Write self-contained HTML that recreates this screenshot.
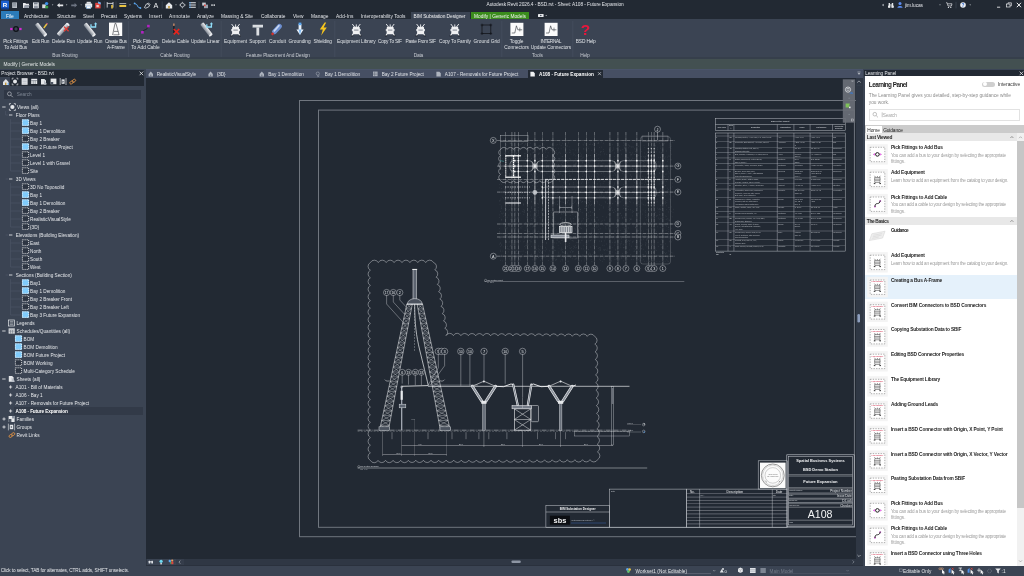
<!DOCTYPE html>
<html><head><meta charset="utf-8"><title>Autodesk Revit 2026.4 - BSD.rvt - Sheet: A108 - Future Expansion</title>
<style>
html,body{margin:0;padding:0;background:#222933;overflow:hidden}
body{width:1024px;height:576px;position:relative;font-family:"Liberation Sans",sans-serif;}
#app{position:absolute;left:0;top:0;width:1024px;height:576px;overflow:hidden;will-change:transform}
.b{position:absolute;box-sizing:border-box;overflow:hidden}
.t{position:absolute;white-space:nowrap;}
svg{overflow:visible}
svg text{font-family:"Liberation Sans",sans-serif}
</style></head><body><div id="app">
<div class="b" style="left:0.00px;top:0.00px;width:1024.00px;height:11.20px;background:#222933;"></div>
<div class="b" style="left:0.00px;top:11.20px;width:1024.00px;height:8.20px;background:#222933;"></div>
<div class="b" style="left:0.00px;top:19.40px;width:1024.00px;height:40.60px;background:#3b4453;"></div>
<div class="b" style="left:0.00px;top:57.00px;width:1024.00px;height:3.00px;background:#363f4b;"></div>
<div class="b" style="left:0.00px;top:58.60px;width:1024.00px;height:12.40px;background:#435051;"></div>
<div class="b" style="left:0.00px;top:68.50px;width:1024.00px;height:2.50px;background:#3b4556;"></div>
<svg class="b" style="left:0.00px;top:0.00px;" width="260" height="11" viewBox="0 0 260 11"><rect x="1" y="0.6" width="8" height="8.6" rx="0.6" fill="#1b5fd0"/><rect x="1" y="7.6" width="8" height="1.6" fill="#0d3c94"/><text x="5" y="6.8" font-size="6.2" font-weight="bold" fill="#fff" text-anchor="middle">R</text><path d="M12.2 2.4h4.8v5.6h-4.8z" fill="#b9bec6"/><path d="M13 3.6h3.2M13 4.8h3.2M13 6h3.2" stroke="#5b6472" stroke-width=".5"/><path d="M23 3h2.4l.6.8h3v4.2h-6z" fill="#e9ebee"/><path d="M23.6 8l1-3h5l-1 3z" fill="#9aa1ad"/><rect x="33" y="2.4" width="5.8" height="5.8" fill="#e4e6ea"/><rect x="34" y="2.4" width="3.6" height="2" fill="#7d8592"/><rect x="34" y="5.6" width="3.8" height="2.6" fill="#9097a3"/><path d="M42.2 4.4h3.6v3.8h-3.6z" fill="#d7dade"/><circle cx="46.6" cy="3.6" r="1.7" fill="#3c8fe6"/><circle cx="46.8" cy="7" r="1.6" fill="#3aa04a"/><path d="M51.8 4.6h1.6l-.8 1z" fill="#c9cdd3"/><path d="M57 5.2l2.6-2.2v1.4h3.6v1.8h-3.6v1.3z" fill="#e6e8eb"/><path d="M65.8 4.6h1.6l-.8 1z" fill="#c9cdd3"/><path d="M77.2 5.2l-2.6-2.2v1.4h-3.4v1.8h3.4v1.3z" fill="#6d7583"/><path d="M80.4 4.6h1.6l-.8 1z" fill="#8b919c"/><rect x="85.2" y="3.6" width="7" height="3.8" rx=".6" fill="#eceef0"/><rect x="86.6" y="1.8" width="4.2" height="2" fill="#dfe2e6"/><rect x="86.6" y="6" width="4.2" height="2.6" fill="#fff" stroke="#7fb4ea" stroke-width=".5"/><path d="M95.2 2.8h5.4v5.6h-5.4z" fill="#e0423c"/><path d="M98 1.6l2.8 1v2l-2.8-1z" fill="#6fb0ee"/><rect x="96.4" y="5" width="2.4" height="2.2" fill="#f7c9c5"/><path d="M104.4 1.4v7.2M116 1.4v7.2" stroke="#4b5462" stroke-width=".5"/><path d="M107.2 2v5.6M113 2v5.6M107.2 3.4h5.8" stroke="#e8eaed" stroke-width=".8" fill="none"/><path d="M111.2 5h1.6v3l-.8.9-.8-.9z" fill="#e8c341"/><path d="M119.4 3.6h6.8" stroke="#e8eaed" stroke-width=".7"/><rect x="119.4" y="5" width="6.8" height="2" fill="#e8c341"/><path d="M129.2 4.6h1.6l-.8 1z" fill="#c9cdd3"/><path d="M134.4 3.4l2.4 1.2 1.4 2.6 2.4.8" stroke="#5aa7f0" stroke-width=".9" fill="none"/><circle cx="134.6" cy="3.4" r=".9" fill="#5aa7f0"/><circle cx="140.4" cy="8" r=".9" fill="#5aa7f0"/><path d="M144.4 7.6l2-3.6 2.2-1 1.4 1.6-1.2 2.2-3 1.4z" fill="none" stroke="#dfe2e6" stroke-width=".8"/><circle cx="148.2" cy="4.6" r=".7" fill="#dfe2e6"/><text x="156" y="8" font-size="7.2" fill="#eceef0" text-anchor="middle">A</text><path d="M162.2 1.4v7.2M199 1.4v7.2" stroke="#4b5462" stroke-width=".5"/><path d="M165.8 5.2l3.2-3 3.2 3v3.2h-6.4z" fill="#e6e8eb"/><rect x="168.2" y="6" width="1.6" height="2.4" fill="#c49a3a"/><path d="M175.2 4.6h1.6l-.8 1z" fill="#c9cdd3"/><circle cx="182.4" cy="5" r="2" fill="none" stroke="#dfe2e6" stroke-width=".7"/><path d="M182.4 1.8v1.4M182.4 6.8v1.6M179.2 5h1.4M184.2 5h1.6" stroke="#dfe2e6" stroke-width=".6"/><path d="M189.2 2.8h6.6M189.2 5h6.6M189.2 7.2h6.6" stroke="#e6e8eb" stroke-width="1.1"/><path d="M189.2 2.8h1.6M189.2 5h1.6M189.2 7.2h1.6" stroke="#5aa7f0" stroke-width="1.1"/><rect x="202.2" y="2.6" width="3.6" height="3" fill="#c8ccd2"/><rect x="204" y="4.6" width="4" height="3.6" fill="#9aa1ad"/><rect x="204" y="4.6" width="1.6" height="1.6" fill="#e0423c"/><path d="M211.4 4.2h1.2v1.8h-1.2zM213.6 4.2h1.2v1.8h-1.2z" fill="#e6e8eb"/></svg>
<span class="t " style="left:486.50px;top:2px;font-size:4.8px;line-height:5px;color:#e2e4e8;letter-spacing:-0.065px;">Autodesk Revit 2026.4 - BSD.rvt - Sheet: A108 - Future Expansion</span>
<svg class="b" style="left:0.00px;top:0.00px;" width="1024" height="11" viewBox="0 0 1024 11"><path d="M883.6 3.8v2.4l-1.6-1.2z" fill="#c9cdd3"/><path d="M888.6 3h1.4v4.4h-1.4zM891.8 3h1.4v4.4h-1.4zM890 4.4h1.8v1.2h-1.8z" fill="#e6e8eb"/><rect x="888" y="5.4" width="2.4" height="2.4" rx=".6" fill="#e6e8eb"/><rect x="891.4" y="5.4" width="2.4" height="2.4" rx=".6" fill="#e6e8eb"/><circle cx="900" cy="3.4" r="1.5" fill="#5b8cf0"/><path d="M897.4 7.8c0-2.4 5.2-2.4 5.2 0z" fill="#5b8cf0"/><path d="M939.2 4.6h1.6l-.8 1z" fill="#c9cdd3"/><path d="M946 2.8h1.2l.8 3.2h3.4l.6-2.2h-4.2" stroke="#e6e8eb" stroke-width=".7" fill="none"/><circle cx="948.4" cy="7.4" r=".6" fill="#e6e8eb"/><circle cx="950.8" cy="7.4" r=".6" fill="#e6e8eb"/><path d="M956 1.8v6.6" stroke="#4b5462" stroke-width=".5"/><circle cx="963" cy="5" r="2.8" fill="#eef0f3"/><text x="963" y="6.8" font-size="4.8" font-weight="bold" fill="#2a62c9" text-anchor="middle">?</text><path d="M969.4 4.6h1.6l-.8 1z" fill="#c9cdd3"/><path d="M997 7.2h3.2" stroke="#e6e8eb" stroke-width=".9"/><rect x="1006.6" y="4" width="3.4" height="3" fill="none" stroke="#e6e8eb" stroke-width=".7"/><path d="M1008 4v-1.2h3.4v3h-1.4" fill="none" stroke="#e6e8eb" stroke-width=".7"/><path d="M1016.8 2.8l4.2 4.4M1021 2.8l-4.2 4.4" stroke="#f2f3f5" stroke-width="1"/></svg>
<span class="t " style="left:905.00px;top:3px;font-size:4.8px;line-height:5px;color:#e2e4e8;letter-spacing:-0.084px;">jim.lucas</span>
<div class="b" style="left:1.00px;top:11.20px;width:18.00px;height:8.20px;background:#2b7bb9;"></div>
<span class="t " style="left:6.00px;top:14px;font-size:4.8px;line-height:5px;color:#ffffff;letter-spacing:-0.045px;">File</span>
<span class="t " style="left:24.00px;top:14px;font-size:4.8px;line-height:5px;color:#e2e4e8;letter-spacing:-0.055px;">Architecture</span>
<span class="t " style="left:57.00px;top:14px;font-size:4.8px;line-height:5px;color:#e2e4e8;letter-spacing:-0.059px;">Structure</span>
<span class="t " style="left:83.00px;top:14px;font-size:4.8px;line-height:5px;color:#e2e4e8;letter-spacing:0.015px;">Steel</span>
<span class="t " style="left:101.00px;top:14px;font-size:4.8px;line-height:5px;color:#e2e4e8;letter-spacing:-0.045px;">Precast</span>
<span class="t " style="left:124.00px;top:14px;font-size:4.8px;line-height:5px;color:#e2e4e8;letter-spacing:-0.067px;">Systems</span>
<span class="t " style="left:149.00px;top:14px;font-size:4.8px;line-height:5px;color:#e2e4e8;letter-spacing:0.199px;">Insert</span>
<span class="t " style="left:169.00px;top:14px;font-size:4.8px;line-height:5px;color:#e2e4e8;letter-spacing:0.255px;">Annotate</span>
<span class="t " style="left:197.00px;top:14px;font-size:4.8px;line-height:5px;color:#e2e4e8;letter-spacing:-0.013px;">Analyze</span>
<span class="t " style="left:221.00px;top:14px;font-size:4.8px;line-height:5px;color:#e2e4e8;">Massing &amp; Site</span>
<span class="t " style="left:261.00px;top:14px;font-size:4.8px;line-height:5px;color:#e2e4e8;">Collaborate</span>
<span class="t " style="left:293.00px;top:14px;font-size:4.8px;line-height:5px;color:#e2e4e8;letter-spacing:0.061px;">View</span>
<span class="t " style="left:311.00px;top:14px;font-size:4.8px;line-height:5px;color:#e2e4e8;letter-spacing:0.031px;">Manage</span>
<span class="t " style="left:336.00px;top:14px;font-size:4.8px;line-height:5px;color:#e2e4e8;letter-spacing:0.160px;">Add-Ins</span>
<span class="t " style="left:361.00px;top:14px;font-size:4.8px;line-height:5px;color:#e2e4e8;letter-spacing:0.027px;">Interoperability Tools</span>
<div class="b" style="left:410.50px;top:11.60px;width:59.30px;height:7.80px;background:#3b4453;"></div>
<span class="t " style="left:413.50px;top:14px;font-size:4.8px;line-height:5px;color:#f0f1f3;letter-spacing:-0.050px;">BIM Substation Designer</span>
<div class="b" style="left:470.60px;top:11.60px;width:58.40px;height:7.80px;background:#3a8c1c;"></div>
<span class="t " style="left:474.00px;top:14px;font-size:4.8px;line-height:5px;color:#f4f6f4;letter-spacing:0.015px;">Modify | Generic Models</span>
<svg class="b" style="left:0.00px;top:0.00px;" width="560" height="20" viewBox="0 0 560 20"><rect x="538" y="14" width="5.6" height="3" rx=".6" fill="#e6e8eb"/><circle cx="540.8" cy="15.5" r=".8" fill="#3b4453"/><path d="M545.4 15h1.6l-.8 1z" fill="#c9cdd3"/></svg>
<span class="t " style="left:3.20px;top:39px;font-size:4.8px;line-height:5px;color:#dfe2e6;letter-spacing:-0.073px;">Pick Fittings</span>
<span class="t " style="left:4.20px;top:45px;font-size:4.8px;line-height:5px;color:#dfe2e6;letter-spacing:-0.143px;">To Add Bus</span>
<span class="t " style="left:32.05px;top:39px;font-size:4.8px;line-height:5px;color:#dfe2e6;letter-spacing:-0.130px;">Edit Run</span>
<span class="t " style="left:52.10px;top:39px;font-size:4.8px;line-height:5px;color:#dfe2e6;letter-spacing:-0.113px;">Delete Run</span>
<span class="t " style="left:77.05px;top:39px;font-size:4.8px;line-height:5px;color:#dfe2e6;letter-spacing:-0.013px;">Update Run</span>
<span class="t " style="left:105.00px;top:39px;font-size:4.8px;line-height:5px;color:#dfe2e6;letter-spacing:-0.223px;">Create Bus</span>
<span class="t " style="left:107.00px;top:45px;font-size:4.8px;line-height:5px;color:#dfe2e6;letter-spacing:-0.111px;">A-Frame</span>
<span class="t " style="left:132.90px;top:39px;font-size:4.8px;line-height:5px;color:#dfe2e6;letter-spacing:-0.073px;">Pick Fittings</span>
<span class="t " style="left:131.15px;top:45px;font-size:4.8px;line-height:5px;color:#dfe2e6;">To Add Cable</span>
<span class="t " style="left:162.10px;top:39px;font-size:4.8px;line-height:5px;color:#dfe2e6;letter-spacing:-0.068px;">Delete Cable</span>
<span class="t " style="left:191.05px;top:39px;font-size:4.8px;line-height:5px;color:#dfe2e6;letter-spacing:-0.138px;">Update Linear</span>
<span class="t " style="left:224.10px;top:39px;font-size:4.8px;line-height:5px;color:#dfe2e6;letter-spacing:0.007px;">Equipment</span>
<span class="t " style="left:249.35px;top:39px;font-size:4.8px;line-height:5px;color:#dfe2e6;letter-spacing:-0.052px;">Support</span>
<span class="t " style="left:269.00px;top:39px;font-size:4.8px;line-height:5px;color:#dfe2e6;letter-spacing:0.076px;">Conduit</span>
<span class="t " style="left:288.60px;top:39px;font-size:4.8px;line-height:5px;color:#dfe2e6;letter-spacing:-0.052px;">Grounding</span>
<span class="t " style="left:313.55px;top:39px;font-size:4.8px;line-height:5px;color:#dfe2e6;letter-spacing:-0.156px;">Shielding</span>
<span class="t " style="left:337.05px;top:39px;font-size:4.8px;line-height:5px;color:#dfe2e6;letter-spacing:-0.028px;">Equipment Library</span>
<span class="t " style="left:378.00px;top:39px;font-size:4.8px;line-height:5px;color:#dfe2e6;letter-spacing:-0.232px;">Copy To SIF</span>
<span class="t " style="left:405.55px;top:39px;font-size:4.8px;line-height:5px;color:#dfe2e6;letter-spacing:-0.239px;">Paste From SIF</span>
<span class="t " style="left:439.00px;top:39px;font-size:4.8px;line-height:5px;color:#dfe2e6;letter-spacing:-0.076px;">Copy To Family</span>
<span class="t " style="left:473.50px;top:39px;font-size:4.8px;line-height:5px;color:#dfe2e6;letter-spacing:-0.021px;">Ground Grid</span>
<span class="t " style="left:509.85px;top:39px;font-size:4.8px;line-height:5px;color:#dfe2e6;letter-spacing:-0.129px;">Toggle</span>
<span class="t " style="left:504.35px;top:45px;font-size:4.8px;line-height:5px;color:#dfe2e6;">Connectors</span>
<span class="t " style="left:540.60px;top:39px;font-size:4.8px;line-height:5px;color:#dfe2e6;letter-spacing:-0.420px;">INTERNAL</span>
<span class="t " style="left:530.75px;top:45px;font-size:4.8px;line-height:5px;color:#dfe2e6;letter-spacing:-0.053px;">Update Connectors</span>
<span class="t " style="left:575.80px;top:39px;font-size:4.8px;line-height:5px;color:#dfe2e6;letter-spacing:-0.154px;">BSD Help</span>
<span class="t " style="left:52.25px;top:53px;font-size:4.8px;line-height:5px;color:#c5c9cf;letter-spacing:-0.065px;">Bus Routing</span>
<span class="t " style="left:160.25px;top:53px;font-size:4.8px;line-height:5px;color:#c5c9cf;letter-spacing:-0.076px;">Cable Routing</span>
<span class="t " style="left:246.00px;top:53px;font-size:4.8px;line-height:5px;color:#c5c9cf;letter-spacing:-0.090px;">Feature Placement And Design</span>
<span class="t " style="left:413.75px;top:53px;font-size:4.8px;line-height:5px;color:#c5c9cf;letter-spacing:-0.213px;">Data</span>
<span class="t " style="left:532.00px;top:53px;font-size:4.8px;line-height:5px;color:#c5c9cf;letter-spacing:-0.051px;">Tools</span>
<span class="t " style="left:580.25px;top:53px;font-size:4.8px;line-height:5px;color:#c5c9cf;letter-spacing:-0.124px;">Help</span>
<svg class="b" style="left:0.00px;top:0.00px;" width="620" height="58" viewBox="0 0 620 58"><defs><linearGradient id="cg" x1="0" y1="0" x2="0" y2="1"><stop offset="0" stop-color="#f1f2f4"/><stop offset=".5" stop-color="#b9bdc4"/><stop offset="1" stop-color="#7f8691"/></linearGradient></defs><path d="M128.6 21v36" stroke="#4a5363" stroke-width=".6"/><path d="M221.2 21v36" stroke="#4a5363" stroke-width=".6"/><path d="M334.8 21v36" stroke="#4a5363" stroke-width=".6"/><path d="M501.8 21v36" stroke="#4a5363" stroke-width=".6"/><path d="M572.8 21v36" stroke="#4a5363" stroke-width=".6"/><path d="M11 29h10" stroke="#14171c" stroke-width=".9"/><rect x="10.2" y="27.9" width="2.4" height="2.2" fill="#d22ad2"/><rect x="19.2" y="27.9" width="2.4" height="2.2" fill="#d22ad2"/><circle cx="16" cy="29" r="2.3" fill="#3b4453" stroke="#101318" stroke-width="1.3"/><g transform="rotate(52 41 29.5)"><rect x="33.5" y="27.5" width="15" height="4" rx="1" fill="url(#cg)"/><ellipse cx="48.1" cy="29.5" rx="1" ry="2.0" fill="#e9ebee"/></g><path d="M43.2 27.6l3-4 1.2.9-3 4z" fill="#e8c341"/><path d="M46.2 23.6l.6-.8 1.2.9-.6.8z" fill="#e05a8a"/><g transform="rotate(-48 63.2 29.6)"><rect x="55.7" y="27.6" width="15" height="4" rx="1" fill="url(#cg)"/><ellipse cx="70.3" cy="29.6" rx="1" ry="2.0" fill="#e9ebee"/></g><path d="M64 26.6l4.6 4.6M68.6 26.6l-4.6 4.6" stroke="#e23b32" stroke-width="1.3"/><g transform="rotate(52 89.6 29.6)"><rect x="82.1" y="27.6" width="15" height="4" rx="1" fill="url(#cg)"/><ellipse cx="96.69999999999999" cy="29.6" rx="1" ry="2.0" fill="#e9ebee"/></g><path d="M91 24.200v2.800h4.600v-3.200" stroke="#8fdcf7" stroke-width="1.300" fill="none"/><path d="M94 24.200l1.600-1.900 1.600 1.900z" fill="#8fdcf7"/><rect x="109" y="22.6" width="13.2" height="13.4" fill="#fbfbfb"/><path d="M112.6 35l2.4-11.6h.9l3.2 11.6M114 31.4h4.2M113.4 34.8h5.6" stroke="#30343b" stroke-width=".6" fill="none"/><path d="M142.400 32.200c.8-3 4.800-1.600 6-5.800" stroke="#161a20" stroke-width=".8" fill="none"/><rect x="141.100" y="31" width="2.600" height="2.600" fill="#b322c4"/><rect x="147.100" y="24.800" width="2.600" height="2.600" fill="#b322c4"/><path d="M173.900 25v8" stroke="#15181d" stroke-width="1.200"/><path d="M173.900 23.600v2.400" stroke="#f0a070" stroke-width="1.100"/><path d="M173.800 29l5.400 5.400M179.200 29l-5.400 5.400" stroke="#e8241c" stroke-width="1.700"/><g transform="rotate(52 206.4 29.4)"><rect x="198.9" y="27.4" width="15" height="4" rx="1" fill="url(#cg)"/><ellipse cx="213.5" cy="29.4" rx="1" ry="2.0" fill="#e9ebee"/></g><path d="M206.800 24.200v2.800h4.600v-3.200" stroke="#8fdcf7" stroke-width="1.300" fill="none"/><path d="M209.800 24.200l1.600-1.900 1.600 1.900z" fill="#8fdcf7"/><g transform="translate(235.6 29.6)"><path d="M-1.600 -2.400L-4 -5.600M0 -2.400V-5.200M1.600 -2.400L4 -5.600" stroke="#f1f2f4" stroke-width=".9"/><path d="M-2.800 3.800L-4.400 6.200M2.800 3.800L4.400 6.200" stroke="#f4f5f6" stroke-width="1.100"/><path d="M-5.200 6.300h2M3.200 6.300h2" stroke="#111418" stroke-width=".8"/><rect x="-4.400" y="-.6" width="8.800" height="2.200" fill="#d4d7dc"/><rect x="-3.500" y="-2.800" width="7" height="7.400" rx="1.200" fill="#eff0f2"/><path d="M-2.200 .5h4.400" stroke="#737a86" stroke-width=".9"/></g><path d="M252.6 24.8h10.4v2.6h-3.8v8h-2.8v-8h-3.8z" fill="#dcdfe3"/><path d="M252.6 27.4h10.4" stroke="#8f96a1" stroke-width=".5"/><g transform="rotate(-48 277 29)"><rect x="271" y="26.6" width="12" height="4.8" rx="2" fill="#6d8fd0"/><rect x="273" y="27.4" width="8.6" height="1.6" rx=".8" fill="#c9d8f3"/><rect x="269.2" y="27.8" width="2.4" height="2.4" fill="#d2302a"/></g><path d="M298.6 24h2.8v5.6h2.2l-3.6 5.4-3.6-5.4h2.2z" fill="#eaf2fb"/><path d="M298.6 22.6h2.8v2.6h-2.8z" fill="#5aa7f0"/><path d="M298.6 29.6l1.4 5.4 1.4-5.4z" fill="#7db9f2"/><path d="M324.6 22.6l-4.8 7h3l-1.6 5.8 5.6-7.8h-3.2l2.6-5z" fill="#f6c51e"/><g transform="translate(356.3 29.6)"><path d="M-1.600 -2.400L-4 -5.600M0 -2.400V-5.200M1.600 -2.400L4 -5.600" stroke="#f1f2f4" stroke-width=".9"/><path d="M-2.800 3.800L-4.400 6.200M2.800 3.800L4.400 6.200" stroke="#f4f5f6" stroke-width="1.100"/><path d="M-5.200 6.300h2M3.200 6.300h2" stroke="#111418" stroke-width=".8"/><rect x="-4.400" y="-.6" width="8.800" height="2.200" fill="#d4d7dc"/><rect x="-3.500" y="-2.800" width="7" height="7.400" rx="1.200" fill="#eff0f2"/><path d="M-2.200 .5h4.400" stroke="#737a86" stroke-width=".9"/></g><g transform="translate(390.2 29.6)"><path d="M-1.600 -2.400L-4 -5.600M0 -2.400V-5.200M1.600 -2.400L4 -5.600" stroke="#f1f2f4" stroke-width=".9"/><path d="M-2.800 3.800L-4.400 6.200M2.800 3.800L4.400 6.200" stroke="#f4f5f6" stroke-width="1.100"/><path d="M-5.200 6.300h2M3.200 6.300h2" stroke="#111418" stroke-width=".8"/><rect x="-4.400" y="-.6" width="8.800" height="2.200" fill="#d4d7dc"/><rect x="-3.500" y="-2.800" width="7" height="7.400" rx="1.200" fill="#eff0f2"/><path d="M-2.200 .5h4.400" stroke="#737a86" stroke-width=".9"/></g><g transform="translate(420.6 29.6)"><path d="M-1.600 -2.400L-4 -5.600M0 -2.400V-5.200M1.600 -2.400L4 -5.600" stroke="#f1f2f4" stroke-width=".9"/><path d="M-2.800 3.800L-4.400 6.200M2.800 3.800L4.400 6.200" stroke="#f4f5f6" stroke-width="1.100"/><path d="M-5.200 6.300h2M3.200 6.300h2" stroke="#111418" stroke-width=".8"/><rect x="-4.400" y="-.6" width="8.800" height="2.200" fill="#d4d7dc"/><rect x="-3.500" y="-2.800" width="7" height="7.400" rx="1.200" fill="#eff0f2"/><path d="M-2.200 .5h4.400" stroke="#737a86" stroke-width=".9"/></g><g transform="translate(454.8 29.6)"><path d="M-1.600 -2.400L-4 -5.600M0 -2.400V-5.200M1.600 -2.400L4 -5.600" stroke="#f1f2f4" stroke-width=".9"/><path d="M-2.800 3.800L-4.400 6.200M2.800 3.800L4.400 6.200" stroke="#f4f5f6" stroke-width="1.100"/><path d="M-5.200 6.300h2M3.200 6.300h2" stroke="#111418" stroke-width=".8"/><rect x="-4.400" y="-.6" width="8.800" height="2.200" fill="#d4d7dc"/><rect x="-3.500" y="-2.800" width="7" height="7.400" rx="1.200" fill="#eff0f2"/><path d="M-2.200 .5h4.400" stroke="#737a86" stroke-width=".9"/></g><rect x="482" y="25" width="8.8" height="8.6" fill="none" stroke="#14171c" stroke-width=".8"/><path d="M480.6 25h2.8M482 23.6v2.8" stroke="#14171c" stroke-width=".7"/><path d="M480.6 33.6h2.8M482 32.2v2.8" stroke="#14171c" stroke-width=".7"/><path d="M489.40000000000003 25h2.8M490.8 23.6v2.8" stroke="#14171c" stroke-width=".7"/><path d="M489.40000000000003 33.6h2.8M490.8 32.2v2.8" stroke="#14171c" stroke-width=".7"/><rect x="510.4" y="22.8" width="13" height="13.2" fill="#fbfbfb"/><path d="M511.79999999999995 33.0h3l1.6-7.2 1.4 4h4.4" stroke="#2e3239" stroke-width=".6" fill="none"/><path d="M519.8 27.6v3.8" stroke="#2e3239" stroke-width=".5"/><rect x="544.6" y="22.8" width="13" height="13.2" fill="#fbfbfb"/><path d="M546.0 33.0h3l1.6-7.2 1.4 4h4.4" stroke="#2e3239" stroke-width=".6" fill="none"/><path d="M554.0 27.6v3.8" stroke="#2e3239" stroke-width=".5"/><text x="585.4" y="35" font-size="15.5" font-weight="bold" fill="#e8173c" text-anchor="middle">?</text></svg>
<span class="t " style="left:3.60px;top:62px;font-size:4.8px;line-height:5px;color:#e2e6e6;letter-spacing:-0.012px;">Modify | Generic Models</span>
<div class="b" style="left:0.00px;top:70.00px;width:145.80px;height:497.00px;background:#3b4453;"></div>
<div class="b" style="left:0.00px;top:70.20px;width:144.20px;height:6.40px;background:#222933;"></div>
<span class="t " style="left:1.30px;top:71px;font-size:4.7px;line-height:5px;color:#e6e8eb;letter-spacing:-0.039px;">Project Browser - BSD.rvt</span>
<svg class="b" style="left:0.00px;top:0.00px;" width="146" height="100" viewBox="0 0 146 100"><path d="M139.6 71.6l3.6 3.6M143.2 71.6l-3.6 3.6" stroke="#e6e8eb" stroke-width=".8"/></svg>
<div class="b" style="left:10.40px;top:77.20px;width:133.80px;height:8.50px;background:#222933;"></div>
<svg class="b" style="left:0.00px;top:0.00px;" width="146" height="100" viewBox="0 0 146 100"><path d="M3 82l2.8-3 2.8 3v3h-5.6z" fill="#dfe2e6"/><rect x="5" y="82.6" width="1.4" height="2.4" fill="#c49a3a"/><rect x="7.6" y="83.2" width="1.4" height="1.4" fill="#5aa7f0"/><circle cx="15" cy="81.4" r="2" fill="#e6e8eb"/><path d="M12.2 79.6v-1.4h1.4M17.8 79.6v-1.4h-1.4M12.2 83.4v1.4h1.4M17.8 83.4v1.4h-1.4" stroke="#e6e8eb" stroke-width=".7" fill="none"/><rect x="21.6" y="78.2" width="6" height="6.6" fill="#e6e8eb"/><path d="M22.6 80h4M22.6 81.6h4M22.6 83.2h4" stroke="#9aa1ad" stroke-width=".5"/><rect x="31.2" y="78.8" width="6" height="5.2" fill="#e6e8eb"/><path d="M31.2 80.6h6M33.2 80.6v3.4M35.2 80.6v3.4" stroke="#4d5563" stroke-width=".5"/><path d="M41 79h3.4l1.6 1.6v4h-5z" fill="#e6e8eb"/><path d="M44 80l2.6 3.4v1.2h-2.6z" fill="#b9bec6"/><rect x="50.6" y="78.6" width="5.8" height="5.6" fill="#e6e8eb"/><rect x="50.6" y="82" width="2.6" height="2.2" fill="#4d5563"/><path d="M60.2 78v7M66 78v7" stroke="#e6e8eb" stroke-width=".7"/><path d="M61.6 79.4h3v4.4h-3z" fill="#e6e8eb"/><path d="M62.4 80.6l1.6 1.2-1.6 1.2z" fill="#4d5563"/><g transform="rotate(-35 72.8 81.6)" fill="none" stroke="#d18a45" stroke-width=".9"><rect x="69.4" y="80.4" width="3.8" height="2.4" rx="1.2"/><rect x="72.2" y="80.4" width="3.8" height="2.4" rx="1.2"/></g></svg>
<div class="b" style="left:4.00px;top:90.00px;width:136.80px;height:8.50px;background:#2f3745;"></div>
<svg class="b" style="left:0.00px;top:0.00px;" width="146" height="100" viewBox="0 0 146 100"><circle cx="9.4" cy="93.8" r="1.9" fill="none" stroke="#c9cdd3" stroke-width=".6"/><path d="M10.8 95.2l2 2" stroke="#c9cdd3" stroke-width=".7"/></svg>
<span class="t " style="left:16.80px;top:92px;font-size:4.7px;line-height:5px;color:#7f8794;">Search</span>
<span class="t " style="left:17.00px;top:105px;font-size:4.7px;line-height:5px;color:#e6e8eb;">Views (all)</span>
<span class="t " style="left:15.80px;top:113px;font-size:4.7px;line-height:5px;color:#e6e8eb;">Floor Plans</span>
<span class="t " style="left:30.00px;top:121px;font-size:4.7px;line-height:5px;color:#e6e8eb;">Bay 1</span>
<span class="t " style="left:30.00px;top:129px;font-size:4.7px;line-height:5px;color:#e6e8eb;">Bay 1 Demolition</span>
<span class="t " style="left:30.00px;top:137px;font-size:4.7px;line-height:5px;color:#e6e8eb;">Bay 2 Breaker</span>
<span class="t " style="left:30.00px;top:145px;font-size:4.7px;line-height:5px;color:#e6e8eb;">Bay 2 Future Project</span>
<span class="t " style="left:30.00px;top:153px;font-size:4.7px;line-height:5px;color:#e6e8eb;">Level 1</span>
<span class="t " style="left:30.00px;top:161px;font-size:4.7px;line-height:5px;color:#e6e8eb;">Level 1 with Gravel</span>
<span class="t " style="left:30.00px;top:169px;font-size:4.7px;line-height:5px;color:#e6e8eb;">Site</span>
<span class="t " style="left:15.80px;top:177px;font-size:4.7px;line-height:5px;color:#e6e8eb;">3D Views</span>
<span class="t " style="left:30.00px;top:185px;font-size:4.7px;line-height:5px;color:#e6e8eb;">3D No Toposolid</span>
<span class="t " style="left:30.00px;top:193px;font-size:4.7px;line-height:5px;color:#e6e8eb;">Bay 1</span>
<span class="t " style="left:30.00px;top:201px;font-size:4.7px;line-height:5px;color:#e6e8eb;">Bay 1 Demolition</span>
<span class="t " style="left:30.00px;top:209px;font-size:4.7px;line-height:5px;color:#e6e8eb;">Bay 2 Breaker</span>
<span class="t " style="left:30.00px;top:217px;font-size:4.7px;line-height:5px;color:#e6e8eb;">RealisticVisualStyle</span>
<span class="t " style="left:30.00px;top:225px;font-size:4.7px;line-height:5px;color:#e6e8eb;">{3D}</span>
<span class="t " style="left:15.80px;top:233px;font-size:4.7px;line-height:5px;color:#e6e8eb;">Elevations (Building Elevation)</span>
<span class="t " style="left:30.00px;top:241px;font-size:4.7px;line-height:5px;color:#e6e8eb;">East</span>
<span class="t " style="left:30.00px;top:249px;font-size:4.7px;line-height:5px;color:#e6e8eb;">North</span>
<span class="t " style="left:30.00px;top:257px;font-size:4.7px;line-height:5px;color:#e6e8eb;">South</span>
<span class="t " style="left:30.00px;top:265px;font-size:4.7px;line-height:5px;color:#e6e8eb;">West</span>
<span class="t " style="left:15.80px;top:273px;font-size:4.7px;line-height:5px;color:#e6e8eb;">Sections (Building Section)</span>
<span class="t " style="left:30.00px;top:281px;font-size:4.7px;line-height:5px;color:#e6e8eb;">Bay1</span>
<span class="t " style="left:30.00px;top:289px;font-size:4.7px;line-height:5px;color:#e6e8eb;">Bay 1 Demolition</span>
<span class="t " style="left:30.00px;top:297px;font-size:4.7px;line-height:5px;color:#e6e8eb;">Bay 2 Breaker Front</span>
<span class="t " style="left:30.00px;top:305px;font-size:4.7px;line-height:5px;color:#e6e8eb;">Bay 2 Breaker Left</span>
<span class="t " style="left:30.00px;top:313px;font-size:4.7px;line-height:5px;color:#e6e8eb;">Bay 3 Future Expansion</span>
<span class="t " style="left:16.60px;top:321px;font-size:4.7px;line-height:5px;color:#e6e8eb;">Legends</span>
<span class="t " style="left:16.60px;top:329px;font-size:4.7px;line-height:5px;color:#e6e8eb;">Schedules/Quantities (all)</span>
<span class="t " style="left:23.60px;top:337px;font-size:4.7px;line-height:5px;color:#e6e8eb;">BOM</span>
<span class="t " style="left:23.60px;top:345px;font-size:4.7px;line-height:5px;color:#e6e8eb;">BOM Demolition</span>
<span class="t " style="left:23.60px;top:353px;font-size:4.7px;line-height:5px;color:#e6e8eb;">BOM Future Project</span>
<span class="t " style="left:23.60px;top:361px;font-size:4.7px;line-height:5px;color:#e6e8eb;">BOM Working</span>
<span class="t " style="left:23.60px;top:369px;font-size:4.7px;line-height:5px;color:#e6e8eb;">Multi-Category Schedule</span>
<span class="t " style="left:16.60px;top:377px;font-size:4.7px;line-height:5px;color:#e6e8eb;">Sheets (all)</span>
<span class="t " style="left:15.60px;top:385px;font-size:4.7px;line-height:5px;color:#e6e8eb;">A101 - Bill of Materials</span>
<span class="t " style="left:15.60px;top:393px;font-size:4.7px;line-height:5px;color:#e6e8eb;">A106 - Bay 1</span>
<span class="t " style="left:15.60px;top:401px;font-size:4.7px;line-height:5px;color:#e6e8eb;">A107 - Removals for Future Project</span>
<div class="b" style="left:14.20px;top:407.40px;width:129.20px;height:7.40px;background:#323a48;"></div>
<span class="t " style="left:15.60px;top:409px;font-size:4.7px;line-height:5px;color:#ffffff;font-weight:bold;letter-spacing:-.12px;">A108 - Future Expansion</span>
<span class="t " style="left:16.60px;top:417px;font-size:4.7px;line-height:5px;color:#e6e8eb;">Families</span>
<span class="t " style="left:16.60px;top:425px;font-size:4.7px;line-height:5px;color:#e6e8eb;">Groups</span>
<span class="t " style="left:16.60px;top:433px;font-size:4.7px;line-height:5px;color:#e6e8eb;">Revit Links</span>
<svg class="b" style="left:0.00px;top:0.00px;" width="146" height="566" viewBox="0 0 146 566"><path d="M2.2 107h3.4" stroke="#f1f2f4" stroke-width=".8"/><circle cx="12.4" cy="107" r="2.1" fill="#e6e8eb"/><path d="M9.4 105.2v-1.6h1.6M15.4 105.2v-1.6h-1.6M9.4 108.8v1.6h1.6M15.4 108.8v1.6h-1.6" stroke="#e6e8eb" stroke-width=".7" fill="none"/><path d="M9 115h3.4" stroke="#f1f2f4" stroke-width=".8"/><path d="M5.6 115h2.6" stroke="#596273" stroke-width=".4"/><rect x="22" y="119.4" width="7" height="6.400" fill="#7fcbfb"/><rect x="22.4" y="119.8" width="6.200" height="5.600" fill="none" stroke="#f4f5f6" stroke-width=".8" stroke-dasharray="1.200 .9"/><path d="M10.6 123h10.6" stroke="#596273" stroke-width=".4"/><rect x="22" y="127.4" width="7" height="6.400" fill="#7fcbfb"/><rect x="22.4" y="127.8" width="6.200" height="5.600" fill="none" stroke="#f4f5f6" stroke-width=".8" stroke-dasharray="1.200 .9"/><path d="M10.6 131h10.6" stroke="#596273" stroke-width=".4"/><rect x="22" y="135.4" width="7" height="6.400" fill="#2d3542"/><rect x="22.4" y="135.8" width="6.200" height="5.600" fill="none" stroke="#f4f5f6" stroke-width=".8" stroke-dasharray="1.200 .9"/><path d="M10.6 139h10.6" stroke="#596273" stroke-width=".4"/><rect x="22" y="143.4" width="7" height="6.400" fill="#7fcbfb"/><rect x="22.4" y="143.8" width="6.200" height="5.600" fill="none" stroke="#f4f5f6" stroke-width=".8" stroke-dasharray="1.200 .9"/><path d="M10.6 147h10.6" stroke="#596273" stroke-width=".4"/><rect x="22" y="151.4" width="7" height="6.400" fill="#2d3542"/><rect x="22.4" y="151.8" width="6.200" height="5.600" fill="none" stroke="#f4f5f6" stroke-width=".8" stroke-dasharray="1.200 .9"/><path d="M10.6 155h10.6" stroke="#596273" stroke-width=".4"/><rect x="22" y="159.4" width="7" height="6.400" fill="#2d3542"/><rect x="22.4" y="159.8" width="6.200" height="5.600" fill="none" stroke="#f4f5f6" stroke-width=".8" stroke-dasharray="1.200 .9"/><path d="M10.6 163h10.6" stroke="#596273" stroke-width=".4"/><rect x="22" y="167.4" width="7" height="6.400" fill="#2d3542"/><rect x="22.4" y="167.8" width="6.200" height="5.600" fill="none" stroke="#f4f5f6" stroke-width=".8" stroke-dasharray="1.200 .9"/><path d="M10.6 171h10.6" stroke="#596273" stroke-width=".4"/><path d="M9 179h3.4" stroke="#f1f2f4" stroke-width=".8"/><path d="M5.6 179h2.6" stroke="#596273" stroke-width=".4"/><rect x="22" y="183.4" width="7" height="6.400" fill="#2d3542"/><rect x="22.4" y="183.8" width="6.200" height="5.600" fill="none" stroke="#f4f5f6" stroke-width=".8" stroke-dasharray="1.200 .9"/><path d="M10.6 187h10.6" stroke="#596273" stroke-width=".4"/><rect x="22" y="191.4" width="7" height="6.400" fill="#7fcbfb"/><rect x="22.4" y="191.8" width="6.200" height="5.600" fill="none" stroke="#f4f5f6" stroke-width=".8" stroke-dasharray="1.200 .9"/><path d="M10.6 195h10.6" stroke="#596273" stroke-width=".4"/><rect x="22" y="199.4" width="7" height="6.400" fill="#7fcbfb"/><rect x="22.4" y="199.8" width="6.200" height="5.600" fill="none" stroke="#f4f5f6" stroke-width=".8" stroke-dasharray="1.200 .9"/><path d="M10.6 203h10.6" stroke="#596273" stroke-width=".4"/><rect x="22" y="207.4" width="7" height="6.400" fill="#2d3542"/><rect x="22.4" y="207.8" width="6.200" height="5.600" fill="none" stroke="#f4f5f6" stroke-width=".8" stroke-dasharray="1.200 .9"/><path d="M10.6 211h10.6" stroke="#596273" stroke-width=".4"/><rect x="22" y="215.4" width="7" height="6.400" fill="#2d3542"/><rect x="22.4" y="215.8" width="6.200" height="5.600" fill="none" stroke="#f4f5f6" stroke-width=".8" stroke-dasharray="1.200 .9"/><path d="M10.6 219h10.6" stroke="#596273" stroke-width=".4"/><rect x="22" y="223.4" width="7" height="6.400" fill="#2d3542"/><rect x="22.4" y="223.8" width="6.200" height="5.600" fill="none" stroke="#f4f5f6" stroke-width=".8" stroke-dasharray="1.200 .9"/><path d="M10.6 227h10.6" stroke="#596273" stroke-width=".4"/><path d="M9 235h3.4" stroke="#f1f2f4" stroke-width=".8"/><path d="M5.6 235h2.6" stroke="#596273" stroke-width=".4"/><rect x="22" y="239.4" width="7" height="6.400" fill="#2d3542"/><rect x="22.4" y="239.8" width="6.200" height="5.600" fill="none" stroke="#f4f5f6" stroke-width=".8" stroke-dasharray="1.200 .9"/><path d="M10.6 243h10.6" stroke="#596273" stroke-width=".4"/><rect x="22" y="247.4" width="7" height="6.400" fill="#2d3542"/><rect x="22.4" y="247.8" width="6.200" height="5.600" fill="none" stroke="#f4f5f6" stroke-width=".8" stroke-dasharray="1.200 .9"/><path d="M10.6 251h10.6" stroke="#596273" stroke-width=".4"/><rect x="22" y="255.4" width="7" height="6.400" fill="#2d3542"/><rect x="22.4" y="255.8" width="6.200" height="5.600" fill="none" stroke="#f4f5f6" stroke-width=".8" stroke-dasharray="1.200 .9"/><path d="M10.6 259h10.6" stroke="#596273" stroke-width=".4"/><rect x="22" y="263.4" width="7" height="6.400" fill="#2d3542"/><rect x="22.4" y="263.8" width="6.200" height="5.600" fill="none" stroke="#f4f5f6" stroke-width=".8" stroke-dasharray="1.200 .9"/><path d="M10.6 267h10.6" stroke="#596273" stroke-width=".4"/><path d="M9 275h3.4" stroke="#f1f2f4" stroke-width=".8"/><path d="M5.6 275h2.6" stroke="#596273" stroke-width=".4"/><rect x="22" y="279.4" width="7" height="6.400" fill="#7fcbfb"/><rect x="22.4" y="279.8" width="6.200" height="5.600" fill="none" stroke="#f4f5f6" stroke-width=".8" stroke-dasharray="1.200 .9"/><path d="M10.6 283h10.6" stroke="#596273" stroke-width=".4"/><rect x="22" y="287.4" width="7" height="6.400" fill="#7fcbfb"/><rect x="22.4" y="287.8" width="6.200" height="5.600" fill="none" stroke="#f4f5f6" stroke-width=".8" stroke-dasharray="1.200 .9"/><path d="M10.6 291h10.6" stroke="#596273" stroke-width=".4"/><rect x="22" y="295.4" width="7" height="6.400" fill="#2d3542"/><rect x="22.4" y="295.8" width="6.200" height="5.600" fill="none" stroke="#f4f5f6" stroke-width=".8" stroke-dasharray="1.200 .9"/><path d="M10.6 299h10.6" stroke="#596273" stroke-width=".4"/><rect x="22" y="303.4" width="7" height="6.400" fill="#2d3542"/><rect x="22.4" y="303.8" width="6.200" height="5.600" fill="none" stroke="#f4f5f6" stroke-width=".8" stroke-dasharray="1.200 .9"/><path d="M10.6 307h10.6" stroke="#596273" stroke-width=".4"/><rect x="22" y="311.4" width="7" height="6.400" fill="#7fcbfb"/><rect x="22.4" y="311.8" width="6.200" height="5.600" fill="none" stroke="#f4f5f6" stroke-width=".8" stroke-dasharray="1.200 .9"/><path d="M10.6 315h10.6" stroke="#596273" stroke-width=".4"/><rect x="8.6" y="320" width="6" height="6" fill="none" stroke="#e6e8eb" stroke-width=".7"/><path d="M9.8 321.6h3.6M9.8 323h3.6M9.8 324.4h3.6" stroke="#e6e8eb" stroke-width=".5"/><path d="M2.2 331h3.4" stroke="#f1f2f4" stroke-width=".8"/><rect x="8.6" y="328.4" width="6.2" height="5.2" fill="#e6e8eb"/><path d="M8.6 330h6.2M10.6 330v3.6M12.6 330v3.6M8.6 331.8h6.2" stroke="#4d5563" stroke-width=".45"/><rect x="15" y="335.4" width="7" height="6.400" fill="#7fcbfb"/><rect x="15.4" y="335.8" width="6.200" height="5.600" fill="none" stroke="#f4f5f6" stroke-width=".8" stroke-dasharray="1.200 .9"/><rect x="15" y="343.4" width="7" height="6.400" fill="#7fcbfb"/><rect x="15.4" y="343.8" width="6.200" height="5.600" fill="none" stroke="#f4f5f6" stroke-width=".8" stroke-dasharray="1.200 .9"/><rect x="15" y="351.4" width="7" height="6.400" fill="#7fcbfb"/><rect x="15.4" y="351.8" width="6.200" height="5.600" fill="none" stroke="#f4f5f6" stroke-width=".8" stroke-dasharray="1.200 .9"/><rect x="15" y="359.4" width="7" height="6.400" fill="#2d3542"/><rect x="15.4" y="359.8" width="6.200" height="5.600" fill="none" stroke="#f4f5f6" stroke-width=".8" stroke-dasharray="1.200 .9"/><rect x="15" y="367.4" width="7" height="6.400" fill="#2d3542"/><rect x="15.4" y="367.8" width="6.200" height="5.600" fill="none" stroke="#f4f5f6" stroke-width=".8" stroke-dasharray="1.200 .9"/><path d="M2.2 379h3.4" stroke="#f1f2f4" stroke-width=".8"/><path d="M8.8 376h3.4l1.4 1.4v4.4h-4.8z" fill="#e6e8eb"/><path d="M11.6 377.4l3 3.4v1.2h-3z" fill="#b9bec6"/><path d="M9 387h3.2M10.6 385.4v3.2" stroke="#f1f2f4" stroke-width=".75"/><path d="M9 395h3.2M10.6 393.4v3.2" stroke="#f1f2f4" stroke-width=".75"/><path d="M9 403h3.2M10.6 401.4v3.2" stroke="#f1f2f4" stroke-width=".75"/><path d="M9 411h3.2M10.6 409.4v3.2" stroke="#f1f2f4" stroke-width=".75"/><path d="M2.4 419h3.2M4.0 417.4v3.2" stroke="#f1f2f4" stroke-width=".75"/><rect x="8.6" y="416" width="6" height="6" fill="#e6e8eb"/><rect x="8.6" y="419" width="2.8" height="3" fill="#4d5563"/><rect x="12" y="416" width="2.6" height="2.4" fill="#8c94a1"/><path d="M2.4 427h3.2M4.0 425.4v3.2" stroke="#f1f2f4" stroke-width=".75"/><path d="M8.4 423.6v6.8M14.6 423.6v6.8" stroke="#e6e8eb" stroke-width=".6"/><rect x="9.8" y="424.8" width="3.4" height="4.4" fill="#e6e8eb"/><path d="M10.8 425.8l1.6 1.2-1.6 1.2z" fill="#4d5563"/><g transform="rotate(-35 12 435)" fill="none" stroke="#d18a45" stroke-width=".9"><rect x="8.6" y="433.8" width="3.8" height="2.4" rx="1.2"/><rect x="11.4" y="433.8" width="3.8" height="2.4" rx="1.2"/></g><path d="M5.6 111v4M10.6 119v52M10.6 183v44M10.6 239v28M10.6 279v36" stroke="#596273" stroke-width=".4"/></svg>
<div class="b" style="left:145.80px;top:68.60px;width:717.00px;height:9.10px;background:#464f63;"></div>
<div class="b" style="left:145.80px;top:68.60px;width:717.00px;height:0.90px;background:#4a546a;"></div>
<div class="b" style="left:145.80px;top:77.70px;width:717.00px;height:489.30px;background:#222933;"></div>
<span class="t " style="left:156.80px;top:72px;font-size:4.7px;line-height:5px;color:#dfe2e6;letter-spacing:-0.075px;">RealisticVisualStyle</span>
<span class="t " style="left:216.90px;top:72px;font-size:4.7px;line-height:5px;color:#dfe2e6;letter-spacing:-0.183px;">{3D}</span>
<span class="t " style="left:268.20px;top:72px;font-size:4.7px;line-height:5px;color:#dfe2e6;letter-spacing:0.018px;">Bay 1 Demolition</span>
<span class="t " style="left:324.80px;top:72px;font-size:4.7px;line-height:5px;color:#dfe2e6;">Bay 1 Demolition</span>
<span class="t " style="left:381.70px;top:72px;font-size:4.7px;line-height:5px;color:#dfe2e6;letter-spacing:-0.028px;">Bay 2 Future Project</span>
<span class="t " style="left:444.80px;top:72px;font-size:4.7px;line-height:5px;color:#dfe2e6;">A107 - Removals for Future Project</span>
<div class="b" style="left:528.20px;top:69.70px;width:74.80px;height:8.10px;background:#222933;"></div>
<span class="t " style="left:539.00px;top:72px;font-size:4.7px;line-height:5px;color:#ffffff;font-weight:bold;">A108 - Future Expansion</span>
<div class="b" style="left:855.60px;top:77.80px;width:7.20px;height:489.20px;background:#2f3744;"></div>
<div class="b" style="left:145.80px;top:558.80px;width:710.20px;height:8.20px;background:#2f3744;"></div>
<div class="b" style="left:146.60px;top:558.80px;width:29.60px;height:6.50px;background:#3a4352;"></div>
<div class="b" style="left:176.20px;top:558.80px;width:7.70px;height:6.50px;background:#353d4b;"></div>
<div class="b" style="left:145.80px;top:565.30px;width:717.00px;height:1.70px;background:#2a313d;"></div>
<div class="b" style="left:145.8px;top:77.8px;width:709.8px;height:480.9px;"><svg class="b" style="left:-145.80px;top:-77.80px;" width="1024" height="576" viewBox="0 0 1024 576"><rect x="299.5" y="100.5" width="566.5" height="436.2" fill="none" stroke="#70767f" stroke-width="1"/><rect x="318.5" y="110.1" width="535.9" height="417.2" fill="none" stroke="#70767f" stroke-width="1"/><path d="M555.3 160.1h.4M612.3 150.7h.4M592.2 185.9h.4M509.1 202.9h.4M505.5 194.0h.4M511.2 152.9h.4M572.9 241.2h.4M520.5 168.8h.4M608.2 255.7h.4M599.4 189.6h.4M668.9 147.6h.4M648.4 176.8h.4M524.1 156.1h.4M552.7 239.9h.4M530.4 211.8h.4M610.2 186.7h.4M594.3 149.5h.4M509.4 166.7h.4M617.4 193.3h.4M553.7 212.3h.4M577.9 178.0h.4M637.2 225.9h.4M541.5 210.9h.4M590.4 247.0h.4M625.9 176.6h.4M669.6 156.2h.4M571.8 232.9h.4M525.4 200.7h.4M505.8 222.2h.4M632.0 210.8h.4M651.3 179.6h.4M620.0 213.3h.4M599.9 196.7h.4M645.2 255.4h.4M581.5 221.7h.4M509.6 226.2h.4M611.6 261.2h.4M642.0 176.2h.4M566.1 222.2h.4M502.9 197.4h.4M528.2 156.1h.4M509.3 234.2h.4M521.5 171.7h.4M567.0 246.6h.4M513.0 195.9h.4M594.6 248.0h.4M641.6 245.7h.4M547.4 191.8h.4M561.4 248.1h.4M665.6 160.1h.4M529.7 169.8h.4M539.6 200.2h.4M601.5 173.5h.4M499.7 192.3h.4M563.3 210.0h.4M664.8 224.9h.4M588.7 216.1h.4M616.7 148.5h.4M655.5 235.6h.4M651.2 237.7h.4M567.3 189.9h.4M517.0 218.1h.4M509.8 150.1h.4M535.3 161.5h.4M558.2 148.3h.4M499.0 160.2h.4M516.7 185.6h.4M503.4 246.9h.4M605.8 159.8h.4M542.9 183.7h.4M562.4 156.7h.4M646.7 261.2h.4M580.1 200.1h.4M513.9 154.3h.4M558.6 173.8h.4M643.2 161.4h.4M503.0 256.1h.4M590.9 159.6h.4M593.5 145.2h.4M590.9 259.4h.4M649.2 225.5h.4M544.4 186.0h.4M528.1 234.6h.4M591.7 235.5h.4M556.4 168.8h.4M640.2 260.2h.4M647.4 238.7h.4M641.4 230.8h.4M538.5 204.1h.4M560.9 145.5h.4M503.9 175.5h.4M544.1 225.1h.4M665.4 195.7h.4M662.0 260.6h.4M665.2 185.8h.4M537.4 169.2h.4M533.2 166.5h.4M607.6 250.0h.4M645.2 199.5h.4M612.6 238.0h.4M513.8 221.3h.4M657.3 235.9h.4M629.5 199.4h.4M530.1 236.7h.4M556.9 238.1h.4M668.1 189.5h.4M568.8 255.6h.4M625.1 162.4h.4M521.1 160.1h.4M656.4 238.8h.4M524.4 241.2h.4M669.6 220.9h.4M560.0 207.8h.4M521.8 143.7h.4M667.9 220.0h.4M590.6 254.0h.4M574.5 246.6h.4M642.8 167.3h.4M542.8 177.2h.4M540.9 212.4h.4M544.1 192.3h.4M521.8 251.2h.4M560.6 197.0h.4M600.5 250.5h.4M572.2 252.1h.4M586.3 205.8h.4M590.1 144.2h.4M575.6 164.0h.4M499.7 237.9h.4M529.0 198.8h.4M625.2 208.8h.4M555.7 204.2h.4M595.6 236.1h.4M517.5 209.2h.4M542.2 175.2h.4M633.4 202.9h.4M596.7 233.2h.4M657.8 195.2h.4M605.6 202.7h.4M588.1 225.1h.4M577.7 206.0h.4M582.2 255.0h.4M620.7 247.2h.4M662.9 173.2h.4M596.4 255.2h.4M645.2 158.5h.4M520.2 195.1h.4M511.6 170.9h.4M511.7 222.3h.4M635.4 249.6h.4M525.9 227.9h.4M613.9 159.2h.4M652.6 258.1h.4M537.2 256.3h.4M568.3 200.5h.4M671.2 241.9h.4M527.1 193.8h.4M588.7 182.7h.4M533.1 180.2h.4M624.7 144.3h.4M595.4 194.9h.4M502.1 181.8h.4M607.6 203.5h.4M510.2 260.2h.4M636.2 258.6h.4M517.2 173.9h.4M505.9 235.5h.4M546.1 157.5h.4M572.5 251.4h.4M641.5 173.0h.4M525.0 252.3h.4M598.3 226.1h.4M514.6 148.9h.4M618.7 193.0h.4M511.6 254.6h.4M609.4 238.2h.4M513.6 244.7h.4M510.6 245.5h.4M578.0 182.7h.4M595.2 253.2h.4M545.6 157.5h.4M590.7 170.6h.4M518.0 161.4h.4M507.8 166.2h.4M553.3 178.6h.4M631.2 176.8h.4M586.0 163.3h.4M559.4 144.2h.4M542.6 143.8h.4M626.6 208.1h.4M532.0 199.0h.4M661.6 154.8h.4M641.5 193.9h.4M585.1 242.2h.4M567.4 202.8h.4M618.7 259.9h.4M558.6 241.9h.4M622.0 218.3h.4M569.4 183.7h.4M508.5 157.6h.4M511.3 230.9h.4M543.5 161.6h.4M513.7 243.0h.4M650.5 222.5h.4M548.1 171.1h.4M550.0 197.1h.4M526.4 195.5h.4M544.8 257.4h.4M668.2 207.6h.4M541.5 257.9h.4M552.9 184.8h.4M499.2 187.8h.4M581.6 202.3h.4M534.0 202.6h.4M499.9 173.7h.4M514.6 189.9h.4M506.3 144.7h.4M551.9 169.9h.4M600.9 205.5h.4M629.6 220.9h.4M623.6 247.5h.4M566.8 181.1h.4M670.3 159.9h.4M625.0 219.2h.4M506.6 242.2h.4M654.2 217.3h.4M626.7 239.5h.4M523.2 204.9h.4M586.8 242.2h.4M639.0 241.2h.4M600.6 249.1h.4M617.8 225.2h.4M539.0 145.7h.4M522.2 185.3h.4M517.3 242.3h.4M596.2 217.3h.4M608.0 223.7h.4M584.1 142.4h.4M637.8 231.8h.4M586.5 206.2h.4M613.7 149.9h.4M627.2 172.3h.4M512.0 173.9h.4M625.9 166.6h.4M627.7 259.1h.4M584.9 187.9h.4M582.3 224.0h.4M632.5 216.0h.4M610.8 151.3h.4M524.7 172.5h.4M628.3 178.5h.4M597.8 143.5h.4M509.6 174.3h.4M615.9 225.1h.4M616.6 176.9h.4M588.9 197.8h.4M580.1 156.2h.4M654.5 165.9h.4M669.2 254.4h.4M502.0 197.1h.4M641.7 258.2h.4M577.2 174.2h.4M535.5 255.5h.4M535.7 211.8h.4M523.7 204.9h.4M664.8 157.9h.4M641.7 203.0h.4M653.3 226.4h.4M539.3 249.7h.4M583.6 145.0h.4M499.6 201.0h.4M577.4 178.2h.4M523.5 183.3h.4M554.0 242.8h.4M499.3 232.1h.4M645.0 156.4h.4M660.2 227.6h.4M655.9 176.8h.4M563.8 189.1h.4M672.8 212.7h.4M561.8 193.4h.4M546.9 147.8h.4M516.7 242.2h.4M548.7 254.3h.4M542.4 173.9h.4M587.9 164.8h.4M564.0 256.7h.4M652.9 239.4h.4M608.8 251.6h.4M662.7 207.9h.4M624.2 147.9h.4M626.4 196.1h.4M630.0 219.3h.4M548.8 147.9h.4M660.3 157.3h.4M581.2 183.2h.4M550.8 230.7h.4M668.9 173.2h.4M613.1 178.1h.4M596.0 189.3h.4M528.1 161.4h.4M535.2 250.7h.4M585.5 168.4h.4M656.7 261.6h.4M577.3 158.8h.4M532.5 152.9h.4M558.5 152.9h.4M540.6 173.0h.4M598.1 248.5h.4M629.4 191.5h.4M571.0 204.9h.4M564.6 182.6h.4M509.8 175.3h.4M667.4 157.1h.4M586.6 217.6h.4M649.1 167.9h.4M546.2 171.8h.4M568.6 195.5h.4M665.0 243.8h.4M650.9 144.6h.4M504.6 227.1h.4M654.9 198.8h.4M601.2 142.0h.4M567.1 253.2h.4M642.7 244.7h.4M668.2 171.8h.4M518.0 160.5h.4M589.9 223.8h.4M662.8 228.6h.4M611.6 233.8h.4M578.6 208.2h.4M505.9 235.9h.4M539.5 252.4h.4M611.3 178.5h.4M521.3 172.2h.4M609.7 225.8h.4M518.5 150.4h.4M590.3 211.9h.4M566.5 168.8h.4M603.6 143.3h.4M551.5 197.3h.4M665.9 219.3h.4M652.8 199.0h.4M539.8 171.6h.4M666.1 226.6h.4M552.5 144.6h.4M585.7 222.9h.4M572.1 172.9h.4M615.1 253.0h.4M538.5 146.1h.4M557.8 192.5h.4M617.8 165.8h.4M637.7 230.7h.4M586.8 166.6h.4M667.8 179.4h.4M641.7 169.7h.4M537.5 233.3h.4M550.3 256.2h.4M585.3 164.5h.4M537.9 192.0h.4M614.8 255.9h.4M524.5 189.2h.4M536.1 258.9h.4M523.7 148.2h.4M509.5 189.2h.4M655.3 248.0h.4M626.5 261.7h.4M661.1 181.5h.4M531.3 254.3h.4M628.9 145.8h.4M614.6 187.4h.4M564.1 181.8h.4M528.5 142.3h.4M547.7 184.2h.4M665.3 156.8h.4M666.8 166.9h.4M561.1 240.6h.4M642.0 193.9h.4M507.6 198.8h.4M563.9 252.3h.4M532.6 185.7h.4M655.1 145.6h.4M570.5 239.4h.4M632.4 146.9h.4M505.1 149.5h.4M659.1 172.8h.4M629.0 249.8h.4M558.0 174.7h.4M665.6 216.0h.4M544.6 228.0h.4M554.1 175.1h.4M499.7 232.7h.4M658.5 218.1h.4M663.1 144.9h.4M539.7 199.0h.4M665.5 256.5h.4M566.3 172.1h.4M573.8 201.2h.4M660.5 164.0h.4M638.6 230.6h.4M642.2 234.7h.4M604.7 181.3h.4M554.6 185.4h.4M635.1 151.5h.4M533.3 232.3h.4M542.0 149.8h.4M504.9 208.3h.4M555.7 259.6h.4M652.7 260.5h.4M545.1 152.1h.4M515.8 201.8h.4M622.5 195.6h.4M539.8 192.0h.4M606.9 222.9h.4M629.1 243.6h.4M614.6 156.5h.4M645.3 177.3h.4M597.6 186.8h.4M627.4 165.9h.4M542.1 171.4h.4M525.7 248.1h.4M599.6 181.2h.4M567.9 261.1h.4M587.3 169.8h.4M639.7 220.4h.4M671.4 154.3h.4M581.6 240.3h.4M645.3 251.7h.4M506.0 177.2h.4M519.7 164.7h.4M668.3 212.0h.4M660.9 186.7h.4M649.7 195.9h.4M544.2 235.3h.4M663.6 154.7h.4M602.7 216.4h.4M536.9 186.2h.4M523.6 166.5h.4M543.4 213.9h.4M612.4 166.4h.4M501.0 181.3h.4M617.0 164.2h.4M553.3 166.4h.4M637.4 207.8h.4M510.0 154.2h.4M567.8 208.0h.4M610.2 152.9h.4M527.5 225.4h.4M570.3 176.0h.4M552.5 256.4h.4M553.4 210.0h.4M561.1 192.0h.4M649.4 261.6h.4M562.3 165.7h.4M625.7 166.4h.4M500.0 250.2h.4M572.7 240.4h.4M569.7 247.9h.4M579.2 161.5h.4M501.6 208.2h.4M610.5 251.2h.4M514.5 216.7h.4M563.5 202.5h.4M524.4 176.0h.4M589.7 253.1h.4M517.9 200.9h.4M639.0 258.0h.4M533.3 157.2h.4M663.1 259.1h.4M583.0 148.4h.4M660.2 188.5h.4M656.3 216.4h.4M642.5 161.2h.4M635.7 168.6h.4M569.4 243.6h.4M643.3 164.0h.4M537.0 190.0h.4M589.1 188.0h.4M520.4 171.6h.4M625.1 249.7h.4M506.2 209.5h.4M630.8 146.6h.4M644.8 156.1h.4M603.3 208.0h.4M608.1 178.7h.4M572.1 211.9h.4M573.1 221.1h.4M576.7 194.6h.4M503.1 216.3h.4M584.2 170.2h.4M631.9 235.6h.4M578.7 163.5h.4M581.3 154.8h.4M521.4 193.7h.4M515.0 195.0h.4M587.8 146.9h.4M609.7 151.9h.4M626.6 235.3h.4M588.0 148.5h.4M586.7 187.3h.4M664.5 158.3h.4M648.1 261.5h.4M626.4 239.8h.4M532.7 259.8h.4M584.6 256.8h.4M658.4 161.8h.4M636.2 253.7h.4M510.4 184.1h.4M630.6 161.1h.4M655.0 175.0h.4M640.9 159.2h.4M586.4 252.4h.4M535.2 173.5h.4M587.0 180.3h.4M505.4 163.9h.4M527.1 254.4h.4M617.3 249.4h.4M528.4 236.2h.4M519.0 205.7h.4M609.7 185.2h.4M650.9 208.6h.4M599.9 247.9h.4M517.2 261.2h.4M608.6 189.3h.4M637.8 173.8h.4M671.3 211.3h.4M561.7 233.8h.4M576.0 163.2h.4M628.4 147.8h.4M641.6 172.4h.4M610.2 260.1h.4M600.9 221.6h.4M553.4 142.2h.4M504.9 159.9h.4M606.2 193.9h.4M588.2 249.5h.4M522.0 169.3h.4M612.6 144.7h.4M499.5 184.6h.4M517.5 184.9h.4M538.0 212.0h.4M601.5 166.5h.4M607.6 199.0h.4M522.4 254.4h.4M541.4 159.9h.4M515.7 218.6h.4M650.6 235.9h.4M568.9 173.7h.4M501.0 219.4h.4M596.8 184.0h.4M611.3 195.3h.4M662.1 230.0h.4M542.2 250.4h.4M506.7 205.8h.4M569.6 170.5h.4M509.2 235.5h.4M501.1 208.1h.4M662.7 159.1h.4M533.7 215.0h.4M587.2 219.0h.4M640.5 163.0h.4M552.8 178.0h.4M507.4 248.7h.4M635.2 227.8h.4M500.1 243.3h.4M628.7 197.8h.4M628.1 196.3h.4M538.3 154.6h.4M539.4 146.7h.4M557.4 232.0h.4M619.9 243.4h.4M622.8 173.9h.4M595.4 194.3h.4M636.2 204.8h.4M545.2 219.0h.4M666.9 168.0h.4M652.1 143.8h.4M544.3 170.3h.4M628.4 255.4h.4M628.8 181.2h.4M652.1 181.4h.4M540.6 250.9h.4M608.7 225.1h.4M614.8 259.5h.4M580.7 242.8h.4M620.4 244.9h.4M575.1 229.0h.4M598.2 178.9h.4M535.9 216.7h.4M512.5 251.3h.4M524.2 145.2h.4M517.6 253.5h.4M559.0 159.0h.4M504.0 147.0h.4M619.5 218.1h.4M620.3 230.4h.4M510.4 212.9h.4M562.2 240.1h.4M641.6 249.0h.4M510.5 246.1h.4M658.1 255.3h.4M517.6 166.7h.4M518.5 146.1h.4M646.5 239.4h.4M609.3 241.0h.4M608.9 176.5h.4M516.4 153.7h.4M630.8 166.6h.4M554.5 192.9h.4M502.6 172.8h.4M548.2 227.9h.4M563.0 180.5h.4M666.7 202.4h.4M647.1 216.2h.4M504.4 191.6h.4M574.9 234.8h.4M559.3 226.6h.4M592.6 168.0h.4M649.0 152.9h.4M641.6 162.4h.4M499.2 166.2h.4M631.6 259.3h.4M499.8 200.9h.4M584.5 237.6h.4M531.1 201.3h.4M559.4 241.8h.4M544.3 255.3h.4M548.4 167.8h.4M620.7 201.8h.4M518.1 218.4h.4M513.1 236.5h.4M620.3 236.4h.4M608.3 184.7h.4M568.8 189.4h.4M653.9 152.3h.4M653.6 145.0h.4M534.9 173.6h.4M655.8 202.1h.4M565.0 248.1h.4M539.6 197.3h.4M591.5 232.5h.4M630.0 219.6h.4M559.6 181.2h.4M526.0 243.2h.4M614.2 231.0h.4M528.5 194.7h.4M633.6 211.5h.4M520.9 197.4h.4M653.0 170.6h.4M532.3 178.2h.4M621.4 243.2h.4M525.9 160.7h.4M542.1 181.2h.4M589.9 161.3h.4M556.1 164.7h.4M668.7 229.4h.4M516.7 257.5h.4M516.7 188.1h.4M670.2 237.4h.4M626.6 194.2h.4M533.1 218.6h.4M517.6 166.8h.4M566.6 146.1h.4M568.4 236.9h.4M619.7 202.1h.4M609.0 197.6h.4M523.7 214.4h.4M569.4 230.9h.4M657.0 193.6h.4M598.9 231.9h.4M572.3 169.4h.4M624.7 247.6h.4M633.7 226.0h.4M647.3 223.6h.4M610.6 196.5h.4M553.5 217.4h.4M516.0 192.3h.4M635.1 227.6h.4M608.6 172.0h.4M572.7 196.6h.4M607.2 191.1h.4M616.5 253.6h.4M530.9 220.5h.4M634.4 188.6h.4M584.2 259.0h.4M505.6 207.2h.4M527.0 235.8h.4M662.7 204.3h.4M516.6 210.9h.4M593.1 228.1h.4M588.1 218.7h.4M643.2 204.6h.4M570.4 255.8h.4M535.6 224.1h.4M567.3 233.5h.4M520.3 260.1h.4M560.9 148.8h.4M546.7 190.0h.4M501.3 192.2h.4M572.2 225.8h.4M560.3 173.8h.4M538.1 231.0h.4M662.5 205.2h.4M537.1 238.2h.4M567.2 167.4h.4M521.5 235.2h.4M639.9 218.1h.4M580.6 209.4h.4M538.3 257.7h.4M560.4 218.7h.4M641.5 239.9h.4M580.4 177.3h.4M594.4 157.0h.4M644.1 184.6h.4M647.0 174.1h.4M564.4 172.4h.4M573.1 164.3h.4M499.5 228.6h.4M547.9 171.4h.4M551.5 199.5h.4M573.6 218.5h.4M613.7 185.5h.4M660.6 244.5h.4M508.9 241.3h.4M656.6 236.1h.4M523.4 241.8h.4M609.2 143.8h.4M501.0 256.2h.4M613.1 172.0h.4M516.7 159.1h.4M539.7 235.2h.4M559.3 160.3h.4M656.3 237.0h.4M528.2 248.9h.4M604.9 235.8h.4M615.3 249.3h.4M636.1 242.7h.4M533.3 225.1h.4M591.4 231.0h.4M575.3 247.9h.4M595.6 173.7h.4M539.7 158.7h.4M584.8 149.0h.4M580.3 159.3h.4M584.5 201.8h.4M592.9 245.5h.4M500.1 242.9h.4M580.4 209.5h.4M614.8 242.9h.4M564.2 192.3h.4M666.1 151.0h.4M609.8 218.3h.4M504.0 215.2h.4M617.8 253.8h.4M556.5 259.8h.4M587.8 200.2h.4M655.2 146.1h.4M624.0 217.0h.4M557.9 245.4h.4M562.7 198.9h.4M590.4 234.5h.4M535.7 194.2h.4M572.5 208.5h.4M642.9 177.1h.4M643.0 190.4h.4M586.7 174.6h.4M587.1 259.0h.4M612.9 237.0h.4M556.6 180.1h.4M551.1 212.4h.4M609.5 236.1h.4M506.0 228.7h.4M653.1 207.4h.4M507.6 178.0h.4M500.1 164.8h.4M659.3 215.0h.4M613.5 236.7h.4M657.3 215.4h.4M606.3 217.2h.4M620.2 213.6h.4M617.5 167.5h.4M615.1 196.9h.4M631.7 154.2h.4M530.5 146.4h.4M633.8 251.7h.4M613.1 186.3h.4M642.1 236.4h.4M596.8 173.0h.4M551.6 192.6h.4M554.4 193.7h.4M610.7 254.1h.4M508.5 210.1h.4M505.9 156.3h.4M640.0 211.0h.4M658.8 195.6h.4M501.5 188.5h.4M602.0 254.5h.4M669.7 199.1h.4M570.8 154.2h.4M611.1 167.5h.4M525.4 143.9h.4M499.8 224.1h.4M520.2 258.0h.4M514.3 246.3h.4M521.4 144.1h.4M624.2 171.1h.4M626.6 164.5h.4M507.7 234.9h.4M623.2 244.7h.4M626.0 152.1h.4M608.4 227.1h.4M579.1 253.9h.4M543.2 257.7h.4M623.8 143.4h.4M501.6 220.1h.4M641.2 151.6h.4M553.1 229.5h.4M527.9 245.3h.4M583.6 149.2h.4M563.0 211.0h.4M575.3 223.2h.4M524.2 237.7h.4M562.2 219.4h.4M608.6 192.2h.4M566.1 236.3h.4M663.4 236.2h.4M597.6 177.1h.4M509.6 258.9h.4M621.4 241.3h.4M556.8 214.7h.4M669.1 241.8h.4M603.6 179.0h.4M573.6 248.6h.4M564.5 224.2h.4M603.7 249.5h.4M639.5 176.0h.4M499.3 173.6h.4M572.5 212.4h.4M641.0 248.5h.4M506.4 242.0h.4M640.2 246.1h.4M598.5 174.9h.4M647.1 238.8h.4M618.1 251.6h.4M559.4 152.2h.4M595.3 237.7h.4M533.9 232.0h.4M661.1 170.1h.4M604.6 223.3h.4M580.0 166.8h.4M543.3 232.1h.4M636.7 197.2h.4M514.3 238.8h.4M633.4 169.9h.4M599.8 249.6h.4M653.0 204.6h.4M581.9 212.7h.4M531.9 165.1h.4M530.4 226.1h.4M562.1 209.7h.4M569.0 204.1h.4M524.9 147.4h.4M672.5 186.9h.4M517.5 217.9h.4M636.0 160.7h.4M602.9 183.4h.4M589.4 144.5h.4M504.8 260.8h.4M649.7 200.4h.4M597.7 173.4h.4M634.6 193.1h.4M663.7 234.1h.4M641.5 257.6h.4M543.2 146.5h.4M534.0 163.7h.4M513.6 148.1h.4M596.0 246.5h.4M578.7 255.7h.4M657.3 149.7h.4M603.1 189.7h.4M519.9 257.1h.4M543.8 209.7h.4M610.5 256.8h.4M615.5 189.2h.4M577.0 161.2h.4M667.0 261.0h.4M537.6 146.6h.4M543.5 184.2h.4M656.1 250.5h.4M644.7 147.6h.4M635.8 227.2h.4M611.5 260.3h.4M508.7 159.4h.4M630.4 254.7h.4M616.8 177.9h.4M601.9 232.9h.4M517.3 180.9h.4M543.7 156.9h.4M582.7 162.2h.4M540.5 159.2h.4M616.9 143.5h.4M623.8 165.4h.4M505.3 253.3h.4M537.4 254.1h.4M649.8 248.6h.4M523.3 195.7h.4M515.9 253.5h.4M645.6 217.4h.4M577.7 182.8h.4M642.2 199.3h.4M608.3 159.1h.4M537.6 148.8h.4M623.2 208.4h.4M524.2 246.5h.4M545.4 191.4h.4M526.1 174.5h.4M645.1 182.1h.4M528.2 200.9h.4M554.3 250.4h.4M518.9 259.4h.4M508.9 249.4h.4M615.3 167.3h.4M582.1 176.3h.4M543.9 166.2h.4M562.4 260.9h.4M672.7 253.0h.4M516.0 176.7h.4M654.9 148.9h.4M625.4 177.2h.4M669.3 143.9h.4M639.4 182.9h.4M523.4 142.2h.4M643.8 205.2h.4M531.3 194.2h.4M657.7 168.2h.4M598.4 158.6h.4M530.3 234.5h.4M622.8 165.6h.4M512.8 152.5h.4M604.9 201.5h.4M546.7 166.7h.4M605.6 226.9h.4M640.2 212.0h.4M534.2 149.9h.4M626.5 191.0h.4M624.6 148.6h.4M640.1 182.2h.4M645.5 245.7h.4M584.8 143.9h.4M657.4 199.2h.4M650.7 174.0h.4M531.4 241.8h.4M562.9 161.6h.4M563.6 213.4h.4M499.8 204.4h.4M576.6 203.9h.4M520.0 227.8h.4M641.1 245.9h.4M554.9 227.3h.4M565.4 232.2h.4M509.7 246.7h.4M665.0 201.4h.4M588.3 205.7h.4M592.5 144.5h.4M667.3 168.8h.4M530.7 154.3h.4M542.6 240.1h.4M504.2 153.6h.4M620.6 165.4h.4M502.1 213.9h.4M599.3 204.7h.4M621.3 154.3h.4M650.3 228.1h.4M506.9 156.8h.4M584.9 202.1h.4M547.7 156.6h.4M569.6 158.4h.4M602.0 245.3h.4M524.6 210.7h.4M628.9 161.7h.4M642.7 254.5h.4M566.6 192.5h.4M645.1 205.1h.4M567.8 255.0h.4M634.2 182.6h.4M540.8 182.2h.4M574.8 259.7h.4M639.0 251.5h.4M640.8 243.7h.4M508.3 204.1h.4M665.7 254.1h.4M542.4 192.7h.4M609.1 185.7h.4M591.4 150.3h.4M574.3 202.6h.4M502.6 158.7h.4M667.7 235.2h.4M662.0 218.0h.4M639.8 248.1h.4M652.9 146.1h.4M610.6 173.9h.4M617.0 174.8h.4M593.4 252.9h.4M607.1 172.1h.4M589.5 194.0h.4M664.5 176.5h.4M552.1 219.7h.4M519.9 213.3h.4M665.4 203.7h.4M545.7 198.0h.4M591.9 159.8h.4M520.6 157.8h.4M550.1 190.8h.4M549.2 171.2h.4M514.3 207.6h.4M645.1 215.2h.4M598.2 220.0h.4M534.0 227.2h.4M579.2 207.8h.4M605.6 198.3h.4M553.0 171.1h.4M537.6 203.5h.4M565.7 212.3h.4M501.1 184.3h.4M649.0 170.6h.4M595.9 201.0h.4M548.6 260.5h.4M550.4 234.7h.4M526.6 150.0h.4M650.6 194.8h.4M509.8 188.5h.4M575.5 230.2h.4M518.0 169.0h.4M665.9 230.6h.4M525.9 182.4h.4M560.3 223.0h.4M606.2 244.0h.4M641.9 204.1h.4M627.5 231.2h.4M631.2 199.0h.4M635.6 227.0h.4M658.2 157.3h.4M650.5 142.5h.4M632.2 212.3h.4M585.6 257.5h.4M598.5 192.1h.4M635.4 246.7h.4M604.7 187.5h.4M577.7 196.9h.4M624.8 177.2h.4M567.0 208.6h.4M565.9 180.6h.4M636.0 243.9h.4M585.9 195.3h.4M531.1 178.5h.4M524.2 211.1h.4M600.2 152.6h.4M659.1 180.9h.4M645.7 242.6h.4M665.8 166.5h.4M573.2 251.3h.4M500.9 147.7h.4M597.3 201.7h.4M659.1 234.8h.4M592.7 261.8h.4M589.0 204.1h.4M618.2 188.7h.4M561.2 213.4h.4M560.1 255.7h.4M616.7 205.0h.4M516.2 186.9h.4M568.8 209.4h.4M598.9 247.6h.4M666.8 200.4h.4M575.6 217.0h.4M672.3 183.2h.4M591.2 239.9h.4M528.7 180.2h.4M669.2 241.1h.4M588.2 155.3h.4M654.6 224.8h.4M641.8 260.8h.4M653.5 192.5h.4M526.2 176.8h.4M588.0 202.6h.4M531.7 163.9h.4M608.6 214.4h.4M560.5 261.2h.4M609.8 147.1h.4M570.6 236.5h.4M552.4 224.9h.4M499.7 178.5h.4M645.5 212.3h.4M615.3 165.6h.4M585.6 208.4h.4M545.3 219.6h.4M591.5 261.7h.4M599.0 191.3h.4M520.1 160.8h.4M631.2 154.8h.4M516.4 162.5h.4M589.9 240.8h.4M605.7 238.8h.4M509.8 143.5h.4M633.1 180.7h.4M623.5 184.5h.4M528.5 174.0h.4M516.3 250.5h.4M600.3 183.9h.4M577.3 188.3h.4M508.5 248.9h.4M600.4 257.2h.4M575.5 216.4h.4M542.4 147.3h.4M661.0 244.6h.4M553.8 249.9h.4M641.0 178.4h.4M603.8 257.2h.4M585.2 256.0h.4M541.3 188.8h.4M624.0 168.6h.4M552.8 247.0h.4M583.3 237.1h.4M541.4 162.8h.4M561.4 164.4h.4M668.0 176.9h.4M596.7 155.8h.4M591.9 188.3h.4M569.2 149.9h.4M520.5 241.1h.4M560.1 171.4h.4M532.3 176.0h.4M540.3 146.2h.4M614.6 183.0h.4M526.1 226.7h.4M515.1 174.4h.4M644.3 157.3h.4M576.1 242.4h.4M639.1 161.1h.4M560.4 228.7h.4M564.6 257.0h.4M535.2 256.1h.4M586.8 169.3h.4M577.8 157.7h.4M621.9 173.3h.4M655.5 212.5h.4M563.0 171.6h.4M604.8 167.5h.4M650.8 156.7h.4M588.3 207.1h.4M546.1 234.6h.4M566.0 220.9h.4M597.8 179.3h.4M566.8 152.3h.4M529.8 244.1h.4M554.9 221.5h.4M518.0 209.4h.4M561.9 202.0h.4M550.7 149.9h.4M553.2 169.2h.4M520.9 228.0h.4M548.1 190.4h.4M657.2 235.0h.4M652.6 245.4h.4M522.0 175.2h.4M504.1 223.6h.4M614.5 184.2h.4M570.8 221.1h.4M620.7 171.8h.4M646.3 184.3h.4M608.4 163.8h.4M519.1 251.5h.4M626.7 227.5h.4M506.0 146.8h.4M527.2 165.8h.4M551.7 187.7h.4M505.8 179.3h.4M610.1 163.6h.4M645.1 210.4h.4M623.7 172.6h.4M574.7 224.1h.4M559.7 142.1h.4M644.2 235.2h.4M548.8 147.2h.4M647.6 214.9h.4M507.2 171.3h.4M518.3 237.0h.4M535.6 251.7h.4M629.4 152.3h.4M619.9 189.2h.4M629.1 241.4h.4M547.9 152.8h.4M663.7 192.9h.4M660.9 225.0h.4M627.5 241.6h.4M608.3 196.3h.4M508.4 225.8h.4M573.5 203.4h.4M660.5 157.3h.4M631.6 147.2h.4M621.3 238.7h.4M544.4 207.6h.4M667.7 218.5h.4M593.6 172.0h.4M509.3 184.9h.4M570.6 166.2h.4M553.0 158.4h.4M622.0 222.4h.4M540.4 171.0h.4M588.7 195.4h.4M661.8 184.2h.4M551.1 248.2h.4M523.7 209.6h.4M557.0 239.8h.4M594.4 233.3h.4M528.4 222.0h.4M603.2 197.3h.4M632.3 241.7h.4M518.9 176.7h.4M561.7 166.8h.4M509.5 175.7h.4M533.3 226.2h.4M577.0 155.6h.4M555.5 198.2h.4M562.2 162.2h.4M511.5 143.3h.4M671.6 232.1h.4M513.6 228.1h.4M669.6 209.6h.4M517.9 200.7h.4M574.6 164.8h.4M593.5 143.0h.4M659.0 219.3h.4M608.2 254.2h.4M612.6 172.2h.4M541.8 158.6h.4M503.8 234.9h.4M645.1 177.6h.4M531.3 218.6h.4M646.2 253.2h.4M528.3 236.2h.4M643.5 231.1h.4M555.8 164.1h.4M642.6 180.4h.4M563.1 208.1h.4M563.3 241.8h.4M540.7 147.0h.4M597.6 217.4h.4M641.6 226.7h.4M656.5 255.4h.4M585.0 201.9h.4M526.4 177.9h.4M600.1 151.6h.4M618.7 161.6h.4M576.1 258.4h.4M514.6 146.8h.4M575.5 164.9h.4M624.8 142.3h.4M645.3 244.6h.4M635.9 193.1h.4M548.3 221.4h.4M588.5 192.5h.4M557.9 194.6h.4M614.9 241.1h.4M656.3 161.7h.4M550.5 195.2h.4M597.0 183.8h.4M533.0 152.2h.4M555.3 197.3h.4M668.0 251.0h.4M649.6 258.9h.4M666.4 216.4h.4M640.1 149.2h.4M616.7 215.1h.4M550.7 210.5h.4M664.8 199.7h.4M611.6 177.9h.4M558.8 248.2h.4M503.8 164.7h.4M617.1 195.7h.4M513.8 221.3h.4M563.7 211.7h.4M571.4 205.6h.4M597.3 189.6h.4M518.9 163.7h.4M653.9 207.8h.4M518.5 245.5h.4M543.1 153.4h.4M591.4 172.2h.4M584.1 208.5h.4M538.4 210.7h.4M518.7 203.6h.4M601.4 151.6h.4M570.0 150.8h.4M575.5 245.6h.4M594.8 227.8h.4M630.7 155.8h.4M671.4 228.6h.4M516.8 241.6h.4M567.2 162.6h.4M666.0 209.6h.4M633.8 158.4h.4M634.1 148.9h.4M540.2 186.7h.4M501.6 213.3h.4M536.1 178.0h.4M622.1 193.1h.4M653.6 216.5h.4M650.7 209.6h.4M658.6 246.5h.4M528.2 231.5h.4M558.4 233.6h.4M617.4 241.1h.4M520.4 186.8h.4M627.3 255.8h.4M624.6 147.2h.4M604.1 154.0h.4M594.5 238.4h.4M518.7 253.0h.4M616.5 172.6h.4M532.6 195.6h.4M644.8 211.8h.4M518.8 144.5h.4M518.2 238.1h.4M531.2 208.5h.4M549.5 224.5h.4M565.3 159.3h.4M651.3 206.6h.4M619.0 239.0h.4M664.1 143.7h.4M558.6 160.1h.4M586.3 246.8h.4M638.3 146.3h.4M530.7 240.2h.4M617.2 189.1h.4M581.8 161.0h.4M646.0 189.2h.4M650.9 215.3h.4M512.2 181.5h.4M536.6 249.3h.4M601.5 147.2h.4M528.5 185.3h.4M580.4 211.2h.4M566.5 184.4h.4M500.0 211.5h.4M557.1 144.5h.4M578.9 260.4h.4M506.9 159.5h.4M615.7 174.7h.4M546.6 202.0h.4M544.6 210.3h.4M590.9 256.8h.4M671.6 146.1h.4M596.5 234.5h.4M650.8 234.9h.4M609.2 218.2h.4M562.1 175.8h.4M637.4 246.7h.4M662.3 223.8h.4M551.9 233.6h.4M627.7 203.1h.4M609.5 184.1h.4M594.8 190.7h.4M509.5 182.5h.4M555.2 260.6h.4M582.8 186.1h.4M541.4 170.2h.4M559.8 158.3h.4M500.3 246.5h.4M577.8 195.5h.4M598.0 178.3h.4M528.4 150.0h.4M551.5 179.0h.4M625.4 208.2h.4M662.1 182.9h.4M659.3 212.0h.4M512.9 163.4h.4M600.0 260.5h.4M561.1 234.9h.4M573.5 246.2h.4M510.8 200.1h.4M655.4 175.1h.4M543.8 144.8h.4M527.6 174.2h.4M621.6 168.2h.4M568.5 166.0h.4M603.9 245.7h.4M611.8 165.6h.4M626.7 257.6h.4M603.6 151.5h.4M639.8 247.1h.4M558.4 158.4h.4M531.7 206.4h.4M651.3 218.8h.4M659.6 167.5h.4M555.9 231.9h.4M611.9 190.6h.4M617.1 182.5h.4M509.0 191.7h.4M506.9 217.2h.4M557.2 201.3h.4M603.0 172.8h.4M579.6 143.6h.4M660.0 209.7h.4M670.8 148.7h.4M605.8 228.9h.4M556.3 153.2h.4M526.2 159.1h.4M632.5 152.8h.4M640.6 192.8h.4M592.7 212.6h.4M595.6 220.9h.4M603.7 181.7h.4M627.9 172.9h.4M622.8 233.6h.4M634.0 179.1h.4M633.4 259.3h.4M577.9 175.4h.4M590.1 254.9h.4M521.9 143.1h.4M581.8 220.6h.4M633.7 185.5h.4M671.2 169.4h.4M630.6 152.8h.4M503.9 158.1h.4M509.5 202.2h.4M595.6 163.8h.4M662.5 185.9h.4M525.0 163.3h.4M627.4 252.6h.4M527.2 145.5h.4M634.4 171.1h.4M669.9 201.9h.4M609.7 183.3h.4M638.3 197.2h.4M555.3 250.4h.4M517.8 230.0h.4M510.4 219.5h.4M568.9 245.7h.4M509.4 209.7h.4M570.3 252.3h.4M663.4 217.3h.4M538.0 172.2h.4M544.6 194.1h.4M539.3 166.4h.4M631.1 219.1h.4M550.9 261.3h.4M536.7 210.3h.4M526.3 245.6h.4M650.3 174.1h.4M629.8 240.7h.4M548.2 181.8h.4M583.5 248.9h.4M527.1 223.9h.4M603.0 196.4h.4M599.8 247.9h.4M535.5 248.0h.4M561.7 235.6h.4M649.2 163.9h.4M649.3 261.4h.4M550.8 144.9h.4M518.4 258.9h.4M500.6 251.4h.4M525.2 230.3h.4M516.0 162.2h.4M617.8 152.8h.4M558.1 252.2h.4M623.6 247.8h.4M669.5 145.9h.4M539.8 237.1h.4M619.0 146.5h.4M586.8 169.8h.4M573.9 154.6h.4M502.5 260.9h.4M554.1 247.4h.4M520.0 200.5h.4M522.6 193.4h.4M530.1 224.2h.4M524.7 230.6h.4M586.1 155.5h.4M560.5 201.6h.4M658.9 183.9h.4M536.4 258.1h.4M652.7 229.8h.4M546.5 163.3h.4M545.0 150.3h.4M506.5 203.1h.4M570.0 208.8h.4M562.1 143.3h.4M618.7 220.4h.4M593.7 207.9h.4M619.1 259.9h.4M651.1 228.1h.4M568.5 180.2h.4M571.9 258.8h.4M566.4 188.2h.4M570.3 159.2h.4M672.7 142.6h.4M604.8 253.2h.4M543.3 215.3h.4M564.6 170.9h.4M533.5 155.9h.4M645.7 236.1h.4M657.1 147.9h.4M619.8 180.9h.4M611.4 207.9h.4M553.9 258.6h.4M499.2 231.5h.4M647.5 203.2h.4M602.1 261.4h.4M539.8 217.5h.4M628.3 187.5h.4M622.9 189.2h.4M590.6 215.5h.4M616.8 180.7h.4M608.4 207.2h.4M537.8 215.5h.4M545.1 251.0h.4M581.4 228.6h.4M589.8 199.2h.4M537.5 159.1h.4M660.4 205.4h.4M590.2 205.3h.4M640.5 170.6h.4M529.0 240.6h.4M579.1 218.9h.4M643.0 249.3h.4M650.0 147.2h.4M565.3 241.9h.4M641.3 156.8h.4M525.8 172.2h.4M516.9 184.8h.4M638.8 204.6h.4M577.8 152.6h.4M567.8 261.6h.4M619.9 195.9h.4M582.2 237.8h.4M631.0 160.0h.4M617.4 186.0h.4M589.6 170.5h.4M563.5 182.8h.4M565.3 144.1h.4M533.9 210.5h.4M509.0 163.4h.4M624.0 175.0h.4M555.4 171.0h.4M644.1 153.0h.4M609.7 245.1h.4M534.1 192.8h.4M636.9 216.1h.4M563.7 147.3h.4M576.0 186.1h.4M623.0 177.4h.4M570.0 219.8h.4M640.1 184.3h.4M566.1 211.4h.4M659.9 165.0h.4M668.0 227.4h.4M563.8 221.9h.4M556.3 150.5h.4M630.6 187.5h.4M590.5 201.6h.4M655.8 232.8h.4M503.5 213.1h.4M579.5 197.5h.4M645.1 191.8h.4M581.4 248.8h.4M575.5 201.0h.4M588.1 241.0h.4M615.6 230.9h.4M568.9 146.9h.4M617.3 208.5h.4M632.8 234.4h.4M519.6 168.5h.4M512.4 240.1h.4M516.7 152.6h.4M630.1 209.7h.4M508.6 223.7h.4M622.7 199.9h.4M508.5 224.9h.4M571.7 212.1h.4M672.7 240.0h.4M650.7 159.5h.4M557.2 204.2h.4M500.0 260.6h.4M546.8 173.5h.4M553.5 172.6h.4M648.4 208.7h.4M587.9 192.4h.4M507.9 178.5h.4M649.8 238.2h.4M648.1 172.9h.4M534.1 148.3h.4M592.4 186.9h.4M579.8 200.7h.4M600.6 185.9h.4M638.5 166.0h.4M659.0 208.7h.4M507.9 179.7h.4M591.8 191.1h.4M597.3 180.8h.4M546.6 237.5h.4M549.7 227.3h.4M638.6 213.1h.4M578.1 254.2h.4M576.4 247.4h.4M509.0 194.0h.4M610.2 147.9h.4M649.1 150.6h.4M602.8 163.6h.4M659.5 209.3h.4M638.3 201.8h.4M616.3 223.0h.4M550.3 167.3h.4M644.9 159.5h.4M658.7 166.8h.4M516.6 153.4h.4M635.5 256.1h.4M571.2 221.1h.4M543.8 250.7h.4M618.3 160.6h.4M508.9 225.5h.4M506.3 242.3h.4M550.1 169.9h.4M600.3 180.2h.4M596.5 160.5h.4M657.7 180.9h.4M645.4 160.2h.4M638.1 259.6h.4M567.1 146.0h.4M565.1 218.9h.4M537.9 207.5h.4M515.3 197.7h.4M625.7 193.6h.4M617.1 155.7h.4M643.2 156.7h.4M659.7 261.5h.4M662.5 205.2h.4M549.6 183.8h.4M629.6 201.6h.4M660.8 153.2h.4M583.3 245.7h.4M603.0 206.9h.4M514.4 158.8h.4M546.2 249.2h.4M646.1 169.3h.4M659.9 145.9h.4M603.2 258.1h.4M558.9 255.3h.4M613.2 148.0h.4M557.0 196.0h.4M542.0 231.1h.4M530.1 236.5h.4M550.9 150.3h.4M596.3 153.5h.4M595.0 236.6h.4M602.6 197.4h.4M504.9 203.6h.4M515.9 219.6h.4M522.0 211.4h.4M560.4 187.0h.4M614.4 161.7h.4M528.5 255.0h.4M556.7 243.1h.4M651.0 199.6h.4M524.9 153.3h.4M652.0 156.0h.4M585.3 206.3h.4M519.5 198.1h.4M527.5 206.3h.4M587.2 186.0h.4M533.4 190.4h.4M534.4 157.3h.4M540.7 246.6h.4M586.3 248.9h.4M501.6 255.2h.4M584.0 236.9h.4M598.3 224.7h.4M538.9 232.0h.4M525.7 173.7h.4M504.4 189.2h.4M589.2 177.0h.4M653.9 152.1h.4M599.7 170.1h.4M602.6 236.1h.4M622.7 149.5h.4M541.8 213.9h.4M670.0 146.9h.4M606.6 225.0h.4M640.7 183.0h.4M640.0 197.4h.4M659.2 143.3h.4M662.6 191.4h.4M569.8 152.6h.4M541.6 230.1h.4M617.1 160.1h.4M558.9 158.8h.4M533.5 168.4h.4M556.6 259.1h.4M672.5 237.0h.4M582.5 201.7h.4M634.6 251.0h.4M629.8 218.4h.4M533.6 217.0h.4M646.2 236.4h.4M515.1 228.1h.4M559.8 161.5h.4M667.0 222.7h.4M628.7 158.2h.4M643.1 254.5h.4M656.4 231.4h.4M643.8 238.3h.4M601.7 194.2h.4M642.6 236.1h.4M650.5 177.9h.4M666.2 205.8h.4M663.6 155.9h.4M667.5 236.5h.4M542.8 242.6h.4M539.4 165.8h.4M578.7 170.4h.4M584.7 251.0h.4M618.2 227.2h.4M567.2 236.1h.4M637.1 223.9h.4M662.9 241.1h.4M569.7 152.5h.4M612.5 242.4h.4M558.1 213.4h.4M644.5 237.2h.4M499.8 200.7h.4M501.8 155.3h.4M640.4 192.2h.4M604.2 196.9h.4M557.4 167.6h.4M560.5 243.3h.4M606.8 177.1h.4M514.3 174.5h.4M621.0 195.0h.4M614.0 238.9h.4M520.0 224.0h.4M506.2 240.8h.4M531.0 174.6h.4M665.6 185.5h.4M538.0 248.8h.4M605.2 249.3h.4M567.6 202.0h.4M665.3 202.8h.4M671.0 164.7h.4M643.5 161.5h.4M590.7 142.0h.4M529.5 255.4h.4M578.1 239.1h.4M542.6 184.3h.4M516.6 208.3h.4M649.0 203.7h.4M564.5 253.4h.4M654.5 222.0h.4M512.2 216.9h.4M576.3 256.9h.4M562.0 221.3h.4M609.0 187.1h.4M589.9 223.2h.4M656.9 201.8h.4M562.3 259.1h.4M508.9 242.2h.4M617.9 208.9h.4M576.9 232.1h.4M654.1 229.5h.4M629.5 146.2h.4M555.6 158.4h.4M664.8 249.0h.4M524.1 212.5h.4M599.4 147.6h.4M567.2 231.7h.4M610.6 175.7h.4M631.7 176.9h.4M593.7 192.5h.4M669.2 219.9h.4M639.1 223.2h.4M565.2 257.6h.4M622.5 224.9h.4M547.3 161.4h.4M599.1 241.1h.4M637.1 183.7h.4M523.3 203.9h.4M651.7 161.5h.4M627.5 162.5h.4M553.3 148.4h.4M550.8 188.0h.4M667.2 257.5h.4M531.6 179.1h.4M663.2 165.7h.4M554.8 194.6h.4M517.9 173.2h.4M567.6 188.3h.4M666.7 174.0h.4M534.5 251.1h.4M577.3 242.5h.4M609.9 235.4h.4M553.8 160.2h.4M630.7 198.4h.4M596.2 222.5h.4M630.0 175.0h.4M562.1 252.1h.4M591.1 176.6h.4M608.7 173.2h.4M633.2 147.0h.4M642.8 210.0h.4M560.5 254.8h.4M545.2 171.2h.4M511.2 207.8h.4M630.1 223.4h.4M570.8 238.9h.4M518.4 178.8h.4M611.2 258.1h.4M609.3 225.0h.4M633.8 189.3h.4M662.6 231.1h.4M558.5 189.1h.4M639.2 184.0h.4M531.3 246.6h.4M591.5 204.5h.4M615.5 250.2h.4M522.2 182.6h.4M510.5 191.6h.4M586.4 244.2h.4M615.2 211.3h.4M569.2 210.8h.4M546.6 243.4h.4M636.2 242.6h.4M525.3 222.6h.4M630.2 202.1h.4M655.3 249.9h.4M628.3 240.5h.4M611.9 247.4h.4M521.8 226.5h.4M621.5 215.5h.4M546.9 150.1h.4M604.0 240.9h.4M546.5 167.6h.4M538.0 153.3h.4M616.6 259.0h.4M638.6 185.2h.4M620.7 150.7h.4M644.9 181.0h.4M499.6 217.5h.4M523.1 175.0h.4M509.3 195.5h.4M595.6 238.9h.4M505.9 241.3h.4M518.2 168.9h.4M608.5 182.8h.4M556.6 210.2h.4M536.9 237.2h.4M535.4 242.7h.4M639.7 206.4h.4M504.3 235.4h.4M503.9 202.6h.4M572.8 149.6h.4M608.6 228.9h.4M600.8 190.0h.4M588.1 212.7h.4M538.4 246.1h.4M672.3 238.5h.4M666.3 181.5h.4M670.6 150.6h.4M582.2 158.0h.4M578.0 223.9h.4M622.3 196.6h.4M558.5 164.8h.4M569.1 175.9h.4M532.8 230.3h.4M588.8 194.6h.4M533.4 226.4h.4M533.2 173.9h.4M596.5 226.1h.4M668.3 231.7h.4M664.0 252.4h.4M624.7 228.3h.4M509.9 166.7h.4M501.3 245.6h.4M624.6 217.6h.4M544.9 184.6h.4M527.5 217.9h.4M671.5 178.7h.4M506.7 163.0h.4M560.8 249.9h.4M639.0 196.6h.4M516.8 154.8h.4M525.8 235.3h.4M581.0 260.9h.4M657.6 237.4h.4M581.9 240.6h.4M521.3 155.1h.4M597.0 203.0h.4M535.4 172.2h.4M502.7 251.1h.4M622.6 255.4h.4M669.6 194.4h.4M626.4 188.1h.4M640.3 243.0h.4M522.3 143.5h.4M536.2 212.2h.4M564.9 143.1h.4M643.5 236.3h.4M579.7 147.2h.4M653.7 206.1h.4M511.4 180.8h.4M607.7 248.2h.4M583.3 218.7h.4M534.8 171.2h.4M656.6 187.9h.4M517.1 212.9h.4M521.0 166.0h.4M578.4 212.3h.4M609.7 226.8h.4M575.5 150.1h.4M625.1 148.5h.4M580.9 190.0h.4M616.1 227.6h.4M540.7 219.9h.4M619.4 198.6h.4M523.7 251.1h.4M603.2 149.5h.4M540.5 260.4h.4M538.8 189.1h.4M636.1 240.9h.4M609.3 231.0h.4M505.7 153.3h.4M668.9 238.3h.4M505.6 147.8h.4M540.8 253.7h.4M537.2 222.6h.4M660.9 218.6h.4M659.0 173.6h.4M525.7 144.2h.4M630.7 154.5h.4M668.3 227.2h.4M531.5 238.8h.4M527.3 203.5h.4M517.4 236.4h.4M653.8 252.0h.4M499.4 244.2h.4M595.7 240.6h.4M586.4 216.4h.4M602.5 237.9h.4M512.5 148.5h.4M593.9 176.9h.4M568.1 142.9h.4M628.6 144.9h.4M643.4 239.4h.4M578.7 156.7h.4M612.1 166.9h.4M573.7 155.2h.4M668.9 207.5h.4M560.3 153.3h.4M626.1 244.0h.4M646.6 154.2h.4M563.0 178.3h.4M631.7 159.7h.4M604.5 259.4h.4M632.8 142.8h.4M512.0 155.6h.4M619.5 213.9h.4M589.5 196.7h.4M569.9 215.3h.4M611.9 252.0h.4M626.5 237.6h.4M657.8 242.5h.4M623.7 145.7h.4M617.5 244.0h.4M574.0 247.4h.4M530.3 255.1h.4M575.9 226.8h.4M543.0 178.1h.4M559.6 180.9h.4M515.5 195.1h.4M669.7 220.5h.4M661.2 233.5h.4M644.6 261.3h.4M630.0 174.9h.4M542.5 191.5h.4M502.6 169.7h.4M653.2 252.5h.4M556.2 234.5h.4M633.8 248.8h.4M637.3 205.8h.4M517.2 241.1h.4M553.6 217.2h.4M562.9 206.5h.4M667.0 161.3h.4M591.4 220.0h.4M592.7 254.6h.4M569.9 251.7h.4M619.0 258.1h.4M514.6 167.5h.4M549.0 250.8h.4M501.4 173.2h.4M623.6 260.8h.4M529.7 194.6h.4M618.5 224.9h.4M628.8 232.4h.4M542.2 172.9h.4M503.8 224.9h.4M535.4 173.1h.4M666.8 219.2h.4M601.9 220.7h.4M603.0 225.4h.4M551.9 149.7h.4M510.6 143.7h.4M561.9 159.1h.4M518.6 201.2h.4M667.7 224.5h.4M546.6 234.3h.4M530.0 154.0h.4M551.8 191.1h.4M619.0 195.4h.4M625.7 153.4h.4M661.2 183.1h.4M643.8 145.7h.4M643.2 169.2h.4M647.8 238.3h.4M615.7 175.3h.4M500.7 164.8h.4M656.5 161.0h.4M613.7 212.4h.4M614.1 163.7h.4M524.0 153.7h.4M670.0 188.0h.4M612.5 210.4h.4M537.8 149.8h.4M501.6 244.3h.4M521.6 257.6h.4M562.3 228.7h.4M523.1 236.6h.4M542.8 185.9h.4M590.0 155.4h.4M542.2 237.5h.4M548.6 187.7h.4M632.1 168.9h.4M532.7 168.3h.4M565.8 185.8h.4M610.6 198.6h.4M650.3 148.1h.4M614.5 242.4h.4M539.9 145.5h.4M575.3 155.9h.4M579.0 227.4h.4M515.3 156.1h.4M582.4 162.9h.4M539.1 194.8h.4M519.6 150.1h.4M561.8 198.3h.4M662.0 208.6h.4M511.4 168.7h.4M628.5 209.5h.4M650.4 257.5h.4M648.3 155.2h.4M663.2 205.0h.4M540.7 162.5h.4M649.5 167.5h.4M513.5 173.8h.4M659.8 197.3h.4M626.3 150.9h.4M577.8 180.1h.4M534.7 221.6h.4M561.9 156.4h.4M670.2 199.8h.4M530.3 143.3h.4M612.6 203.8h.4M503.3 198.4h.4M627.8 206.5h.4M539.7 201.9h.4M604.3 220.1h.4M524.2 238.4h.4M663.5 230.8h.4M648.2 186.1h.4M656.1 163.8h.4M538.5 213.8h.4M655.9 151.8h.4M536.8 146.3h.4M575.4 158.9h.4M532.3 231.9h.4M600.5 254.7h.4M568.9 223.5h.4M501.2 255.8h.4M539.6 199.2h.4M588.0 255.8h.4M584.6 261.0h.4M607.1 168.0h.4M644.1 166.2h.4M672.9 196.8h.4M538.4 257.3h.4M555.0 190.8h.4M558.7 222.2h.4M503.0 186.9h.4M527.2 241.4h.4M499.0 214.9h.4M543.9 196.5h.4M596.8 227.4h.4M523.0 170.9h.4M520.0 257.2h.4M525.0 158.4h.4M589.9 211.8h.4M653.3 148.8h.4M539.8 162.1h.4M600.9 196.3h.4M570.2 248.6h.4M614.1 245.2h.4M665.5 174.3h.4M662.9 190.9h.4M508.0 251.8h.4M517.1 144.1h.4M549.4 176.7h.4M667.2 246.5h.4M572.1 205.5h.4M646.7 238.8h.4M612.7 203.5h.4M519.3 171.2h.4M613.5 212.4h.4M638.4 249.9h.4M666.5 165.1h.4M512.2 249.7h.4M598.2 163.8h.4M619.4 172.7h.4M540.2 186.0h.4M590.2 223.3h.4M511.8 231.0h.4M607.6 198.6h.4M615.9 238.0h.4M500.7 199.0h.4M617.0 227.1h.4M611.7 163.6h.4M665.8 236.3h.4M539.5 193.7h.4M665.7 166.9h.4M570.2 257.4h.4M655.6 169.9h.4M626.9 185.2h.4M614.4 234.0h.4M521.2 168.7h.4M536.4 173.9h.4M505.2 158.3h.4M569.7 192.5h.4M512.5 211.9h.4M663.0 211.2h.4M560.9 226.5h.4M575.1 163.1h.4M582.8 144.1h.4M616.6 161.3h.4M563.3 257.5h.4M632.4 242.3h.4M610.7 218.2h.4M621.7 258.0h.4M533.2 233.9h.4M551.3 172.7h.4M642.0 214.1h.4M646.8 247.0h.4M601.5 165.8h.4M501.6 206.2h.4M625.3 174.7h.4M511.2 142.6h.4M529.1 225.5h.4M499.7 169.6h.4M545.1 227.3h.4M670.8 144.3h.4M518.9 254.2h.4M667.8 159.8h.4M557.4 204.7h.4M554.7 192.1h.4M582.3 173.0h.4M508.6 152.1h.4M527.3 153.0h.4M607.6 225.6h.4M544.8 237.0h.4M625.8 183.0h.4M584.6 164.6h.4M660.6 209.2h.4M507.9 160.5h.4M619.5 188.2h.4M623.8 169.5h.4M637.7 238.2h.4M515.4 212.3h.4M532.3 226.9h.4M638.9 237.0h.4M539.2 153.2h.4M614.4 209.8h.4M523.0 165.1h.4M600.4 154.9h.4M609.3 170.9h.4M544.0 192.8h.4M591.8 228.9h.4M504.4 228.9h.4M537.5 176.9h.4M610.3 224.9h.4M606.0 250.2h.4M534.6 179.3h.4M614.3 173.3h.4M526.4 169.2h.4M633.2 241.2h.4M623.6 257.0h.4M637.2 179.2h.4M553.9 228.5h.4M508.7 215.1h.4M514.5 147.9h.4M588.4 160.2h.4M661.1 247.3h.4M579.3 165.7h.4M519.8 202.8h.4M589.7 185.5h.4M623.6 205.5h.4M633.9 154.7h.4M511.2 188.4h.4M583.1 172.3h.4M615.3 168.6h.4M554.4 199.2h.4M622.9 234.4h.4M563.7 195.6h.4M660.4 254.1h.4M606.7 154.6h.4M578.3 218.4h.4M547.5 146.5h.4M669.7 251.2h.4M521.4 197.9h.4M606.8 178.0h.4M510.9 232.1h.4M633.1 194.5h.4M513.9 189.3h.4M515.4 257.6h.4M507.9 176.6h.4M632.6 158.2h.4M517.5 150.5h.4M527.5 205.8h.4M644.0 162.3h.4M529.2 233.8h.4M573.1 182.6h.4M520.4 171.1h.4M668.1 156.0h.4M544.2 230.9h.4M654.2 250.5h.4M581.3 256.8h.4M604.1 176.6h.4M580.0 227.9h.4M626.7 157.6h.4M532.7 257.0h.4M517.6 239.6h.4M558.0 171.8h.4M543.4 198.3h.4M671.4 159.8h.4M647.7 180.5h.4M529.1 231.4h.4M558.4 164.5h.4M571.8 240.6h.4M649.2 211.0h.4M500.8 233.6h.4M604.5 249.9h.4M664.7 181.2h.4M646.6 240.3h.4M545.3 185.9h.4M564.2 184.3h.4M564.8 155.2h.4M538.5 251.1h.4M570.4 218.3h.4M653.4 232.7h.4M541.5 252.4h.4M638.9 260.9h.4M625.7 232.6h.4M640.5 172.4h.4M613.1 187.7h.4M645.1 158.0h.4M592.8 182.4h.4M641.8 183.4h.4M645.8 243.7h.4M651.9 158.7h.4M662.3 231.3h.4M616.8 220.3h.4M507.4 246.4h.4M594.3 196.7h.4M558.0 235.9h.4M635.1 246.4h.4M536.3 182.9h.4M542.4 154.0h.4M555.9 145.1h.4M637.6 169.3h.4M511.3 150.1h.4M628.0 165.8h.4M579.4 190.2h.4M638.6 256.5h.4M552.9 217.9h.4M654.7 198.5h.4M655.5 230.0h.4M553.2 246.9h.4M598.7 154.7h.4M601.2 241.5h.4M589.2 200.1h.4M571.5 247.7h.4M614.8 167.0h.4M562.1 185.6h.4M665.8 225.5h.4M520.7 251.7h.4M505.1 212.9h.4M574.2 228.1h.4M573.7 153.1h.4M590.1 240.4h.4M636.3 184.8h.4M537.7 231.4h.4M638.5 168.3h.4M652.7 261.1h.4M574.4 187.7h.4M622.5 253.6h.4M534.1 178.2h.4M556.3 229.9h.4M531.5 207.6h.4M586.1 222.2h.4M523.9 256.8h.4M673.0 209.3h.4M637.4 164.0h.4M657.4 208.2h.4M631.2 246.2h.4M561.9 252.9h.4M535.1 144.8h.4M586.4 249.8h.4M655.7 256.6h.4M587.9 253.9h.4M596.4 159.2h.4M608.8 238.4h.4M572.7 214.3h.4M544.1 175.1h.4M572.1 203.6h.4M580.5 153.1h.4M500.0 182.8h.4M623.7 231.8h.4M540.2 172.7h.4M588.9 163.1h.4M603.9 250.5h.4M534.1 212.3h.4M624.4 231.9h.4M622.9 227.3h.4M546.4 242.6h.4M660.0 148.3h.4M663.3 195.1h.4M514.0 150.4h.4M637.7 223.3h.4M523.7 197.2h.4M610.1 261.7h.4M557.5 234.0h.4M541.7 165.9h.4M527.1 191.2h.4M606.6 178.4h.4M527.2 168.2h.4M513.8 165.2h.4M553.9 202.5h.4M530.9 199.6h.4M575.5 258.8h.4M583.6 255.4h.4M581.0 165.8h.4M602.0 159.4h.4M528.4 150.8h.4M621.0 258.0h.4M569.2 184.5h.4M573.0 184.2h.4M619.2 189.0h.4M525.5 245.7h.4M598.6 142.8h.4M646.8 229.4h.4M560.7 217.6h.4M659.1 190.2h.4M574.3 177.8h.4M595.4 221.5h.4M626.9 255.9h.4M524.3 185.9h.4M647.2 236.9h.4M601.7 223.3h.4M558.2 255.4h.4M594.6 190.3h.4M530.7 155.9h.4M655.2 238.1h.4M503.7 180.8h.4M582.5 201.5h.4M562.2 249.4h.4M559.9 205.8h.4M660.7 218.7h.4M582.0 181.9h.4M566.4 215.1h.4M635.8 173.3h.4M563.5 188.5h.4M562.1 251.6h.4M592.8 175.1h.4M556.8 240.6h.4M526.9 224.8h.4M502.8 165.2h.4M509.3 238.7h.4M524.6 169.4h.4M509.0 173.7h.4M626.6 228.4h.4M657.4 255.6h.4M594.9 252.6h.4M514.6 253.0h.4M574.5 165.2h.4M629.2 245.0h.4M566.1 153.2h.4M650.9 232.4h.4M602.9 259.2h.4M505.6 148.7h.4M520.6 144.6h.4M622.2 217.6h.4M518.5 161.4h.4M530.5 215.1h.4M616.0 258.3h.4M561.8 259.5h.4M574.6 188.9h.4M543.1 169.9h.4M668.6 261.4h.4M621.8 163.0h.4M530.3 160.3h.4M560.1 230.5h.4M509.3 205.6h.4M617.4 146.0h.4M575.5 236.9h.4M599.2 196.2h.4M652.4 214.1h.4M557.6 189.5h.4M663.1 245.1h.4M658.2 209.3h.4M523.8 163.0h.4M565.7 224.9h.4M499.8 238.2h.4M635.8 203.8h.4M500.0 237.8h.4M571.1 222.3h.4M598.2 229.4h.4M570.1 257.2h.4M665.3 253.5h.4M606.0 180.0h.4M564.5 174.3h.4M656.3 237.1h.4M636.1 240.5h.4M671.4 224.6h.4M554.4 232.9h.4M544.6 215.3h.4M526.6 244.9h.4M584.0 175.0h.4M659.6 152.0h.4M660.9 232.8h.4M524.9 233.3h.4M598.8 250.9h.4M601.1 193.3h.4M661.4 152.5h.4M634.2 154.3h.4M547.1 155.6h.4M650.6 195.0h.4M625.4 172.8h.4M626.1 219.8h.4M516.0 201.3h.4M624.6 167.7h.4M612.9 175.3h.4M563.5 252.4h.4M663.1 261.7h.4M573.3 210.6h.4M639.7 233.0h.4M578.4 245.6h.4M568.8 256.0h.4M581.3 156.2h.4M629.3 159.4h.4M617.2 148.4h.4M671.0 206.9h.4M627.8 157.7h.4M609.8 187.2h.4M542.3 239.8h.4M504.8 199.3h.4M514.1 244.2h.4M654.4 146.1h.4M579.8 198.3h.4M624.1 229.5h.4M558.7 253.9h.4M531.2 158.4h.4M640.8 156.4h.4M531.4 202.0h.4M557.5 161.7h.4M660.8 198.9h.4M635.7 172.0h.4M657.8 168.5h.4M656.7 215.5h.4M668.0 234.5h.4M608.8 206.0h.4M647.7 195.2h.4M516.1 251.6h.4M639.2 223.8h.4M628.6 169.8h.4M579.6 240.8h.4M666.4 252.8h.4M526.9 224.1h.4M595.4 190.6h.4M528.2 158.5h.4M580.8 201.2h.4M545.6 186.1h.4M595.4 233.4h.4M601.6 161.5h.4M653.2 186.1h.4M666.0 259.8h.4M523.4 211.9h.4M667.2 188.2h.4M594.3 179.7h.4M504.0 166.5h.4M520.6 176.1h.4M608.5 209.6h.4M664.0 224.3h.4M562.0 255.9h.4M609.3 207.2h.4M649.1 222.4h.4M561.7 214.6h.4M551.2 258.3h.4M541.5 258.7h.4M510.2 143.2h.4M595.2 166.7h.4M587.3 156.2h.4M644.6 222.3h.4M618.1 253.2h.4M671.6 223.4h.4M623.1 142.2h.4M507.6 193.2h.4M667.6 179.6h.4M597.9 143.1h.4M571.3 250.3h.4M601.6 240.9h.4M501.3 166.3h.4M530.2 241.9h.4M516.7 253.8h.4M545.5 247.7h.4M588.7 180.8h.4M667.2 190.6h.4M620.4 150.1h.4M643.5 259.7h.4M518.2 231.5h.4M546.1 159.8h.4M562.4 221.4h.4M664.9 261.3h.4M671.9 216.8h.4M612.7 161.3h.4M625.3 208.2h.4M561.5 250.0h.4M543.4 159.0h.4M526.5 159.9h.4M601.4 238.1h.4M526.8 202.3h.4M599.0 209.3h.4M570.8 207.2h.4M501.6 149.0h.4M572.5 170.4h.4M630.7 171.0h.4M642.4 171.0h.4M515.1 199.3h.4M566.4 182.3h.4M632.1 168.7h.4M615.6 242.2h.4M577.8 202.4h.4M659.7 214.5h.4M530.5 150.3h.4M513.3 181.8h.4M514.5 219.9h.4M572.7 179.0h.4M588.1 254.4h.4M541.5 160.6h.4M552.1 180.9h.4M657.3 226.7h.4M573.6 161.9h.4M506.9 156.7h.4M646.5 219.8h.4M526.2 217.0h.4M509.2 202.8h.4M557.3 154.3h.4M628.2 228.0h.4M587.9 162.2h.4M615.5 194.0h.4M614.1 153.0h.4M656.1 142.4h.4M537.8 189.8h.4M533.5 152.5h.4M618.6 261.3h.4M557.3 173.9h.4M615.7 168.7h.4M568.7 224.6h.4M573.9 160.7h.4M511.3 207.2h.4M671.4 252.4h.4M516.4 202.3h.4M584.0 165.3h.4M615.5 201.5h.4M639.7 177.0h.4M661.5 239.7h.4M581.4 159.0h.4M583.2 157.2h.4M618.3 225.7h.4M599.6 259.2h.4M506.9 227.8h.4M638.4 155.5h.4M555.0 148.5h.4M600.4 228.8h.4M559.5 225.5h.4" stroke="#aab0b9" stroke-width=".4" opacity=".5"/><path d="M505.7 132.0L505.7 265.4" stroke="#eceef0" stroke-width="0.55" opacity="0.62" stroke-dasharray="3.6 .6 .6 .6"/><path d="M511.9 132.0L511.9 265.4" stroke="#eceef0" stroke-width="0.55" opacity="0.62" stroke-dasharray="3.6 .6 .6 .6"/><path d="M514.8 132.0L514.8 265.4" stroke="#eceef0" stroke-width="0.55" opacity="0.62" stroke-dasharray="3.6 .6 .6 .6"/><path d="M518.4 132.0L518.4 265.4" stroke="#eceef0" stroke-width="0.55" opacity="0.62" stroke-dasharray="3.6 .6 .6 .6"/><path d="M527.3 132.0L527.3 265.4" stroke="#eceef0" stroke-width="0.55" opacity="0.62" stroke-dasharray="3.6 .6 .6 .6"/><path d="M534.9 132.0L534.9 265.4" stroke="#eceef0" stroke-width="0.55" opacity="0.62" stroke-dasharray="3.6 .6 .6 .6"/><path d="M542.3 132.0L542.3 265.4" stroke="#eceef0" stroke-width="0.55" opacity="0.62" stroke-dasharray="3.6 .6 .6 .6"/><path d="M552.9 132.0L552.9 265.4" stroke="#eceef0" stroke-width="0.55" opacity="0.62" stroke-dasharray="3.6 .6 .6 .6"/><path d="M565.6 132.0L565.6 265.4" stroke="#eceef0" stroke-width="0.55" opacity="0.62" stroke-dasharray="3.6 .6 .6 .6"/><path d="M578.3 132.0L578.3 265.4" stroke="#eceef0" stroke-width="0.55" opacity="0.62" stroke-dasharray="3.6 .6 .6 .6"/><path d="M586.3 132.0L586.3 265.4" stroke="#eceef0" stroke-width="0.55" opacity="0.62" stroke-dasharray="3.6 .6 .6 .6"/><path d="M594.6 132.0L594.6 265.4" stroke="#eceef0" stroke-width="0.55" opacity="0.62" stroke-dasharray="3.6 .6 .6 .6"/><path d="M609.9 132.0L609.9 265.4" stroke="#eceef0" stroke-width="0.55" opacity="0.62" stroke-dasharray="3.6 .6 .6 .6"/><path d="M617.9 132.0L617.9 265.4" stroke="#eceef0" stroke-width="0.55" opacity="0.62" stroke-dasharray="3.6 .6 .6 .6"/><path d="M625.9 132.0L625.9 265.4" stroke="#eceef0" stroke-width="0.55" opacity="0.62" stroke-dasharray="3.6 .6 .6 .6"/><path d="M636.8 132.0L636.8 265.4" stroke="#eceef0" stroke-width="0.55" opacity="0.62" stroke-dasharray="3.6 .6 .6 .6"/><path d="M648.3 132.0L648.3 265.4" stroke="#eceef0" stroke-width="0.55" opacity="0.62" stroke-dasharray="3.6 .6 .6 .6"/><path d="M651.3 132.0L651.3 265.4" stroke="#eceef0" stroke-width="0.55" opacity="0.62" stroke-dasharray="3.6 .6 .6 .6"/><path d="M654.2 132.0L654.2 265.4" stroke="#eceef0" stroke-width="0.55" opacity="0.62" stroke-dasharray="3.6 .6 .6 .6"/><path d="M662.8 132.0L662.8 265.4" stroke="#eceef0" stroke-width="0.55" opacity="0.62" stroke-dasharray="3.6 .6 .6 .6"/><path d="M497.0 140.4L674.5 140.4" stroke="#eceef0" stroke-width="0.55" opacity="0.7" stroke-dasharray="3.6 .6 .6 .6"/><path d="M497.0 166.1L674.5 166.1" stroke="#eceef0" stroke-width="0.55" opacity="0.7" stroke-dasharray="3.6 .6 .6 .6"/><path d="M497.0 179.4L674.5 179.4" stroke="#eceef0" stroke-width="0.55" opacity="0.7" stroke-dasharray="3.6 .6 .6 .6"/><path d="M497.0 192.1L674.5 192.1" stroke="#eceef0" stroke-width="0.55" opacity="0.7" stroke-dasharray="3.6 .6 .6 .6"/><path d="M497.0 224.0L674.5 224.0" stroke="#eceef0" stroke-width="0.55" opacity="0.7" stroke-dasharray="3.6 .6 .6 .6"/><path d="M497.0 233.4L674.5 233.4" stroke="#eceef0" stroke-width="0.55" opacity="0.7" stroke-dasharray="3.6 .6 .6 .6"/><path d="M497.0 237.0L674.5 237.0" stroke="#eceef0" stroke-width="0.55" opacity="0.7" stroke-dasharray="3.6 .6 .6 .6"/><path d="M497.0 256.2L674.5 256.2" stroke="#eceef0" stroke-width="0.55" opacity="0.7" stroke-dasharray="3.6 .6 .6 .6"/><circle cx="505.7" cy="268.5" r="3" fill="#222933" stroke="#d6d9dd" stroke-width=".45"/><text x="505.7" y="269.7" font-size="3.2400000000000007" fill="#e6e8eb" text-anchor="middle">21</text><circle cx="511.9" cy="268.5" r="3" fill="#222933" stroke="#d6d9dd" stroke-width=".45"/><text x="511.9" y="269.7" font-size="3.2400000000000007" fill="#e6e8eb" text-anchor="middle">20</text><circle cx="514.8" cy="268.5" r="3" fill="#222933" stroke="#d6d9dd" stroke-width=".45"/><text x="514.8" y="269.7" font-size="3.2400000000000007" fill="#e6e8eb" text-anchor="middle">19</text><circle cx="518.4" cy="268.5" r="3" fill="#222933" stroke="#d6d9dd" stroke-width=".45"/><text x="518.4" y="269.7" font-size="3.2400000000000007" fill="#e6e8eb" text-anchor="middle">18</text><circle cx="527.3" cy="268.5" r="3" fill="#222933" stroke="#d6d9dd" stroke-width=".45"/><text x="527.3" y="269.7" font-size="3.2400000000000007" fill="#e6e8eb" text-anchor="middle">17</text><circle cx="534.9" cy="268.5" r="3" fill="#222933" stroke="#d6d9dd" stroke-width=".45"/><text x="534.9" y="269.7" font-size="3.2400000000000007" fill="#e6e8eb" text-anchor="middle">16</text><circle cx="542.3" cy="268.5" r="3" fill="#222933" stroke="#d6d9dd" stroke-width=".45"/><text x="542.3" y="269.7" font-size="3.2400000000000007" fill="#e6e8eb" text-anchor="middle">15</text><circle cx="552.9" cy="268.5" r="3" fill="#222933" stroke="#d6d9dd" stroke-width=".45"/><text x="552.9" y="269.7" font-size="3.2400000000000007" fill="#e6e8eb" text-anchor="middle">14</text><circle cx="565.6" cy="268.5" r="3" fill="#222933" stroke="#d6d9dd" stroke-width=".45"/><text x="565.6" y="269.7" font-size="3.2400000000000007" fill="#e6e8eb" text-anchor="middle">13</text><circle cx="578.3" cy="268.5" r="3" fill="#222933" stroke="#d6d9dd" stroke-width=".45"/><text x="578.3" y="269.7" font-size="3.2400000000000007" fill="#e6e8eb" text-anchor="middle">12</text><circle cx="586.3" cy="268.5" r="3" fill="#222933" stroke="#d6d9dd" stroke-width=".45"/><text x="586.3" y="269.7" font-size="3.2400000000000007" fill="#e6e8eb" text-anchor="middle">11</text><circle cx="594.6" cy="268.5" r="3" fill="#222933" stroke="#d6d9dd" stroke-width=".45"/><text x="594.6" y="269.7" font-size="3.2400000000000007" fill="#e6e8eb" text-anchor="middle">10</text><circle cx="609.9" cy="268.5" r="3" fill="#222933" stroke="#d6d9dd" stroke-width=".45"/><text x="609.9" y="269.8" font-size="3.72" fill="#e6e8eb" text-anchor="middle">9</text><circle cx="617.9" cy="268.5" r="3" fill="#222933" stroke="#d6d9dd" stroke-width=".45"/><text x="617.9" y="269.8" font-size="3.72" fill="#e6e8eb" text-anchor="middle">8</text><circle cx="625.9" cy="268.5" r="3" fill="#222933" stroke="#d6d9dd" stroke-width=".45"/><text x="625.9" y="269.8" font-size="3.72" fill="#e6e8eb" text-anchor="middle">7</text><circle cx="636.8" cy="268.5" r="3" fill="#222933" stroke="#d6d9dd" stroke-width=".45"/><text x="636.8" y="269.8" font-size="3.72" fill="#e6e8eb" text-anchor="middle">6</text><circle cx="648.3" cy="268.5" r="3" fill="#222933" stroke="#d6d9dd" stroke-width=".45"/><text x="648.3" y="269.8" font-size="3.72" fill="#e6e8eb" text-anchor="middle">5</text><circle cx="651.3" cy="268.5" r="3" fill="#222933" stroke="#d6d9dd" stroke-width=".45"/><text x="651.3" y="269.8" font-size="3.72" fill="#e6e8eb" text-anchor="middle">4</text><circle cx="654.2" cy="268.5" r="3" fill="#222933" stroke="#d6d9dd" stroke-width=".45"/><text x="654.2" y="269.8" font-size="3.72" fill="#e6e8eb" text-anchor="middle">3</text><circle cx="662.8" cy="268.5" r="3" fill="#222933" stroke="#d6d9dd" stroke-width=".45"/><text x="662.8" y="269.8" font-size="3.72" fill="#e6e8eb" text-anchor="middle">1</text><circle cx="493.3" cy="140.4" r="3" fill="#222933" stroke="#d6d9dd" stroke-width=".45"/><text x="493.3" y="141.7" font-size="3.72" fill="#e6e8eb" text-anchor="middle">X</text><circle cx="677.9" cy="166.1" r="3" fill="#222933" stroke="#d6d9dd" stroke-width=".45"/><text x="677.9" y="167.4" font-size="3.72" fill="#e6e8eb" text-anchor="middle">G</text><circle cx="677.9" cy="179.4" r="3" fill="#222933" stroke="#d6d9dd" stroke-width=".45"/><text x="677.9" y="180.7" font-size="3.72" fill="#e6e8eb" text-anchor="middle">F</text><circle cx="677.9" cy="192.1" r="3" fill="#222933" stroke="#d6d9dd" stroke-width=".45"/><text x="677.9" y="193.4" font-size="3.72" fill="#e6e8eb" text-anchor="middle">E</text><circle cx="677.9" cy="224.0" r="3" fill="#222933" stroke="#d6d9dd" stroke-width=".45"/><text x="677.9" y="225.3" font-size="3.72" fill="#e6e8eb" text-anchor="middle">D</text><circle cx="677.9" cy="233.4" r="3" fill="#222933" stroke="#d6d9dd" stroke-width=".45"/><text x="677.9" y="234.7" font-size="3.72" fill="#e6e8eb" text-anchor="middle">C</text><circle cx="677.9" cy="237.0" r="3" fill="#222933" stroke="#d6d9dd" stroke-width=".45"/><text x="677.9" y="238.3" font-size="3.72" fill="#e6e8eb" text-anchor="middle">B</text><circle cx="493.3" cy="256.2" r="3" fill="#222933" stroke="#d6d9dd" stroke-width=".45"/><text x="493.3" y="257.5" font-size="3.72" fill="#e6e8eb" text-anchor="middle">A</text><circle cx="657.5" cy="129.2" r="3" fill="#222933" stroke="#d6d9dd" stroke-width=".45"/><text x="657.5" y="130.5" font-size="3.72" fill="#e6e8eb" text-anchor="middle">J</text><path d="M657.5 131.6L657.5 140.0" stroke="#d6d9dd" stroke-width="0.45"/><rect x="510.0" y="160.7" width="22.7" height="10.8" rx="3.4" fill="none" stroke="#e6e8eb" stroke-width=".45" opacity=".8"/><rect x="537.1" y="160.7" width="78.3" height="10.8" rx="3.4" fill="none" stroke="#e6e8eb" stroke-width=".45" opacity=".8"/><rect x="619.8" y="160.7" width="36.2" height="10.8" rx="3.4" fill="none" stroke="#e6e8eb" stroke-width=".45" opacity=".8"/><path d="M531.9 161.7L537.9 170.5M537.9 161.7L531.9 170.5" stroke="#f4f5f6" stroke-width=".5" opacity=".8"/><circle cx="534.9" cy="166.1" r="2.200" fill="#cfd3d8" opacity=".45"/><path d="M532.5 164.1h4.8" stroke="#f4f5f6" stroke-width=".4"/><path d="M532.5 165.1h4.8" stroke="#f4f5f6" stroke-width=".4"/><path d="M532.5 166.1h4.8" stroke="#f4f5f6" stroke-width=".4"/><path d="M532.5 167.1h4.8" stroke="#f4f5f6" stroke-width=".4"/><path d="M532.5 168.1h4.8" stroke="#f4f5f6" stroke-width=".4"/><path d="M614.6 161.7L620.6 170.5M620.6 161.7L614.6 170.5" stroke="#f4f5f6" stroke-width=".5" opacity=".8"/><circle cx="617.6" cy="166.1" r="2.200" fill="#cfd3d8" opacity=".45"/><path d="M615.2 164.1h4.8" stroke="#f4f5f6" stroke-width=".4"/><path d="M615.2 165.1h4.8" stroke="#f4f5f6" stroke-width=".4"/><path d="M615.2 166.1h4.8" stroke="#f4f5f6" stroke-width=".4"/><path d="M615.2 167.1h4.8" stroke="#f4f5f6" stroke-width=".4"/><path d="M615.2 168.1h4.8" stroke="#f4f5f6" stroke-width=".4"/><path d="M504.0 166.1L660.0 166.1" stroke="#f4f5f6" stroke-width="0.5" opacity="0.8"/><rect x="542.0" y="187.0" width="73.4" height="10.8" rx="3.4" fill="none" stroke="#e6e8eb" stroke-width=".45" opacity=".8"/><rect x="619.8" y="187.0" width="36.2" height="10.8" rx="3.4" fill="none" stroke="#e6e8eb" stroke-width=".45" opacity=".8"/><path d="M614.6 188.0L620.6 196.8M620.6 188.0L614.6 196.8" stroke="#f4f5f6" stroke-width=".5" opacity=".8"/><circle cx="617.6" cy="192.4" r="2.200" fill="#cfd3d8" opacity=".45"/><path d="M615.2 190.4h4.8" stroke="#f4f5f6" stroke-width=".4"/><path d="M615.2 191.4h4.8" stroke="#f4f5f6" stroke-width=".4"/><path d="M615.2 192.4h4.8" stroke="#f4f5f6" stroke-width=".4"/><path d="M615.2 193.4h4.8" stroke="#f4f5f6" stroke-width=".4"/><path d="M615.2 194.4h4.8" stroke="#f4f5f6" stroke-width=".4"/><path d="M536.0 192.4L660.0 192.4" stroke="#f4f5f6" stroke-width="0.5" opacity="0.8"/><circle cx="534.9" cy="192.4" r="2.4" fill="#cfd3d8" opacity=".8"/><rect x="514.1" y="160.0" width="1.4" height="1.4" fill="#ffffff"/><rect x="517.7" y="160.0" width="1.4" height="1.4" fill="#ffffff"/><rect x="526.6" y="160.0" width="1.4" height="1.4" fill="#ffffff"/><rect x="534.2" y="160.0" width="1.4" height="1.4" fill="#ffffff"/><rect x="541.6" y="160.0" width="1.4" height="1.4" fill="#ffffff"/><rect x="552.2" y="160.0" width="1.4" height="1.4" fill="#ffffff"/><rect x="564.9" y="160.0" width="1.4" height="1.4" fill="#ffffff"/><rect x="577.6" y="160.0" width="1.4" height="1.4" fill="#ffffff"/><rect x="585.6" y="160.0" width="1.4" height="1.4" fill="#ffffff"/><rect x="593.9" y="160.0" width="1.4" height="1.4" fill="#ffffff"/><rect x="609.2" y="160.0" width="1.4" height="1.4" fill="#ffffff"/><rect x="617.2" y="160.0" width="1.4" height="1.4" fill="#ffffff"/><rect x="625.2" y="160.0" width="1.4" height="1.4" fill="#ffffff"/><rect x="636.1" y="160.0" width="1.4" height="1.4" fill="#ffffff"/><rect x="647.6" y="160.0" width="1.4" height="1.4" fill="#ffffff"/><rect x="650.6" y="160.0" width="1.4" height="1.4" fill="#ffffff"/><rect x="653.5" y="160.0" width="1.4" height="1.4" fill="#ffffff"/><rect x="662.1" y="160.0" width="1.4" height="1.4" fill="#ffffff"/><rect x="514.1" y="165.4" width="1.4" height="1.4" fill="#ffffff"/><rect x="517.7" y="165.4" width="1.4" height="1.4" fill="#ffffff"/><rect x="526.6" y="165.4" width="1.4" height="1.4" fill="#ffffff"/><rect x="534.2" y="165.4" width="1.4" height="1.4" fill="#ffffff"/><rect x="541.6" y="165.4" width="1.4" height="1.4" fill="#ffffff"/><rect x="552.2" y="165.4" width="1.4" height="1.4" fill="#ffffff"/><rect x="564.9" y="165.4" width="1.4" height="1.4" fill="#ffffff"/><rect x="577.6" y="165.4" width="1.4" height="1.4" fill="#ffffff"/><rect x="585.6" y="165.4" width="1.4" height="1.4" fill="#ffffff"/><rect x="593.9" y="165.4" width="1.4" height="1.4" fill="#ffffff"/><rect x="609.2" y="165.4" width="1.4" height="1.4" fill="#ffffff"/><rect x="617.2" y="165.4" width="1.4" height="1.4" fill="#ffffff"/><rect x="625.2" y="165.4" width="1.4" height="1.4" fill="#ffffff"/><rect x="636.1" y="165.4" width="1.4" height="1.4" fill="#ffffff"/><rect x="647.6" y="165.4" width="1.4" height="1.4" fill="#ffffff"/><rect x="650.6" y="165.4" width="1.4" height="1.4" fill="#ffffff"/><rect x="653.5" y="165.4" width="1.4" height="1.4" fill="#ffffff"/><rect x="662.1" y="165.4" width="1.4" height="1.4" fill="#ffffff"/><rect x="514.1" y="170.8" width="1.4" height="1.4" fill="#ffffff"/><rect x="517.7" y="170.8" width="1.4" height="1.4" fill="#ffffff"/><rect x="526.6" y="170.8" width="1.4" height="1.4" fill="#ffffff"/><rect x="534.2" y="170.8" width="1.4" height="1.4" fill="#ffffff"/><rect x="541.6" y="170.8" width="1.4" height="1.4" fill="#ffffff"/><rect x="552.2" y="170.8" width="1.4" height="1.4" fill="#ffffff"/><rect x="564.9" y="170.8" width="1.4" height="1.4" fill="#ffffff"/><rect x="577.6" y="170.8" width="1.4" height="1.4" fill="#ffffff"/><rect x="585.6" y="170.8" width="1.4" height="1.4" fill="#ffffff"/><rect x="593.9" y="170.8" width="1.4" height="1.4" fill="#ffffff"/><rect x="609.2" y="170.8" width="1.4" height="1.4" fill="#ffffff"/><rect x="617.2" y="170.8" width="1.4" height="1.4" fill="#ffffff"/><rect x="625.2" y="170.8" width="1.4" height="1.4" fill="#ffffff"/><rect x="636.1" y="170.8" width="1.4" height="1.4" fill="#ffffff"/><rect x="647.6" y="170.8" width="1.4" height="1.4" fill="#ffffff"/><rect x="650.6" y="170.8" width="1.4" height="1.4" fill="#ffffff"/><rect x="653.5" y="170.8" width="1.4" height="1.4" fill="#ffffff"/><rect x="662.1" y="170.8" width="1.4" height="1.4" fill="#ffffff"/><rect x="541.6" y="186.3" width="1.4" height="1.4" fill="#ffffff"/><rect x="552.2" y="186.3" width="1.4" height="1.4" fill="#ffffff"/><rect x="564.9" y="186.3" width="1.4" height="1.4" fill="#ffffff"/><rect x="577.6" y="186.3" width="1.4" height="1.4" fill="#ffffff"/><rect x="585.6" y="186.3" width="1.4" height="1.4" fill="#ffffff"/><rect x="593.9" y="186.3" width="1.4" height="1.4" fill="#ffffff"/><rect x="609.2" y="186.3" width="1.4" height="1.4" fill="#ffffff"/><rect x="617.2" y="186.3" width="1.4" height="1.4" fill="#ffffff"/><rect x="625.2" y="186.3" width="1.4" height="1.4" fill="#ffffff"/><rect x="636.1" y="186.3" width="1.4" height="1.4" fill="#ffffff"/><rect x="647.6" y="186.3" width="1.4" height="1.4" fill="#ffffff"/><rect x="650.6" y="186.3" width="1.4" height="1.4" fill="#ffffff"/><rect x="653.5" y="186.3" width="1.4" height="1.4" fill="#ffffff"/><rect x="662.1" y="186.3" width="1.4" height="1.4" fill="#ffffff"/><rect x="541.6" y="191.7" width="1.4" height="1.4" fill="#ffffff"/><rect x="552.2" y="191.7" width="1.4" height="1.4" fill="#ffffff"/><rect x="564.9" y="191.7" width="1.4" height="1.4" fill="#ffffff"/><rect x="577.6" y="191.7" width="1.4" height="1.4" fill="#ffffff"/><rect x="585.6" y="191.7" width="1.4" height="1.4" fill="#ffffff"/><rect x="593.9" y="191.7" width="1.4" height="1.4" fill="#ffffff"/><rect x="609.2" y="191.7" width="1.4" height="1.4" fill="#ffffff"/><rect x="617.2" y="191.7" width="1.4" height="1.4" fill="#ffffff"/><rect x="625.2" y="191.7" width="1.4" height="1.4" fill="#ffffff"/><rect x="636.1" y="191.7" width="1.4" height="1.4" fill="#ffffff"/><rect x="647.6" y="191.7" width="1.4" height="1.4" fill="#ffffff"/><rect x="650.6" y="191.7" width="1.4" height="1.4" fill="#ffffff"/><rect x="653.5" y="191.7" width="1.4" height="1.4" fill="#ffffff"/><rect x="662.1" y="191.7" width="1.4" height="1.4" fill="#ffffff"/><rect x="541.6" y="197.1" width="1.4" height="1.4" fill="#ffffff"/><rect x="552.2" y="197.1" width="1.4" height="1.4" fill="#ffffff"/><rect x="564.9" y="197.1" width="1.4" height="1.4" fill="#ffffff"/><rect x="577.6" y="197.1" width="1.4" height="1.4" fill="#ffffff"/><rect x="585.6" y="197.1" width="1.4" height="1.4" fill="#ffffff"/><rect x="593.9" y="197.1" width="1.4" height="1.4" fill="#ffffff"/><rect x="609.2" y="197.1" width="1.4" height="1.4" fill="#ffffff"/><rect x="617.2" y="197.1" width="1.4" height="1.4" fill="#ffffff"/><rect x="625.2" y="197.1" width="1.4" height="1.4" fill="#ffffff"/><rect x="636.1" y="197.1" width="1.4" height="1.4" fill="#ffffff"/><rect x="647.6" y="197.1" width="1.4" height="1.4" fill="#ffffff"/><rect x="650.6" y="197.1" width="1.4" height="1.4" fill="#ffffff"/><rect x="653.5" y="197.1" width="1.4" height="1.4" fill="#ffffff"/><rect x="662.1" y="197.1" width="1.4" height="1.4" fill="#ffffff"/><path d="M518.4 154.0L518.4 204.0" stroke="#f1f2f4" stroke-width="0.6" opacity="0.7"/><path d="M527.3 154.0L527.3 204.0" stroke="#f1f2f4" stroke-width="0.6" opacity="0.7"/><path d="M534.9 154.0L534.9 204.0" stroke="#f1f2f4" stroke-width="0.6" opacity="0.7"/><path d="M542.3 154.0L542.3 204.0" stroke="#f1f2f4" stroke-width="0.6" opacity="0.7"/><path d="M552.9 154.0L552.9 204.0" stroke="#f1f2f4" stroke-width="0.6" opacity="0.7"/><path d="M565.6 154.0L565.6 204.0" stroke="#f1f2f4" stroke-width="0.6" opacity="0.7"/><path d="M578.3 154.0L578.3 204.0" stroke="#f1f2f4" stroke-width="0.6" opacity="0.7"/><path d="M586.3 154.0L586.3 204.0" stroke="#f1f2f4" stroke-width="0.6" opacity="0.7"/><path d="M594.6 154.0L594.6 204.0" stroke="#f1f2f4" stroke-width="0.6" opacity="0.7"/><path d="M609.9 154.0L609.9 204.0" stroke="#f1f2f4" stroke-width="0.6" opacity="0.7"/><path d="M617.9 154.0L617.9 204.0" stroke="#f1f2f4" stroke-width="0.6" opacity="0.7"/><path d="M625.9 154.0L625.9 204.0" stroke="#f1f2f4" stroke-width="0.6" opacity="0.7"/><path d="M636.8 154.0L636.8 204.0" stroke="#f1f2f4" stroke-width="0.6" opacity="0.7"/><path d="M648.3 154.0L648.3 204.0" stroke="#f1f2f4" stroke-width="0.6" opacity="0.7"/><path d="M651.3 154.0L651.3 204.0" stroke="#f1f2f4" stroke-width="0.6" opacity="0.7"/><path d="M654.2 154.0L654.2 204.0" stroke="#f1f2f4" stroke-width="0.6" opacity="0.7"/><path d="M662.8 154.0L662.8 204.0" stroke="#f1f2f4" stroke-width="0.6" opacity="0.7"/><path d="M505.8 155.4L505.8 177.6" stroke="#ffffff" stroke-width="0.8" stroke-dasharray="1.6 .5"/><path d="M513.5 155.4L513.5 177.6" stroke="#ffffff" stroke-width="1.3" stroke-dasharray="1.6 .5"/><path d="M518.3 155.4L518.3 177.6" stroke="#ffffff" stroke-width="0.8" stroke-dasharray="1.6 .5"/><path d="M505.4 155.8L521.0 155.8" stroke="#ffffff" stroke-width="1.2"/><path d="M505.4 177.2L521.0 177.2" stroke="#ffffff" stroke-width="1.2"/><path d="M505.4 203.0L521.0 203.0" stroke="#e8eaed" stroke-width="1.1"/><path d="M505.0 187.0L530.0 187.0" stroke="#e8eaed" stroke-width="0.6" stroke-dasharray="1.4 1"/><path d="M505.0 192.4L530.0 192.4" stroke="#e8eaed" stroke-width="0.6" stroke-dasharray="1.4 1"/><path d="M505.0 197.8L530.0 197.8" stroke="#e8eaed" stroke-width="0.6" stroke-dasharray="1.4 1"/><path d="M545.0 179.4L661.0 179.4" stroke="#f1f2f4" stroke-width="0.9" opacity="0.9" stroke-dasharray="3 1"/><path d="M545.6 179.4L545.6 240.0" stroke="#e8eaed" stroke-width="0.8"/><path d="M548.5 179.4L548.5 240.0" stroke="#e8eaed" stroke-width="0.6" stroke-dasharray="2 .8"/><rect x="640.400" y="136.600" width="30.100" height="127.400" rx="2.500" fill="none" stroke="#c9cdd3" stroke-width=".45" opacity=".5"/><path d="M559.5 196.0L559.5 213.0" stroke="#d6d9dd" stroke-width="0.45" opacity="0.8"/><path d="M572.0 196.0L572.0 213.0" stroke="#d6d9dd" stroke-width="0.45" opacity="0.8"/><path d="M648.3 148.0L648.3 206.0" stroke="#f1f2f4" stroke-width="0.8" stroke-dasharray="1.2 2.4"/><path d="M651.3 148.0L651.3 206.0" stroke="#f1f2f4" stroke-width="0.8" stroke-dasharray="1.2 2.4"/><path d="M654.2 148.0L654.2 206.0" stroke="#f1f2f4" stroke-width="0.8" stroke-dasharray="1.2 2.4"/><rect x="642.0" y="136.0" width="26.0" height="5.0" fill="none" stroke="#d6d9dd" stroke-width="0.4" opacity="0.7"/><rect x="500.5" y="135.6" width="27.5" height="5.8" fill="none" stroke="#d6d9dd" stroke-width="0.45" opacity="0.8"/><path d="M500.5 141.4L500.5 170.0" stroke="#d6d9dd" stroke-width="0.4" opacity="0.6"/><path d="M500.6 149.4A3.65 3.65 0 0 1 507.1 149.4A3.65 3.65 0 0 1 513.6 149.4A3.65 3.65 0 0 1 520.2 149.4A3.65 3.65 0 0 1 526.7 149.4A3.65 3.65 0 0 1 533.2 149.4A3.65 3.65 0 0 1 539.8 149.4A3.65 3.65 0 0 1 546.3 149.4A3.65 3.65 0 0 1 552.8 149.4A3.49 3.49 0 0 1 552.8 155.6A3.49 3.49 0 0 1 552.8 161.9A3.49 3.49 0 0 1 552.8 168.1A3.49 3.49 0 0 1 552.8 174.4A3.49 3.49 0 0 1 552.8 180.6A3.65 3.65 0 0 1 546.3 180.6A3.65 3.65 0 0 1 539.8 180.6A3.65 3.65 0 0 1 533.2 180.6A3.65 3.65 0 0 1 526.7 180.6A3.65 3.65 0 0 1 520.2 180.6A3.65 3.65 0 0 1 513.6 180.6A3.65 3.65 0 0 1 507.1 180.6A3.65 3.65 0 0 1 500.6 180.6A3.49 3.49 0 0 1 500.6 174.4A3.49 3.49 0 0 1 500.6 168.1A3.49 3.49 0 0 1 500.6 161.9A3.49 3.49 0 0 1 500.6 155.6A3.49 3.49 0 0 1 500.6 149.4" fill="none" stroke="#d6d9dd" stroke-width="0.5" opacity="0.9"/><path d="M500.0 160.6L504.0 161.4" stroke="#4fb3b3" stroke-width="0.5"/><rect x="553.8" y="212.0" width="23.7" height="26.0" fill="none" stroke="#d6d9dd" stroke-width="0.5" opacity="0.9"/><path d="M559.7 207.5L571.6 207.5" stroke="#d6d9dd" stroke-width="0.45"/><path d="M559.7 206.2L559.7 208.8" stroke="#d6d9dd" stroke-width="0.4"/><path d="M571.6 206.2L571.6 208.8" stroke="#d6d9dd" stroke-width="0.4"/><ellipse cx="565.6" cy="224.4" rx="5.6" ry="1.8" fill="none" stroke="#f1f2f4" stroke-width=".7"/><rect x="559.4" y="226.4" width="12.6" height="6.2" fill="#6b727d" stroke="#f4f5f6" stroke-width=".7"/><path d="M561.2 227.0L561.2 232.4" stroke="#ffffff" stroke-width="0.7"/><path d="M563.0 227.0L563.0 232.4" stroke="#ffffff" stroke-width="0.7"/><path d="M564.8 227.0L564.8 232.4" stroke="#ffffff" stroke-width="0.7"/><path d="M566.6 227.0L566.6 232.4" stroke="#ffffff" stroke-width="0.7"/><path d="M568.4 227.0L568.4 232.4" stroke="#ffffff" stroke-width="0.7"/><path d="M570.2 227.0L570.2 232.4" stroke="#ffffff" stroke-width="0.7"/><rect x="551" y="235" width="18" height="2.8" fill="#8b919c" stroke="#f4f5f6" stroke-width=".5"/><path d="M565.6 232.6L565.6 242.0" stroke="#e8eaed" stroke-width="1.6"/><path d="M484.4 281.3L684.3 281.3" stroke="#d6d9dd" stroke-width="0.5" opacity="0.8"/><circle cx="485.6" cy="280.4" r="1.1" fill="none" stroke="#d6d9dd" stroke-width=".35"/><text x="487.4" y="280.8" font-size="1.7" fill="#e0e3e7" text-anchor="start" opacity="0.9">Bay 2 Future Project</text><text x="487.4" y="283.4" font-size="1.4" fill="#e0e3e7" text-anchor="start" opacity="0.8">1" = 20'-0"</text><rect x="715.3" y="118.3" width="129.9" height="12.1" fill="none" stroke="#c9cdd3" stroke-width="0.45"/><path d="M715.3 124.5L845.2 124.5" stroke="#c9cdd3" stroke-width="0.45"/><path d="M728.0 124.5L728.0 130.4" stroke="#c9cdd3" stroke-width="0.4"/><path d="M733.9 124.5L733.9 130.4" stroke="#c9cdd3" stroke-width="0.4"/><path d="M777.3 124.5L777.3 130.4" stroke="#c9cdd3" stroke-width="0.4"/><path d="M793.9 124.5L793.9 130.4" stroke="#c9cdd3" stroke-width="0.4"/><path d="M810.1 124.5L810.1 130.4" stroke="#c9cdd3" stroke-width="0.4"/><path d="M832.5 124.5L832.5 130.4" stroke="#c9cdd3" stroke-width="0.4"/><text x="780.2" y="122.4" font-size="2.1" fill="#e0e3e7" text-anchor="middle">BOM Future Project</text><text x="721.6" y="128.2" font-size="1.8" fill="#e0e3e7" text-anchor="middle">Type Mark</text><text x="731.0" y="126.4" font-size="1.6" fill="#e0e3e7" text-anchor="middle">Coun</text><text x="731.0" y="128.6" font-size="1.6" fill="#e0e3e7" text-anchor="middle">t</text><text x="755.6" y="128.2" font-size="1.8" fill="#e0e3e7" text-anchor="middle">Description</text><text x="785.6" y="128.2" font-size="1.8" fill="#e0e3e7" text-anchor="middle">Manufacturer</text><text x="802.0" y="128.2" font-size="1.8" fill="#e0e3e7" text-anchor="middle">Model</text><text x="821.3" y="128.2" font-size="1.8" fill="#e0e3e7" text-anchor="middle">Part Number</text><text x="838.9" y="126.6" font-size="1.7" fill="#e0e3e7" text-anchor="middle">Comments/</text><text x="838.9" y="128.8" font-size="1.7" fill="#e0e3e7" text-anchor="middle">Reference</text><rect x="715.3" y="133.0" width="129.9" height="118.1" fill="none" stroke="#c9cdd3" stroke-width="0.45"/><path d="M715.3 136.0L845.2 136.0" stroke="#c9cdd3" stroke-width="0.35" opacity="0.85"/><path d="M715.3 141.3L845.2 141.3" stroke="#c9cdd3" stroke-width="0.35" opacity="0.85"/><path d="M715.3 147.2L845.2 147.2" stroke="#c9cdd3" stroke-width="0.35" opacity="0.85"/><path d="M715.3 152.5L845.2 152.5" stroke="#c9cdd3" stroke-width="0.35" opacity="0.85"/><path d="M715.3 157.9L845.2 157.9" stroke="#c9cdd3" stroke-width="0.35" opacity="0.85"/><path d="M715.3 163.5L845.2 163.5" stroke="#c9cdd3" stroke-width="0.35" opacity="0.85"/><path d="M715.3 169.4L845.2 169.4" stroke="#c9cdd3" stroke-width="0.35" opacity="0.85"/><path d="M715.3 177.9L845.2 177.9" stroke="#c9cdd3" stroke-width="0.35" opacity="0.85"/><path d="M715.3 183.8L845.2 183.8" stroke="#c9cdd3" stroke-width="0.35" opacity="0.85"/><path d="M715.3 189.1L845.2 189.1" stroke="#c9cdd3" stroke-width="0.35" opacity="0.85"/><path d="M715.3 197.7L845.2 197.7" stroke="#c9cdd3" stroke-width="0.35" opacity="0.85"/><path d="M715.3 206.3L845.2 206.3" stroke="#c9cdd3" stroke-width="0.35" opacity="0.85"/><path d="M715.3 211.6L845.2 211.6" stroke="#c9cdd3" stroke-width="0.35" opacity="0.85"/><path d="M715.3 216.9L845.2 216.9" stroke="#c9cdd3" stroke-width="0.35" opacity="0.85"/><path d="M715.3 222.8L845.2 222.8" stroke="#c9cdd3" stroke-width="0.35" opacity="0.85"/><path d="M715.3 231.0L845.2 231.0" stroke="#c9cdd3" stroke-width="0.35" opacity="0.85"/><path d="M715.3 239.3L845.2 239.3" stroke="#c9cdd3" stroke-width="0.35" opacity="0.85"/><path d="M715.3 245.2L845.2 245.2" stroke="#c9cdd3" stroke-width="0.35" opacity="0.85"/><path d="M728.0 133.0L728.0 251.1" stroke="#c9cdd3" stroke-width="0.4"/><path d="M733.9 133.0L733.9 251.1" stroke="#c9cdd3" stroke-width="0.4"/><path d="M777.3 133.0L777.3 251.1" stroke="#c9cdd3" stroke-width="0.4"/><path d="M793.9 133.0L793.9 251.1" stroke="#c9cdd3" stroke-width="0.4"/><path d="M810.1 133.0L810.1 251.1" stroke="#c9cdd3" stroke-width="0.4"/><path d="M832.5 133.0L832.5 251.1" stroke="#c9cdd3" stroke-width="0.4"/><text x="716.2" y="138.1" font-size="1.7" fill="#e0e3e7" text-anchor="start" opacity="0.8">1</text><text x="729.6" y="138.1" font-size="1.7" fill="#e0e3e7" text-anchor="start">12</text><text x="735.0" y="138.1" font-size="1.75" fill="#e0e3e7" text-anchor="start" opacity="0.72">Terminal, Bolted, 4-Hole Pad, 4 in. Tube to Flat</text><text x="778.2" y="138.1" font-size="1.75" fill="#e0e3e7" text-anchor="start" opacity="0.72">AFL</text><text x="794.8" y="138.1" font-size="1.75" fill="#e0e3e7" text-anchor="start" opacity="0.72">ATCF-40-N</text><text x="811.0" y="138.1" font-size="1.75" fill="#e0e3e7" text-anchor="start" opacity="0.72">ATCF-40-N</text><text x="833.2" y="138.1" font-size="1.75" fill="#e0e3e7" text-anchor="start" opacity="0.72">Bus</text><text x="716.2" y="143.4" font-size="1.7" fill="#e0e3e7" text-anchor="start" opacity="0.8">2</text><text x="729.6" y="143.4" font-size="1.7" fill="#e0e3e7" text-anchor="start">36</text><text x="735.0" y="143.4" font-size="1.75" fill="#e0e3e7" text-anchor="start" opacity="0.72">Connector, Bus Support, 4 in. Tube, Slip Fit</text><text x="778.2" y="143.4" font-size="1.75" fill="#e0e3e7" text-anchor="start" opacity="0.72">Anderson</text><text x="794.8" y="143.4" font-size="1.75" fill="#e0e3e7" text-anchor="start" opacity="0.72">ABSF-40-SF</text><text x="794.8" y="145.9" font-size="1.75" fill="#e0e3e7" text-anchor="start" opacity="0.72">2</text><text x="811.0" y="143.4" font-size="1.75" fill="#e0e3e7" text-anchor="start" opacity="0.72">ABSF-40-SF</text><text x="833.2" y="143.4" font-size="1.75" fill="#e0e3e7" text-anchor="start" opacity="0.72">Bus</text><text x="716.2" y="149.3" font-size="1.7" fill="#e0e3e7" text-anchor="start" opacity="0.8">3</text><text x="729.6" y="149.3" font-size="1.7" fill="#e0e3e7" text-anchor="start">48</text><text x="735.0" y="149.3" font-size="1.75" fill="#e0e3e7" text-anchor="start" opacity="0.72">Insulator, Station Post, 230 kV,</text><text x="735.0" y="151.8" font-size="1.75" fill="#e0e3e7" text-anchor="start" opacity="0.72">Standard Strength</text><text x="778.2" y="149.3" font-size="1.75" fill="#e0e3e7" text-anchor="start" opacity="0.72">Lapp</text><text x="794.8" y="149.3" font-size="1.75" fill="#e0e3e7" text-anchor="start" opacity="0.72">TR-304</text><text x="811.0" y="149.3" font-size="1.75" fill="#e0e3e7" text-anchor="start" opacity="0.72">TR-304-70</text><text x="833.2" y="149.3" font-size="1.75" fill="#e0e3e7" text-anchor="start" opacity="0.72">Equipment</text><text x="716.2" y="154.6" font-size="1.7" fill="#e0e3e7" text-anchor="start" opacity="0.8">4</text><text x="729.6" y="154.6" font-size="1.7" fill="#e0e3e7" text-anchor="start">9</text><text x="735.0" y="154.6" font-size="1.75" fill="#e0e3e7" text-anchor="start" opacity="0.72">Bus, Tubular, Aluminum, 4 in. SPS, Sch 40</text><text x="778.2" y="154.6" font-size="1.75" fill="#e0e3e7" text-anchor="start" opacity="0.72">Alcoa</text><text x="794.8" y="154.6" font-size="1.75" fill="#e0e3e7" text-anchor="start" opacity="0.72">6063-T6</text><text x="794.8" y="157.1" font-size="1.75" fill="#e0e3e7" text-anchor="start" opacity="0.72">Sch 40</text><text x="811.0" y="154.6" font-size="1.75" fill="#e0e3e7" text-anchor="start" opacity="0.72">AL-4-SPS-40</text><text x="833.2" y="154.6" font-size="1.75" fill="#e0e3e7" text-anchor="start" opacity="0.72">Bus</text><text x="716.2" y="160.0" font-size="1.7" fill="#e0e3e7" text-anchor="start" opacity="0.8">5</text><text x="729.6" y="160.0" font-size="1.7" fill="#e0e3e7" text-anchor="start">3</text><text x="735.0" y="160.0" font-size="1.75" fill="#e0e3e7" text-anchor="start" opacity="0.72">Switch, Disconnect, Vertical Break,</text><text x="735.0" y="162.5" font-size="1.75" fill="#e0e3e7" text-anchor="start" opacity="0.72">230 kV, 2000 A</text><text x="778.2" y="160.0" font-size="1.75" fill="#e0e3e7" text-anchor="start" opacity="0.72">Southern</text><text x="794.8" y="160.0" font-size="1.75" fill="#e0e3e7" text-anchor="start" opacity="0.72">EV-2</text><text x="794.8" y="162.5" font-size="1.75" fill="#e0e3e7" text-anchor="start" opacity="0.72">230kV</text><text x="811.0" y="160.0" font-size="1.75" fill="#e0e3e7" text-anchor="start" opacity="0.72">EV2-23020</text><text x="833.2" y="160.0" font-size="1.75" fill="#e0e3e7" text-anchor="start" opacity="0.72">Equipment</text><text x="716.2" y="165.6" font-size="1.7" fill="#e0e3e7" text-anchor="start" opacity="0.8">6</text><text x="729.6" y="165.6" font-size="1.7" fill="#e0e3e7" text-anchor="start">6</text><text x="735.0" y="165.6" font-size="1.75" fill="#e0e3e7" text-anchor="start" opacity="0.72">Conductor, ACSR, 795 kcmil, Drake</text><text x="778.2" y="165.6" font-size="1.75" fill="#e0e3e7" text-anchor="start" opacity="0.72">Southwire</text><text x="794.8" y="165.6" font-size="1.75" fill="#e0e3e7" text-anchor="start" opacity="0.72">795 Drake</text><text x="811.0" y="165.6" font-size="1.75" fill="#e0e3e7" text-anchor="start" opacity="0.72">ACSR-795-DR</text><text x="833.2" y="165.6" font-size="1.75" fill="#e0e3e7" text-anchor="start" opacity="0.72">Conductor</text><text x="716.2" y="171.5" font-size="1.7" fill="#e0e3e7" text-anchor="start" opacity="0.8">7</text><text x="729.6" y="171.5" font-size="1.7" fill="#e0e3e7" text-anchor="start">1</text><text x="735.0" y="171.5" font-size="1.75" fill="#e0e3e7" text-anchor="start" opacity="0.72">Breaker, Dead Tank, SF6,</text><text x="735.0" y="174.0" font-size="1.75" fill="#e0e3e7" text-anchor="start" opacity="0.72">230 kV, 3000 A, 63 kA, with Bushing</text><text x="735.0" y="176.5" font-size="1.75" fill="#e0e3e7" text-anchor="start" opacity="0.72">Current Transformers</text><text x="778.2" y="171.5" font-size="1.75" fill="#e0e3e7" text-anchor="start" opacity="0.72">Siemens</text><text x="794.8" y="171.5" font-size="1.75" fill="#e0e3e7" text-anchor="start" opacity="0.72">SPS2-245</text><text x="794.8" y="174.0" font-size="1.75" fill="#e0e3e7" text-anchor="start" opacity="0.72">63-3000</text><text x="794.8" y="176.5" font-size="1.75" fill="#e0e3e7" text-anchor="start" opacity="0.72">Mod. A</text><text x="811.0" y="171.5" font-size="1.75" fill="#e0e3e7" text-anchor="start" opacity="0.72">SPS2-245-63</text><text x="811.0" y="174.0" font-size="1.75" fill="#e0e3e7" text-anchor="start" opacity="0.72">-3000-BCT-5</text><text x="811.0" y="176.5" font-size="1.75" fill="#e0e3e7" text-anchor="start" opacity="0.72">-MODA</text><text x="833.2" y="171.5" font-size="1.75" fill="#e0e3e7" text-anchor="start" opacity="0.72">Equipment</text><text x="716.2" y="180.0" font-size="1.7" fill="#e0e3e7" text-anchor="start" opacity="0.8">8</text><text x="729.6" y="180.0" font-size="1.7" fill="#e0e3e7" text-anchor="start">6</text><text x="735.0" y="180.0" font-size="1.75" fill="#e0e3e7" text-anchor="start" opacity="0.72">Arrester, Surge, Station Class,</text><text x="735.0" y="182.5" font-size="1.75" fill="#e0e3e7" text-anchor="start" opacity="0.72">Polymer Housed, 180 kV MCOV</text><text x="778.2" y="180.0" font-size="1.75" fill="#e0e3e7" text-anchor="start" opacity="0.72">Hubbell</text><text x="794.8" y="180.0" font-size="1.75" fill="#e0e3e7" text-anchor="start" opacity="0.72">PVN-180</text><text x="811.0" y="180.0" font-size="1.75" fill="#e0e3e7" text-anchor="start" opacity="0.72">PVN314180</text><text x="833.2" y="180.0" font-size="1.75" fill="#e0e3e7" text-anchor="start" opacity="0.72">Equipment</text><text x="716.2" y="185.9" font-size="1.7" fill="#e0e3e7" text-anchor="start" opacity="0.8">9</text><text x="729.6" y="185.9" font-size="1.7" fill="#e0e3e7" text-anchor="start">1</text><text x="735.0" y="185.9" font-size="1.75" fill="#e0e3e7" text-anchor="start" opacity="0.72">Structure, Steel, A-Frame, Dead End</text><text x="778.2" y="185.9" font-size="1.75" fill="#e0e3e7" text-anchor="start" opacity="0.72">Valmont</text><text x="794.8" y="185.9" font-size="1.75" fill="#e0e3e7" text-anchor="start" opacity="0.72">AF-230-60</text><text x="811.0" y="185.9" font-size="1.75" fill="#e0e3e7" text-anchor="start" opacity="0.72">AF230-60-G</text><text x="833.2" y="185.9" font-size="1.75" fill="#e0e3e7" text-anchor="start" opacity="0.72">Structure</text><text x="716.2" y="191.2" font-size="1.7" fill="#e0e3e7" text-anchor="start" opacity="0.8">10</text><text x="729.6" y="191.2" font-size="1.7" fill="#e0e3e7" text-anchor="start">8</text><text x="735.0" y="191.2" font-size="1.75" fill="#e0e3e7" text-anchor="start" opacity="0.72">Foundation, Drilled Pier, Reinforced</text><text x="735.0" y="193.7" font-size="1.75" fill="#e0e3e7" text-anchor="start" opacity="0.72">Concrete, 4000 psi, with Anchor</text><text x="735.0" y="196.2" font-size="1.75" fill="#e0e3e7" text-anchor="start" opacity="0.72">Bolt Cage, 36 in. Diameter</text><text x="778.2" y="191.2" font-size="1.75" fill="#e0e3e7" text-anchor="start" opacity="0.72">Concrete</text><text x="794.8" y="191.2" font-size="1.75" fill="#e0e3e7" text-anchor="start" opacity="0.72">DP-36-4000</text><text x="794.8" y="193.7" font-size="1.75" fill="#e0e3e7" text-anchor="start" opacity="0.72">Cage 12</text><text x="811.0" y="191.2" font-size="1.75" fill="#e0e3e7" text-anchor="start" opacity="0.72">DP36-4K-AB</text><text x="833.2" y="191.2" font-size="1.75" fill="#e0e3e7" text-anchor="start" opacity="0.72">Foundation</text><text x="716.2" y="199.8" font-size="1.7" fill="#e0e3e7" text-anchor="start" opacity="0.8">11</text><text x="729.6" y="199.8" font-size="1.7" fill="#e0e3e7" text-anchor="start">3</text><text x="735.0" y="199.8" font-size="1.75" fill="#e0e3e7" text-anchor="start" opacity="0.72">Transformer, Voltage, Capacitor</text><text x="735.0" y="202.3" font-size="1.75" fill="#e0e3e7" text-anchor="start" opacity="0.72">Coupled, 230 kV, with Carrier</text><text x="735.0" y="204.8" font-size="1.75" fill="#e0e3e7" text-anchor="start" opacity="0.72">Accessories and Junction Box</text><text x="778.2" y="199.8" font-size="1.75" fill="#e0e3e7" text-anchor="start" opacity="0.72">Trench</text><text x="794.8" y="199.8" font-size="1.75" fill="#e0e3e7" text-anchor="start" opacity="0.72">TCVT-245</text><text x="794.8" y="202.3" font-size="1.75" fill="#e0e3e7" text-anchor="start" opacity="0.72">C1, JB-2</text><text x="794.8" y="204.8" font-size="1.75" fill="#e0e3e7" text-anchor="start" opacity="0.72">Rev. 2</text><text x="811.0" y="199.8" font-size="1.75" fill="#e0e3e7" text-anchor="start" opacity="0.72">TCVT245-C1</text><text x="811.0" y="202.3" font-size="1.75" fill="#e0e3e7" text-anchor="start" opacity="0.72">-JB2</text><text x="833.2" y="199.8" font-size="1.75" fill="#e0e3e7" text-anchor="start" opacity="0.72">Equipment</text><text x="716.2" y="208.4" font-size="1.7" fill="#e0e3e7" text-anchor="start" opacity="0.8">12</text><text x="729.6" y="208.4" font-size="1.7" fill="#e0e3e7" text-anchor="start">14</text><text x="735.0" y="208.4" font-size="1.75" fill="#e0e3e7" text-anchor="start" opacity="0.72">Cable, Control, 12/C, #10 AWG</text><text x="778.2" y="208.4" font-size="1.75" fill="#e0e3e7" text-anchor="start" opacity="0.72">Okonite</text><text x="794.8" y="208.4" font-size="1.75" fill="#e0e3e7" text-anchor="start" opacity="0.72">C-12-10</text><text x="811.0" y="208.4" font-size="1.75" fill="#e0e3e7" text-anchor="start" opacity="0.72">OK-C12-10</text><text x="833.2" y="208.4" font-size="1.75" fill="#e0e3e7" text-anchor="start" opacity="0.72">Cable</text><text x="716.2" y="213.7" font-size="1.7" fill="#e0e3e7" text-anchor="start" opacity="0.8">13</text><text x="729.6" y="213.7" font-size="1.7" fill="#e0e3e7" text-anchor="start">1</text><text x="735.0" y="213.7" font-size="1.75" fill="#e0e3e7" text-anchor="start" opacity="0.72">Ground Grid Conductor, 4/0</text><text x="778.2" y="213.7" font-size="1.75" fill="#e0e3e7" text-anchor="start" opacity="0.72">Southwire</text><text x="794.8" y="213.7" font-size="1.75" fill="#e0e3e7" text-anchor="start" opacity="0.72">4/0-7 SD</text><text x="811.0" y="213.7" font-size="1.75" fill="#e0e3e7" text-anchor="start" opacity="0.72">SW-40-7SD</text><text x="833.2" y="213.7" font-size="1.75" fill="#e0e3e7" text-anchor="start" opacity="0.72">Grounding</text><text x="716.2" y="219.0" font-size="1.7" fill="#e0e3e7" text-anchor="start" opacity="0.8">14</text><text x="729.6" y="219.0" font-size="1.7" fill="#e0e3e7" text-anchor="start">22</text><text x="735.0" y="219.0" font-size="1.75" fill="#e0e3e7" text-anchor="start" opacity="0.72">Ground Lead, Copper, 4/0 AWG, Bare,</text><text x="735.0" y="221.5" font-size="1.75" fill="#e0e3e7" text-anchor="start" opacity="0.72">Soft Drawn, Stranded</text><text x="778.2" y="219.0" font-size="1.75" fill="#e0e3e7" text-anchor="start" opacity="0.72">Southwire</text><text x="794.8" y="219.0" font-size="1.75" fill="#e0e3e7" text-anchor="start" opacity="0.72">4/0-19 SD</text><text x="811.0" y="219.0" font-size="1.75" fill="#e0e3e7" text-anchor="start" opacity="0.72">SW-40-19SD</text><text x="833.2" y="219.0" font-size="1.75" fill="#e0e3e7" text-anchor="start" opacity="0.72">Grounding</text><text x="716.2" y="224.9" font-size="1.7" fill="#e0e3e7" text-anchor="start" opacity="0.8">15</text><text x="729.6" y="224.9" font-size="1.7" fill="#e0e3e7" text-anchor="start">44</text><text x="735.0" y="224.9" font-size="1.75" fill="#e0e3e7" text-anchor="start" opacity="0.72">Clamp, Ground, Cable to Tube,</text><text x="735.0" y="227.4" font-size="1.75" fill="#e0e3e7" text-anchor="start" opacity="0.72">Bronze, with Stainless Hardware,</text><text x="735.0" y="229.9" font-size="1.75" fill="#e0e3e7" text-anchor="start" opacity="0.72">4 in. Tube</text><text x="778.2" y="224.9" font-size="1.75" fill="#e0e3e7" text-anchor="start" opacity="0.72">Burndy</text><text x="794.8" y="224.9" font-size="1.75" fill="#e0e3e7" text-anchor="start" opacity="0.72">GC-40</text><text x="794.8" y="227.4" font-size="1.75" fill="#e0e3e7" text-anchor="start" opacity="0.72">Bronze</text><text x="811.0" y="224.9" font-size="1.75" fill="#e0e3e7" text-anchor="start" opacity="0.72">GC40-T</text><text x="833.2" y="224.9" font-size="1.75" fill="#e0e3e7" text-anchor="start" opacity="0.72">Grounding</text><text x="716.2" y="233.1" font-size="1.7" fill="#e0e3e7" text-anchor="start" opacity="0.8">16</text><text x="729.6" y="233.1" font-size="1.7" fill="#e0e3e7" text-anchor="start">16</text><text x="735.0" y="233.1" font-size="1.75" fill="#e0e3e7" text-anchor="start" opacity="0.72">Ground Rod, Copper Clad, 3/4 in.</text><text x="735.0" y="235.6" font-size="1.75" fill="#e0e3e7" text-anchor="start" opacity="0.72">x 10 ft, Sectional, with Coupling</text><text x="735.0" y="238.1" font-size="1.75" fill="#e0e3e7" text-anchor="start" opacity="0.72">and Driving Stud</text><text x="778.2" y="233.1" font-size="1.75" fill="#e0e3e7" text-anchor="start" opacity="0.72">Erico</text><text x="794.8" y="233.1" font-size="1.75" fill="#e0e3e7" text-anchor="start" opacity="0.72">613400</text><text x="794.8" y="235.6" font-size="1.75" fill="#e0e3e7" text-anchor="start" opacity="0.72">CPL-34</text><text x="811.0" y="233.1" font-size="1.75" fill="#e0e3e7" text-anchor="start" opacity="0.72">ER-613400</text><text x="833.2" y="233.1" font-size="1.75" fill="#e0e3e7" text-anchor="start" opacity="0.72">Grounding</text><text x="716.2" y="241.4" font-size="1.7" fill="#e0e3e7" text-anchor="start" opacity="0.8">17</text><text x="729.6" y="241.4" font-size="1.7" fill="#e0e3e7" text-anchor="start">10</text><text x="735.0" y="241.4" font-size="1.75" fill="#e0e3e7" text-anchor="start" opacity="0.72">Conduit, PVC, Sch 40, 4 in.,</text><text x="735.0" y="243.9" font-size="1.75" fill="#e0e3e7" text-anchor="start" opacity="0.72">with Bell End</text><text x="778.2" y="241.4" font-size="1.75" fill="#e0e3e7" text-anchor="start" opacity="0.72">Carlon</text><text x="794.8" y="241.4" font-size="1.75" fill="#e0e3e7" text-anchor="start" opacity="0.72">49015-010</text><text x="811.0" y="241.4" font-size="1.75" fill="#e0e3e7" text-anchor="start" opacity="0.72">CAR-49015</text><text x="833.2" y="241.4" font-size="1.75" fill="#e0e3e7" text-anchor="start" opacity="0.72">Conduit</text><text x="716.2" y="247.3" font-size="1.7" fill="#e0e3e7" text-anchor="start" opacity="0.8">18</text><text x="729.6" y="247.3" font-size="1.7" fill="#e0e3e7" text-anchor="start">4</text><text x="735.0" y="247.3" font-size="1.75" fill="#e0e3e7" text-anchor="start" opacity="0.72">Cable Trench, Precast, Lidded, 24 in.</text><text x="778.2" y="247.3" font-size="1.75" fill="#e0e3e7" text-anchor="start" opacity="0.72">Oldcastle</text><text x="794.8" y="247.3" font-size="1.75" fill="#e0e3e7" text-anchor="start" opacity="0.72">CT-24-L</text><text x="811.0" y="247.3" font-size="1.75" fill="#e0e3e7" text-anchor="start" opacity="0.72">OC-CT24L</text><text x="833.2" y="247.3" font-size="1.75" fill="#e0e3e7" text-anchor="start" opacity="0.72">Conduit</text><text x="716.0" y="253.2" font-size="1.6" fill="#e0e3e7" text-anchor="start" opacity="0.9">Grand total</text><text x="716.0" y="255.4" font-size="1.6" fill="#e0e3e7" text-anchor="start" opacity="0.9">225</text><text x="729.4" y="255.4" font-size="1.6" fill="#e0e3e7" text-anchor="start" opacity="0.9">18</text><path d="M370.4 262.6A4.42 4.42 0 0 1 378.3 262.6A4.42 4.42 0 0 1 386.2 262.6A4.42 4.42 0 0 1 394.1 262.6A4.42 4.42 0 0 1 402.0 262.6A4.42 4.42 0 0 1 409.9 262.6A4.42 4.42 0 0 1 417.8 262.6A4.42 4.42 0 0 1 425.7 262.6A4.42 4.42 0 0 1 433.6 262.6A4.15 4.15 0 0 1 434.8 269.9A4.15 4.15 0 0 1 436.1 277.2A4.15 4.15 0 0 1 437.3 284.5A4.15 4.15 0 0 1 438.6 291.8A4.15 4.15 0 0 1 439.8 299.1A4.15 4.15 0 0 1 441.0 306.4A4.15 4.15 0 0 1 442.3 313.7A4.15 4.15 0 0 1 443.5 321.0A4.15 4.15 0 0 1 444.8 328.3A4.15 4.15 0 0 1 446.0 335.6A4.16 4.16 0 0 1 453.4 335.6A4.16 4.16 0 0 1 460.9 335.7A4.16 4.16 0 0 1 468.3 335.7A4.16 4.16 0 0 1 475.7 335.8A4.16 4.16 0 0 1 483.1 335.8A4.16 4.16 0 0 1 490.6 335.8A4.16 4.16 0 0 1 498.0 335.9A4.16 4.16 0 0 1 505.4 335.9A4.16 4.16 0 0 1 512.9 336.0A4.16 4.16 0 0 1 520.3 336.0A4.16 4.16 0 0 1 527.7 336.0A4.16 4.16 0 0 1 535.2 336.1A4.16 4.16 0 0 1 542.6 336.1A4.16 4.16 0 0 1 550.0 336.2A4.16 4.16 0 0 1 557.5 336.2A4.16 4.16 0 0 1 564.9 336.2A4.16 4.16 0 0 1 572.3 336.3A4.16 4.16 0 0 1 579.7 336.3A4.16 4.16 0 0 1 587.2 336.4A4.16 4.16 0 0 1 594.6 336.4A4.31 4.31 0 0 1 594.8 344.1A4.31 4.31 0 0 1 595.0 351.8A4.31 4.31 0 0 1 595.2 359.5A4.31 4.31 0 0 1 595.4 367.2A4.31 4.31 0 0 1 595.5 374.9A4.31 4.31 0 0 1 595.7 382.6A4.31 4.31 0 0 1 595.9 390.3A4.31 4.31 0 0 1 596.1 398.0A4.31 4.31 0 0 1 596.3 405.7A4.31 4.31 0 0 1 596.5 413.4A4.31 4.31 0 0 1 596.7 421.1A4.31 4.31 0 0 1 596.9 428.8A4.31 4.31 0 0 1 597.0 436.5A4.31 4.31 0 0 1 597.2 444.2A4.31 4.31 0 0 1 597.4 451.9A4.31 4.31 0 0 1 597.6 459.6A4.24 4.24 0 0 1 590.0 459.6A4.24 4.24 0 0 1 582.5 459.7A4.24 4.24 0 0 1 574.9 459.7A4.24 4.24 0 0 1 567.3 459.7A4.24 4.24 0 0 1 559.7 459.7A4.24 4.24 0 0 1 552.2 459.8A4.24 4.24 0 0 1 544.6 459.8A4.24 4.24 0 0 1 537.0 459.8A4.24 4.24 0 0 1 529.4 459.8A4.24 4.24 0 0 1 521.9 459.9A4.24 4.24 0 0 1 514.3 459.9A4.24 4.24 0 0 1 506.7 459.9A4.24 4.24 0 0 1 499.1 459.9A4.24 4.24 0 0 1 491.6 460.0A4.24 4.24 0 0 1 484.0 460.0A4.24 4.24 0 0 1 476.4 460.0A4.24 4.24 0 0 1 468.9 460.1A4.24 4.24 0 0 1 461.3 460.1A4.24 4.24 0 0 1 453.7 460.1A4.24 4.24 0 0 1 446.1 460.1A4.24 4.24 0 0 1 438.6 460.2A4.24 4.24 0 0 1 431.0 460.2A4.24 4.24 0 0 1 423.4 460.2A4.24 4.24 0 0 1 415.8 460.2A4.24 4.24 0 0 1 408.3 460.3A4.24 4.24 0 0 1 400.7 460.3A4.24 4.24 0 0 1 393.1 460.3A4.24 4.24 0 0 1 385.5 460.3A4.24 4.24 0 0 1 378.0 460.4A4.24 4.24 0 0 1 370.4 460.4A4.26 4.26 0 0 1 370.4 452.8A4.26 4.26 0 0 1 370.4 445.2A4.26 4.26 0 0 1 370.4 437.6A4.26 4.26 0 0 1 370.4 430.0A4.26 4.26 0 0 1 370.4 422.4A4.26 4.26 0 0 1 370.4 414.8A4.26 4.26 0 0 1 370.4 407.1A4.26 4.26 0 0 1 370.4 399.5A4.26 4.26 0 0 1 370.4 391.9A4.26 4.26 0 0 1 370.4 384.3A4.26 4.26 0 0 1 370.4 376.7A4.26 4.26 0 0 1 370.4 369.1A4.26 4.26 0 0 1 370.4 361.5A4.26 4.26 0 0 1 370.4 353.9A4.26 4.26 0 0 1 370.4 346.3A4.26 4.26 0 0 1 370.4 338.7A4.26 4.26 0 0 1 370.4 331.1A4.26 4.26 0 0 1 370.4 323.5A4.26 4.26 0 0 1 370.4 315.9A4.26 4.26 0 0 1 370.4 308.2A4.26 4.26 0 0 1 370.4 300.6A4.26 4.26 0 0 1 370.4 293.0A4.26 4.26 0 0 1 370.4 285.4A4.26 4.26 0 0 1 370.4 277.8A4.26 4.26 0 0 1 370.4 270.2A4.26 4.26 0 0 1 370.4 262.6" fill="none" stroke="#d6d9dd" stroke-width="0.5" opacity="0.9"/><path d="M357.6 430.2L630.6 430.2" stroke="#d6d9dd" stroke-width="0.55" opacity="0.95" stroke-dasharray="5 1 1 1"/><path d="M357.6 431.5L630.6 431.5" stroke="#d6d9dd" stroke-width="0.35" opacity="0.6" stroke-dasharray="2 1.2"/><path d="M406.9 304L379.6 430.2M412.3 304L388.4 430.2" stroke="#eceef0" stroke-width=".55" fill="none"/><path d="M406.9 304.0L411.4 308.9M412.3 304.0L405.8 308.9M406.9 304.0L412.3 304.0M405.8 308.9L410.5 313.7M411.4 308.9L404.8 313.7M405.8 308.9L411.4 308.9M404.8 313.7L409.5 318.6M410.5 313.7L403.8 318.6M404.8 313.7L410.5 313.7M403.8 318.6L408.6 323.4M409.5 318.6L402.7 323.4M403.8 318.6L409.5 318.6M402.7 323.4L407.7 328.3M408.6 323.4L401.6 328.3M402.7 323.4L408.6 323.4M401.6 328.3L406.8 333.1M407.7 328.3L400.6 333.1M401.6 328.3L407.7 328.3M400.6 333.1L405.9 338.0M406.8 333.1L399.6 338.0M400.6 333.1L406.8 333.1M399.6 338.0L404.9 342.8M405.9 338.0L398.5 342.8M399.6 338.0L405.9 338.0M398.5 342.8L404.0 347.7M404.9 342.8L397.4 347.7M398.5 342.8L404.9 342.8M397.4 347.7L403.1 352.5M404.0 347.7L396.4 352.5M397.4 347.7L404.0 347.7M396.4 352.5L402.2 357.4M403.1 352.5L395.4 357.4M396.4 352.5L403.1 352.5M395.4 357.4L401.3 362.2M402.2 357.4L394.3 362.2M395.4 357.4L402.2 357.4M394.3 362.2L400.4 367.1M401.3 362.2L393.2 367.1M394.3 362.2L401.3 362.2M393.2 367.1L399.4 372.0M400.4 367.1L392.2 372.0M393.2 367.1L400.4 367.1M392.2 372.0L398.5 376.8M399.4 372.0L391.1 376.8M392.2 372.0L399.4 372.0M391.1 376.8L397.6 381.7M398.5 376.8L390.1 381.7M391.1 376.8L398.5 376.8M390.1 381.7L396.7 386.5M397.6 381.7L389.1 386.5M390.1 381.7L397.6 381.7M389.1 386.5L395.8 391.4M396.7 386.5L388.0 391.4M389.1 386.5L396.7 386.5M388.0 391.4L394.8 396.2M395.8 391.4L386.9 396.2M388.0 391.4L395.8 391.4M386.9 396.2L393.9 401.1M394.8 396.2L385.9 401.1M386.9 396.2L394.8 396.2M385.9 401.1L393.0 405.9M393.9 401.1L384.9 405.9M385.9 401.1L393.9 401.1M384.9 405.9L392.1 410.8M393.0 405.9L383.8 410.8M384.9 405.9L393.0 405.9M383.8 410.8L391.2 415.6M392.1 410.8L382.8 415.6M383.8 410.8L392.1 410.8M382.8 415.6L390.2 420.5M391.2 415.6L381.7 420.5M382.8 415.6L391.2 415.6M381.7 420.5L389.3 425.3M390.2 420.5L380.7 425.3M381.7 420.5L390.2 420.5M380.7 425.3L388.4 430.2M389.3 425.3L379.6 430.2M380.7 425.3L389.3 425.3" stroke="#dfe2e6" stroke-width=".4" fill="none" opacity=".9"/><path d="M422.5 304L450.2 430.2M417.1 304L440.4 430.2" stroke="#eceef0" stroke-width=".55" fill="none"/><path d="M422.5 304.0L418.0 308.9M417.1 304.0L423.6 308.9M422.5 304.0L417.1 304.0M423.6 308.9L418.9 313.7M418.0 308.9L424.6 313.7M423.6 308.9L418.0 308.9M424.6 313.7L419.8 318.6M418.9 313.7L425.7 318.6M424.6 313.7L418.9 313.7M425.7 318.6L420.7 323.4M419.8 318.6L426.8 323.4M425.7 318.6L419.8 318.6M426.8 323.4L421.6 328.3M420.7 323.4L427.8 328.3M426.8 323.4L420.7 323.4M427.8 328.3L422.5 333.1M421.6 328.3L428.9 333.1M427.8 328.3L421.6 328.3M428.9 333.1L423.4 338.0M422.5 333.1L430.0 338.0M428.9 333.1L422.5 333.1M430.0 338.0L424.3 342.8M423.4 338.0L431.0 342.8M430.0 338.0L423.4 338.0M431.0 342.8L425.2 347.7M424.3 342.8L432.1 347.7M431.0 342.8L424.3 342.8M432.1 347.7L426.1 352.5M425.2 347.7L433.2 352.5M432.1 347.7L425.2 347.7M433.2 352.5L427.0 357.4M426.1 352.5L434.2 357.4M433.2 352.5L426.1 352.5M434.2 357.4L427.9 362.2M427.0 357.4L435.3 362.2M434.2 357.4L427.0 357.4M435.3 362.2L428.8 367.1M427.9 362.2L436.4 367.1M435.3 362.2L427.9 362.2M436.4 367.1L429.6 372.0M428.8 367.1L437.4 372.0M436.4 367.1L428.8 367.1M437.4 372.0L430.5 376.8M429.6 372.0L438.5 376.8M437.4 372.0L429.6 372.0M438.5 376.8L431.4 381.7M430.5 376.8L439.5 381.7M438.5 376.8L430.5 376.8M439.5 381.7L432.3 386.5M431.4 381.7L440.6 386.5M439.5 381.7L431.4 381.7M440.6 386.5L433.2 391.4M432.3 386.5L441.7 391.4M440.6 386.5L432.3 386.5M441.7 391.4L434.1 396.2M433.2 391.4L442.7 396.2M441.7 391.4L433.2 391.4M442.7 396.2L435.0 401.1M434.1 396.2L443.8 401.1M442.7 396.2L434.1 396.2M443.8 401.1L435.9 405.9M435.0 401.1L444.9 405.9M443.8 401.1L435.0 401.1M444.9 405.9L436.8 410.8M435.9 405.9L445.9 410.8M444.9 405.9L435.9 405.9M445.9 410.8L437.7 415.6M436.8 410.8L447.0 415.6M445.9 410.8L436.8 410.8M447.0 415.6L438.6 420.5M437.7 415.6L448.1 420.5M447.0 415.6L437.7 415.6M448.1 420.5L439.5 425.3M438.6 420.5L449.1 425.3M448.1 420.5L438.6 420.5M449.1 425.3L440.4 430.2M439.5 425.3L450.2 430.2M449.1 425.3L439.5 425.3" stroke="#dfe2e6" stroke-width=".4" fill="none" opacity=".9"/><rect x="413" y="269.4" width="3.4" height="30.4" fill="#5d6470" stroke="#eef0f2" stroke-width=".5"/><path d="M412.2 269.4L417.2 269.4" stroke="#fff" stroke-width="0.8"/><path d="M407.4 304a7.4 5.4 0 0 1 14.8 0z" fill="#4a515d" stroke="#eef0f2" stroke-width=".5"/><path d="M406.6 304.2L422.8 304.2" stroke="#f4f5f6" stroke-width="0.8"/><path d="M414.7 304c0 20 1.6 32 5 46s6.400 26 8.600 35.600" stroke="#eef0f2" stroke-width=".7" fill="none"/><path d="M414.7 304.0L414.7 352.0" stroke="#d6d9dd" stroke-width="0.5" opacity="0.8" stroke-dasharray="2 1"/><rect x="379.0" y="426.8" width="10.6" height="3.4" fill="#4a515d" stroke="#d6d9dd" stroke-width="0.5"/><rect x="440.0" y="426.8" width="10.6" height="3.4" fill="#4a515d" stroke="#d6d9dd" stroke-width="0.5"/><circle cx="386.6" cy="292.5" r="3.1" fill="#222933" stroke="#d6d9dd" stroke-width=".45"/><text x="386.6" y="293.7" font-size="3.3480000000000003" fill="#e6e8eb" text-anchor="middle">17</text><circle cx="393.3" cy="292.5" r="3.1" fill="#222933" stroke="#d6d9dd" stroke-width=".45"/><text x="393.3" y="293.7" font-size="3.3480000000000003" fill="#e6e8eb" text-anchor="middle">16</text><circle cx="399.8" cy="292.5" r="3.1" fill="#222933" stroke="#d6d9dd" stroke-width=".45"/><text x="399.8" y="293.9" font-size="3.8440000000000003" fill="#e6e8eb" text-anchor="middle">2</text><path d="M386.6 295v9l19 21M393.300 295v7l11 12M399.800 295v5l7 7.600" stroke="#d6d9dd" stroke-width=".4" fill="none"/><circle cx="402.2" cy="372.3" r="3" fill="#222933" stroke="#d6d9dd" stroke-width=".45"/><text x="402.2" y="373.6" font-size="3.72" fill="#e6e8eb" text-anchor="middle">6</text><circle cx="408.5" cy="372.3" r="3" fill="#222933" stroke="#d6d9dd" stroke-width=".45"/><text x="408.5" y="373.5" font-size="3.2400000000000007" fill="#e6e8eb" text-anchor="middle">19</text><circle cx="415.3" cy="372.3" r="3" fill="#222933" stroke="#d6d9dd" stroke-width=".45"/><text x="415.3" y="373.5" font-size="3.2400000000000007" fill="#e6e8eb" text-anchor="middle">20</text><circle cx="421.4" cy="372.3" r="3" fill="#222933" stroke="#d6d9dd" stroke-width=".45"/><text x="421.4" y="373.5" font-size="3.2400000000000007" fill="#e6e8eb" text-anchor="middle">18</text><path d="M402.200 374.600v9M408.500 374.600v10M415.300 374.600v10.600M421.400 374.600v10.600" stroke="#d6d9dd" stroke-width=".4" fill="none"/><circle cx="438.3" cy="351.4" r="3.2" fill="#222933" stroke="#d6d9dd" stroke-width=".45"/><text x="438.3" y="352.8" font-size="3.968000000000001" fill="#e6e8eb" text-anchor="middle">5</text><circle cx="441.5" cy="351.4" r="3.2" fill="#222933" stroke="#d6d9dd" stroke-width=".45"/><text x="441.5" y="352.8" font-size="3.968000000000001" fill="#e6e8eb" text-anchor="middle">8</text><circle cx="444.6" cy="351.4" r="3.2" fill="#222933" stroke="#d6d9dd" stroke-width=".45"/><text x="444.6" y="352.8" font-size="3.968000000000001" fill="#e6e8eb" text-anchor="middle">3</text><circle cx="460.8" cy="351.4" r="3.2" fill="#222933" stroke="#d6d9dd" stroke-width=".45"/><text x="460.8" y="352.6" font-size="3.4560000000000004" fill="#e6e8eb" text-anchor="middle">10</text><circle cx="469.9" cy="351.4" r="3.2" fill="#222933" stroke="#d6d9dd" stroke-width=".45"/><text x="469.9" y="352.6" font-size="3.4560000000000004" fill="#e6e8eb" text-anchor="middle">10</text><circle cx="484.0" cy="351.4" r="3.2" fill="#222933" stroke="#d6d9dd" stroke-width=".45"/><text x="484.0" y="352.8" font-size="3.968000000000001" fill="#e6e8eb" text-anchor="middle">7</text><circle cx="505.2" cy="351.4" r="3.2" fill="#222933" stroke="#d6d9dd" stroke-width=".45"/><text x="505.2" y="352.6" font-size="3.4560000000000004" fill="#e6e8eb" text-anchor="middle">10</text><circle cx="522.6" cy="351.4" r="3.2" fill="#222933" stroke="#d6d9dd" stroke-width=".45"/><text x="522.6" y="352.8" font-size="3.968000000000001" fill="#e6e8eb" text-anchor="middle">5</text><path d="M438.300 353.800v14l-10 17M444.600 353.800v12l-14 19M460.800 353.800v32M469.900 353.800v32M484 353.800v27M505.200 353.800v30M522.600 353.800v44" stroke="#d6d9dd" stroke-width=".4" fill="none"/><path d="M401.7 386.2L401.7 430.2" stroke="#aeb4be" stroke-width="1.2"/><rect x="400.6" y="390.8" width="2.2" height="9" fill="#e8eaed"/><rect x="399.2" y="404.2" width="6.6" height="3.6" fill="#5d6572" stroke="#d6d9dd" stroke-width="0.5"/><circle cx="401.7" cy="387" r="1.1" fill="none" stroke="#d6d9dd" stroke-width=".4"/><path d="M384.8 379.600c1 1.600 3 1.800 4.600 1.200M444.600 379.600c-1 1.600-3 1.800-4.600 1.200" stroke="#e6e8eb" stroke-width=".5" fill="none"/><path d="M401.7 386.3L428.0 385.6" stroke="#f1f2f4" stroke-width="0.8"/><path d="M428.0 386.3L629.5 386.3" stroke="#e6e8eb" stroke-width="0.7"/><path d="M428.0 385.0L478.0 385.0" stroke="#d6d9dd" stroke-width="0.4" opacity="0.7"/><path d="M472.3 386.3L481.7 401" stroke="#f1f2f4" stroke-width="2.800" stroke-linecap="round"/><path d="M472.3 386.3L481.7 401" stroke="#8e949e" stroke-width="1.600" stroke-linecap="round"/><path d="M495.5 386.3L486.1 401" stroke="#f1f2f4" stroke-width="2.800" stroke-linecap="round"/><path d="M495.5 386.3L486.1 401" stroke="#8e949e" stroke-width="1.600" stroke-linecap="round"/><path d="M472.3 386.300L483.9 381.200L495.5 386.300" stroke="#f1f2f4" stroke-width=".6" fill="none"/><circle cx="483.9" cy="381.400" r="1" fill="#e6e8eb"/><rect x="482.6" y="403.600" width="2.600" height="26.6" fill="#6a717c" stroke="#e6e8eb" stroke-width=".4"/><rect x="481.3" y="400.800" width="5.200" height="3" fill="#e6e8eb"/><path d="M549.0 386.3L558.4 401" stroke="#f1f2f4" stroke-width="2.800" stroke-linecap="round"/><path d="M549.0 386.3L558.4 401" stroke="#8e949e" stroke-width="1.600" stroke-linecap="round"/><path d="M572.2 386.3L562.8 401" stroke="#f1f2f4" stroke-width="2.800" stroke-linecap="round"/><path d="M572.2 386.3L562.8 401" stroke="#8e949e" stroke-width="1.600" stroke-linecap="round"/><path d="M549.0 386.300L560.6 381.200L572.2 386.300" stroke="#f1f2f4" stroke-width=".6" fill="none"/><circle cx="560.6" cy="381.400" r="1" fill="#e6e8eb"/><rect x="559.3" y="403.600" width="2.600" height="26.6" fill="#6a717c" stroke="#e6e8eb" stroke-width=".4"/><rect x="558.0" y="400.800" width="5.200" height="3" fill="#e6e8eb"/><rect x="514.3" y="408.8" width="16.5" height="21.4" fill="none" stroke="#f1f2f4" stroke-width="0.6"/><path d="M514.300 408.800l16.500 10.700-16.500 10.700M530.800 408.800l-16.500 10.700 16.500 10.700M514.300 419.500h16.500" stroke="#e6e8eb" stroke-width=".5" fill="none"/><rect x="531.300" y="405.500" width="7.200" height="16.200" rx="1" fill="#2c333e" stroke="#e6e8eb" stroke-width=".5"/><rect x="512" y="405.400" width="19.300" height="3.400" fill="#767d89" stroke="#f1f2f4" stroke-width=".5"/><path d="M517.7 405L513.2 384.600" stroke="#f1f2f4" stroke-width="2.200" stroke-linecap="round"/><path d="M517.7 405L513.2 384.600" stroke="#7d848f" stroke-width="1.100" stroke-linecap="round"/><path d="M527.9 405L531.3 384.600" stroke="#f1f2f4" stroke-width="2.200" stroke-linecap="round"/><path d="M527.9 405L531.3 384.600" stroke="#7d848f" stroke-width="1.100" stroke-linecap="round"/><path d="M495.500 386.300l8 .4 7.500-2.700 2.200.6M549 386.300l-8 .4-7.500-2.700-2.200.6" stroke="#f1f2f4" stroke-width=".9" fill="none"/><path d="M522.4 398.0L522.4 408.0" stroke="#d6d9dd" stroke-width="0.5" opacity="0.8"/><path d="M572.0 386.3L576.0 385.0" stroke="#f1f2f4" stroke-width="0.9"/><rect x="574.2" y="431.4" width="55.3" height="4.6" fill="none" stroke="#d6d9dd" stroke-width="0.4" opacity="0.85"/><rect x="611.6" y="386.3" width="2.0" height="58.7" fill="none" stroke="#d6d9dd" stroke-width="0.4" opacity="0.9"/><path d="M612.6 388.0L612.6 404.0" stroke="#aeb4be" stroke-width="1.4" stroke-dasharray=".5 .5"/><text x="627.6" y="424.0" font-size="1.6" fill="#e0e3e7" text-anchor="start" opacity="0.85">Level 1</text><text x="628.6" y="431.4" font-size="1.6" fill="#e0e3e7" text-anchor="start" opacity="0.85">T.O.C.</text><path d="M627.0 424.8L641.0 424.8" stroke="#d6d9dd" stroke-width="0.35" opacity="0.8"/><path d="M627.0 432.0L641.0 432.0" stroke="#d6d9dd" stroke-width="0.35" opacity="0.8"/><circle cx="643.700" cy="424.600" r="1.300" fill="none" stroke="#d6d9dd" stroke-width=".4"/><path d="M643.700 423.300a1.300 1.300 0 0 1 1.300 1.300h-1.300z" fill="#e6e8eb"/><circle cx="643.700" cy="431.400" r="1.300" fill="none" stroke="#d6d9dd" stroke-width=".4"/><path d="M643.700 431.400h1.300a1.300 1.300 0 0 1-1.300 1.300z" fill="#4f9be8"/><path d="M382.6 431.2L382.6 456.0" stroke="#d6d9dd" stroke-width="0.35" opacity="0.85"/><path d="M401.7 431.2L401.7 456.0" stroke="#d6d9dd" stroke-width="0.35" opacity="0.85"/><path d="M414.8 431.2L414.8 456.0" stroke="#d6d9dd" stroke-width="0.35" opacity="0.85"/><path d="M446.8 431.2L446.8 456.0" stroke="#d6d9dd" stroke-width="0.35" opacity="0.85"/><path d="M483.9 431.2L483.9 447.0" stroke="#d6d9dd" stroke-width="0.4" opacity="0.9"/><path d="M522.4 431.2L522.4 447.0" stroke="#d6d9dd" stroke-width="0.4" opacity="0.9"/><path d="M560.6 431.2L560.6 447.0" stroke="#d6d9dd" stroke-width="0.4" opacity="0.9"/><path d="M392.0 432.2L392.0 439.2" stroke="#d6d9dd" stroke-width="0.45" opacity="0.8"/><path d="M428.0 432.2L428.0 439.2" stroke="#d6d9dd" stroke-width="0.45" opacity="0.8"/><path d="M452.0 432.2L452.0 439.2" stroke="#d6d9dd" stroke-width="0.45" opacity="0.8"/><path d="M466.0 432.2L466.0 439.2" stroke="#d6d9dd" stroke-width="0.45" opacity="0.8"/><path d="M478.9 432.2L478.9 439.2" stroke="#d6d9dd" stroke-width="0.45" opacity="0.8"/><path d="M488.8 432.2L488.8 439.2" stroke="#d6d9dd" stroke-width="0.45" opacity="0.8"/><path d="M506.9 432.2L506.9 439.2" stroke="#d6d9dd" stroke-width="0.45" opacity="0.8"/><path d="M537.6 432.2L537.6 439.2" stroke="#d6d9dd" stroke-width="0.45" opacity="0.8"/><path d="M555.4 432.2L555.4 439.2" stroke="#d6d9dd" stroke-width="0.45" opacity="0.8"/><path d="M565.6 432.2L565.6 439.2" stroke="#d6d9dd" stroke-width="0.45" opacity="0.8"/><path d="M401.7 445.6L613.0 445.6" stroke="#d6d9dd" stroke-width="0.45" opacity="0.95"/><path d="M382.6 454.6L446.8 454.6" stroke="#d6d9dd" stroke-width="0.45" opacity="0.95"/><text x="420.0" y="444.8" font-size="1.6" fill="#e0e3e7" text-anchor="middle" opacity="0.9">7'-6"</text><text x="461.0" y="444.8" font-size="1.6" fill="#e0e3e7" text-anchor="middle" opacity="0.9">20'-0"</text><text x="503.0" y="444.8" font-size="1.6" fill="#e0e3e7" text-anchor="middle" opacity="0.9">21'-6"</text><text x="541.0" y="444.8" font-size="1.6" fill="#e0e3e7" text-anchor="middle" opacity="0.9">20'-0"</text><text x="586.0" y="444.8" font-size="1.6" fill="#e0e3e7" text-anchor="middle" opacity="0.9">20'-0"</text><text x="398.6" y="453.8" font-size="1.6" fill="#e0e3e7" text-anchor="middle" opacity="0.9">20'-0"</text><text x="430.6" y="453.8" font-size="1.6" fill="#e0e3e7" text-anchor="middle" opacity="0.9">20'-0"</text><text x="411.6" y="419.6" font-size="1.3" fill="#e0e3e7" text-anchor="start" opacity="0.7">T.O.S.</text><path d="M414.8 420.0L414.8 430.2" stroke="#d6d9dd" stroke-width="0.3" opacity="0.7"/><path d="M357.6 468.0L647.2 468.0" stroke="#d6d9dd" stroke-width="0.55" opacity="0.9"/><circle cx="358.800" cy="466.700" r="1.100" fill="none" stroke="#d6d9dd" stroke-width=".35"/><text x="360.6" y="467.0" font-size="1.7" fill="#e0e3e7" text-anchor="start" opacity="0.9">Bay 3 Future Expansion</text><text x="360.6" y="469.6" font-size="1.4" fill="#e0e3e7" text-anchor="start" opacity="0.8">1/8" = 1'-0"</text><rect x="545.9" y="505.7" width="63.7" height="21.6" fill="none" stroke="#c9cdd3" stroke-width="0.5"/><path d="M545.9 512.0L609.6 512.0" stroke="#c9cdd3" stroke-width="0.5"/><text x="577.8" y="510.2" font-size="3.04" fill="#f1f2f4" text-anchor="middle" font-weight="bold">BIM Substation Designer</text><rect x="549.900" y="515.700" width="20" height="9" fill="#0c0e12"/><text x="559.9" y="522.6" font-size="7.4" fill="#f4f5f6" text-anchor="middle" font-weight="bold">sbs</text><text x="571.6" y="521.4" font-size="1.7" fill="#b8bec7" text-anchor="start">Spatial Business Systems™ ®</text><path d="M571.0 523.0L606.0 523.0" stroke="#3f74c9" stroke-width="0.4"/><rect x="609.6" y="489.1" width="77.1" height="38.2" fill="none" stroke="#c9cdd3" stroke-width="0.5"/><text x="611.0" y="491.6" font-size="1.5" fill="#e0e3e7" text-anchor="start" opacity="0.85">Notes</text><rect x="686.7" y="489.1" width="100.6" height="38.2" fill="none" stroke="#c9cdd3" stroke-width="0.5"/><path d="M699.6 489.1L699.6 527.3" stroke="#c9cdd3" stroke-width="0.45"/><path d="M772.3 489.1L772.3 527.3" stroke="#c9cdd3" stroke-width="0.45"/><path d="M686.7 493.7L787.3 493.7" stroke="#c9cdd3" stroke-width="0.4" opacity="0.9"/><path d="M686.7 497.1L787.3 497.1" stroke="#c9cdd3" stroke-width="0.4" opacity="0.9"/><path d="M686.7 500.4L787.3 500.4" stroke="#c9cdd3" stroke-width="0.4" opacity="0.9"/><path d="M686.7 503.8L787.3 503.8" stroke="#c9cdd3" stroke-width="0.4" opacity="0.9"/><path d="M686.7 507.1L787.3 507.1" stroke="#c9cdd3" stroke-width="0.4" opacity="0.9"/><path d="M686.7 510.5L787.3 510.5" stroke="#c9cdd3" stroke-width="0.4" opacity="0.9"/><path d="M686.7 513.9L787.3 513.9" stroke="#c9cdd3" stroke-width="0.4" opacity="0.9"/><path d="M686.7 517.2L787.3 517.2" stroke="#c9cdd3" stroke-width="0.4" opacity="0.9"/><path d="M686.7 520.6L787.3 520.6" stroke="#c9cdd3" stroke-width="0.4" opacity="0.9"/><path d="M686.7 523.9L787.3 523.9" stroke="#c9cdd3" stroke-width="0.4" opacity="0.9"/><text x="692.2" y="492.7" font-size="2.96" fill="#f1f2f4" text-anchor="middle">No.</text><text x="734.8" y="492.7" font-size="3.32" fill="#f1f2f4" text-anchor="middle">Description</text><text x="779.0" y="492.7" font-size="3.17" fill="#f1f2f4" text-anchor="middle">Date</text><text x="700.4" y="496.4" font-size="1.4" fill="#e0e3e7" text-anchor="start" opacity="0.8">Rev A</text><text x="773.0" y="496.4" font-size="1.4" fill="#e0e3e7" text-anchor="start" opacity="0.8">Date</text><rect x="758.2" y="460.8" width="29.1" height="28.3" fill="none" stroke="#c9cdd3" stroke-width="0.5"/><rect x="760" y="462.600" width="25.600" height="25.500" fill="#fbfbfb"/><circle cx="772.800" cy="475.400" r="11.400" fill="none" stroke="#6d6d6d" stroke-width=".7"/><circle cx="772.800" cy="475.400" r="10" fill="none" stroke="#8a8a8a" stroke-width=".5" stroke-dasharray=".8 .5"/><circle cx="772.800" cy="475.400" r="7.800" fill="none" stroke="#8a8a8a" stroke-width=".4"/><text x="772.8" y="474.8" font-size="1.5" fill="#666" text-anchor="middle">YOUR STATE</text><text x="772.8" y="477.0" font-size="1.4" fill="#777" text-anchor="middle">SEAL REQUIRED</text><path d="M765.400 481l1.400 1.200M780.200 481l-1.400 1.200" stroke="#555" stroke-width=".6"/><rect x="786.8" y="454.8" width="67.4" height="72.0" fill="none" stroke="#c9cdd3" stroke-width="0.6"/><rect x="788.5" y="456.5" width="63.9" height="68.5" fill="none" stroke="#c9cdd3" stroke-width="0.5"/><path d="M788.5 474.7L852.4 474.7" stroke="#c9cdd3" stroke-width="0.45"/><path d="M788.5 476.1L852.4 476.1" stroke="#c9cdd3" stroke-width="0.45"/><path d="M788.5 487.7L852.4 487.7" stroke="#c9cdd3" stroke-width="0.45"/><path d="M788.5 489.0L852.4 489.0" stroke="#c9cdd3" stroke-width="0.45"/><path d="M788.5 493.0L852.4 493.0" stroke="#c9cdd3" stroke-width="0.45"/><path d="M788.5 494.2L852.4 494.2" stroke="#c9cdd3" stroke-width="0.45"/><path d="M788.5 498.2L852.4 498.2" stroke="#c9cdd3" stroke-width="0.45"/><path d="M788.5 499.2L852.4 499.2" stroke="#c9cdd3" stroke-width="0.45"/><path d="M788.5 502.5L852.4 502.5" stroke="#c9cdd3" stroke-width="0.45"/><path d="M788.5 503.7L852.4 503.7" stroke="#c9cdd3" stroke-width="0.45"/><path d="M788.5 507.2L852.4 507.2" stroke="#c9cdd3" stroke-width="0.45"/><path d="M788.5 520.2L852.4 520.2" stroke="#c9cdd3" stroke-width="0.45"/><text x="820.4" y="462.4" font-size="3.91" fill="#f1f2f4" text-anchor="middle" font-weight="bold">Spatial Business Systems</text><text x="820.4" y="471.4" font-size="3.96" fill="#f1f2f4" text-anchor="middle" font-weight="bold">BSD Demo Station</text><text x="820.4" y="483.4" font-size="4.09" fill="#f1f2f4" text-anchor="middle" font-weight="bold">Future Expansion</text><text x="789.2" y="491.2" font-size="1.9" fill="#e0e3e7" text-anchor="start" opacity="0.85">Project Number</text><text x="851.8" y="492.1" font-size="3.1" fill="#e6e8eb" text-anchor="end">Project Number</text><text x="789.2" y="496.4" font-size="1.9" fill="#e0e3e7" text-anchor="start" opacity="0.85">Date</text><text x="851.8" y="497.3" font-size="3.1" fill="#e6e8eb" text-anchor="end">Issue Date</text><text x="789.2" y="501.0" font-size="1.9" fill="#e0e3e7" text-anchor="start" opacity="0.85">Drawn By</text><text x="851.8" y="501.9" font-size="3.1" fill="#e6e8eb" text-anchor="end">D.Luck</text><text x="789.2" y="505.6" font-size="1.9" fill="#e0e3e7" text-anchor="start" opacity="0.85">Checked By</text><text x="851.8" y="506.5" font-size="3.1" fill="#e6e8eb" text-anchor="end">Checker</text><text x="820.1" y="518.2" font-size="10.6" fill="#f4f5f6" text-anchor="middle">A108</text><text x="789.4" y="523.4" font-size="1.5" fill="#e0e3e7" text-anchor="start" opacity="0.85">Scale</text><rect x="842.800" y="79.300" width="12.400" height="43.400" fill="#6a6f77" opacity=".92"/><circle cx="848" cy="89.600" r="2.600" fill="none" stroke="#dfe2e6" stroke-width=".8"/><rect x="847" y="88.600" width="2" height="2" fill="none" stroke="#dfe2e6" stroke-width=".5"/><path d="M849.400 93.400c1.600-1.800 3.600-1 3.800.4z" fill="#3d78c9"/><path d="M845.600 103.600h4.200l-1 4h-3.200z" fill="#7fc05a"/><rect x="849" y="106.600" width="1.600" height="1.600" fill="#e6e8eb"/><path d="M848.400 98.200h1.600M848.400 114.400h1.600" stroke="#9da3ad" stroke-width=".4"/><path d="M851.800 80.400l1.400 1.400M853.200 80.400l-1.400 1.400" stroke="#dfe2e6" stroke-width=".4"/><rect x="851.600" y="119" width="1.800" height="2" fill="none" stroke="#dfe2e6" stroke-width=".4"/></svg></div>
<svg class="b" style="left:0.00px;top:0.00px;" width="1024" height="576" viewBox="0 0 1024 576"><path d="M148.60000000000002 74.0l2.2-2.4 2.2 2.4v2.6h-4.4z" fill="#aeb4be"/><rect x="150.20000000000002" y="74.6" width="1.2" height="2" fill="#6d7583"/><path d="M208.4 74.0l2.2-2.4 2.2 2.4v2.6h-4.4z" fill="#aeb4be"/><rect x="210.0" y="74.6" width="1.2" height="2" fill="#6d7583"/><path d="M259.6 74.0l2.2-2.4 2.2 2.4v2.6h-4.4z" fill="#aeb4be"/><rect x="261.2" y="74.6" width="1.2" height="2" fill="#6d7583"/><circle cx="317.8" cy="73.6" r="1.6" fill="none" stroke="#aeb4be" stroke-width=".5"/><path d="M317.8 75.2v1.6l1.6-1" stroke="#aeb4be" stroke-width=".5" fill="none"/><rect x="373" y="71.6" width="4.6" height="4.6" fill="#aeb4be"/><path d="M373 73.2h4.6M373 74.6h4.6M374.6 71.6v4.6" stroke="#59616f" stroke-width=".4"/><path d="M436.4 71.8h3l1.4 1.4v3.2h-4.4z" fill="#aeb4be"/><path d="M530.4 71.8h3l1.4 1.4v3.2h-4.4z" fill="#f0f1f3"/><path d="M598 72.2l3 3M601 72.2l-3 3" stroke="#e6e8eb" stroke-width=".6"/><path d="M857.400 72h3.200" stroke="#d5d8dd" stroke-width=".5"/><path d="M857.600 73.200l1.400 1.500 1.400-1.500z" fill="#d5d8dd"/><path d="M857.200 82.600l1.800-1.700 1.800 1.700M857.400 555l1.600 1.600 1.600-1.600" stroke="#d5d8dd" stroke-width=".6" fill="none"/><path d="M856.400 85.200h5.600" stroke="#3f4857" stroke-width=".4"/><rect x="857.4" y="314" width="2.6" height="8.6" rx="1.3" fill="#8e9fbf"/><rect x="511.4" y="560.6" width="9.4" height="2.4" rx="1.2" fill="#8e96a4"/><path d="M852.6 560.4l1.4 1.5-1.4 1.5" stroke="#aeb4be" stroke-width=".5" fill="none"/><rect x="148.600" y="560.800" width="1.700" height="2.800" rx=".5" fill="#dfe2e6"/><rect x="151.300" y="560.800" width="1.700" height="2.800" rx=".5" fill="#dfe2e6"/><path d="M150 561.800h1.600" stroke="#dfe2e6" stroke-width=".7"/><circle cx="161.100" cy="561.300" r="1.600" fill="#6ed8f0"/><rect x="160.400" y="563" width="1.400" height="1.400" fill="#e6e8eb"/><circle cx="169.800" cy="561" r="1.200" fill="#5aa7f0"/><circle cx="172.200" cy="560.600" r="1.100" fill="#f0a05a"/><rect x="171.200" y="561.600" width="2.200" height="2.600" fill="#e0453c"/><rect x="170.200" y="562" width="1" height="1.800" fill="#4fb35a"/><path d="M180.300 560.500l-1.300 1.600 1.300 1.600" stroke="#c9cdd3" stroke-width=".55" fill="none"/></svg>
<div class="b" style="left:862.80px;top:70.00px;width:2.60px;height:497.00px;background:#3b4453;"></div>
<div class="b" style="left:864.40px;top:70.00px;width:159.60px;height:6.40px;background:#222933;"></div>
<span class="t " style="left:865.20px;top:71px;font-size:4.7px;line-height:5px;color:#e6e8eb;letter-spacing:-0.032px;">Learning Panel</span>
<svg class="b" style="left:0.00px;top:0.00px;" width="1024" height="100" viewBox="0 0 1024 100"><path d="M1019.6 71.6l3.6 3.6M1023.2 71.6l-3.6 3.6" stroke="#e6e8eb" stroke-width=".8"/></svg>
<div class="b" style="left:864.90px;top:76.40px;width:159.10px;height:490.60px;background:#ffffff;"></div>
<span class="t " style="left:868.80px;top:81px;font-size:6.3px;line-height:7px;color:#1b1b1b;font-weight:bold;letter-spacing:-0.489px;">Learning Panel</span>
<div class="b" style="left:982.40px;top:81.60px;width:12.20px;height:5.30px;background:#cfcfcf;border-radius:2.7px;"></div>
<div class="b" style="left:983.00px;top:82.20px;width:4.20px;height:4.10px;background:#ffffff;border-radius:2.1px;"></div>
<span class="t " style="left:998.00px;top:82px;font-size:4.8px;line-height:5px;color:#333;letter-spacing:0.006px;">Interactive</span>
<span class="t " style="left:868.80px;top:93px;font-size:4.8px;line-height:5px;color:#8b8b8b;letter-spacing:-0.026px;">The Learning Panel gives you detailed, step-by-step guidance while</span>
<span class="t " style="left:868.80px;top:100px;font-size:4.8px;line-height:5px;color:#8b8b8b;">you work.</span>
<div class="b" style="left:868.80px;top:108.90px;width:151.00px;height:11.70px;background:#ffffff;border:.7px solid #e2e2e2;"></div>
<svg class="b" style="left:0.00px;top:0.00px;" width="1024" height="130" viewBox="0 0 1024 130"><circle cx="874.8" cy="114.2" r="1.8" fill="none" stroke="#9a9a9a" stroke-width=".6"/><path d="M876.2 115.6l1.8 1.8" stroke="#9a9a9a" stroke-width=".6"/><path d="M882.2 112.4v4.8" stroke="#555" stroke-width=".35"/></svg>
<span class="t " style="left:882.80px;top:113px;font-size:4.8px;line-height:5px;color:#a8a8a8;letter-spacing:-0.202px;">Search</span>
<div class="b" style="left:864.90px;top:125.00px;width:159.10px;height:9.00px;background:#cbcbcb;"></div>
<div class="b" style="left:866.00px;top:126.00px;width:15.60px;height:8.00px;background:#ffffff;"></div>
<span class="t " style="left:867.20px;top:128px;font-size:4.8px;line-height:5px;color:#222;">Home</span>
<span class="t " style="left:883.20px;top:128px;font-size:4.8px;line-height:5px;color:#222;letter-spacing:-0.121px;">Guidance</span>
<div class="b" style="left:1016.80px;top:133.40px;width:7.20px;height:433.60px;background:#f1f1f1;"></div>
<div class="b" style="left:1016.80px;top:141.20px;width:7.20px;height:366.60px;background:#c6c6c6;"></div>
<svg class="b" style="left:0.00px;top:0.00px;" width="1024" height="576" viewBox="0 0 1024 576"><path d="M1019 138.2l1.5-1.5 1.5 1.5" stroke="#8d8d8d" stroke-width=".6" fill="none"/><path d="M1019 560.4l1.5 1.5 1.5-1.5" stroke="#8d8d8d" stroke-width=".6" fill="none"/></svg>
<div class="b" style="left:864.90px;top:133.40px;width:151.90px;height:7.80px;background:#e8e8e8;"></div>
<span class="t " style="left:866.80px;top:135px;font-size:4.8px;line-height:5px;color:#1f1f1f;font-weight:bold;letter-spacing:-0.195px;">Last Viewed</span>
<svg class="b" style="left:0.00px;top:0.00px;" width="1024" height="576" viewBox="0 0 1024 576"><path d="M1010.4 138.0l1.5-1.5 1.5 1.5" stroke="#5d5d5d" stroke-width=".6" fill="none"/></svg>
<div class="b" style="left:864.90px;top:217.40px;width:151.90px;height:7.50px;background:#e8e8e8;"></div>
<span class="t " style="left:866.80px;top:219px;font-size:4.8px;line-height:5px;color:#1f1f1f;font-weight:bold;letter-spacing:-0.349px;">The Basics</span>
<svg class="b" style="left:0.00px;top:0.00px;" width="1024" height="576" viewBox="0 0 1024 576"><path d="M1010.4 221.85l1.5-1.5 1.5 1.5" stroke="#5d5d5d" stroke-width=".6" fill="none"/></svg>
<span class="t " style="left:890.90px;top:145px;font-size:4.8px;line-height:5px;color:#1d1d1d;font-weight:bold;letter-spacing:-0.143px;">Pick Fittings to Add Bus</span>
<span class="t " style="left:890.90px;top:153px;font-size:4.6px;line-height:5px;color:#9c9c9c;letter-spacing:-0.175px;">You can add a bus to your design by selecting the appropriate</span>
<span class="t " style="left:890.90px;top:159px;font-size:4.6px;line-height:5px;color:#9c9c9c;">fittings.</span>
<span class="t " style="left:890.90px;top:170px;font-size:4.8px;line-height:5px;color:#1d1d1d;font-weight:bold;letter-spacing:-0.122px;">Add Equipment</span>
<span class="t " style="left:890.90px;top:178px;font-size:4.6px;line-height:5px;color:#9c9c9c;letter-spacing:-0.210px;">Learn how to add an equipment from the catalog to your design.</span>
<span class="t " style="left:890.90px;top:195px;font-size:4.8px;line-height:5px;color:#1d1d1d;font-weight:bold;letter-spacing:-0.124px;">Pick Fittings to Add Cable</span>
<span class="t " style="left:890.90px;top:202px;font-size:4.6px;line-height:5px;color:#9c9c9c;letter-spacing:-0.227px;">You can add a cable to your design by selecting the appropriate</span>
<span class="t " style="left:890.90px;top:209px;font-size:4.6px;line-height:5px;color:#9c9c9c;">fittings.</span>
<span class="t " style="left:890.90px;top:228px;font-size:4.8px;line-height:5px;color:#1d1d1d;font-weight:bold;letter-spacing:-0.581px;">Guidance</span>
<span class="t " style="left:890.90px;top:253px;font-size:4.8px;line-height:5px;color:#1d1d1d;font-weight:bold;letter-spacing:-0.122px;">Add Equipment</span>
<span class="t " style="left:890.90px;top:261px;font-size:4.6px;line-height:5px;color:#9c9c9c;letter-spacing:-0.210px;">Learn how to add an equipment from the catalog to your design.</span>
<div class="b" style="left:864.90px;top:274.90px;width:151.90px;height:24.50px;background:#e5f1fb;"></div>
<span class="t " style="left:890.90px;top:278px;font-size:4.8px;line-height:5px;color:#1d1d1d;font-weight:bold;letter-spacing:-0.148px;">Creating a Bus A-Frame</span>
<span class="t " style="left:890.90px;top:303px;font-size:4.8px;line-height:5px;color:#1d1d1d;font-weight:bold;letter-spacing:-0.154px;">Convert BIM Connectors to BSD Connectors</span>
<span class="t " style="left:890.90px;top:327px;font-size:4.8px;line-height:5px;color:#1d1d1d;font-weight:bold;letter-spacing:-0.153px;">Copying Substation Data to SBIF</span>
<span class="t " style="left:890.90px;top:352px;font-size:4.8px;line-height:5px;color:#1d1d1d;font-weight:bold;letter-spacing:-0.159px;">Editing BSD Connector Properties</span>
<span class="t " style="left:890.90px;top:377px;font-size:4.8px;line-height:5px;color:#1d1d1d;font-weight:bold;letter-spacing:-0.143px;">The Equipment Library</span>
<span class="t " style="left:890.90px;top:402px;font-size:4.8px;line-height:5px;color:#1d1d1d;font-weight:bold;letter-spacing:-0.166px;">Adding Ground Leads</span>
<span class="t " style="left:890.90px;top:427px;font-size:4.8px;line-height:5px;color:#1d1d1d;font-weight:bold;letter-spacing:-0.127px;">Insert a BSD Connector with Origin, X Point, Y Point</span>
<span class="t " style="left:890.90px;top:452px;font-size:4.8px;line-height:5px;color:#1d1d1d;font-weight:bold;letter-spacing:-0.126px;">Insert a BSD Connector with Origin, X Vector, Y Vector</span>
<span class="t " style="left:890.90px;top:476px;font-size:4.8px;line-height:5px;color:#1d1d1d;font-weight:bold;letter-spacing:-0.158px;">Pasting Substation Data from SBIF</span>
<span class="t " style="left:890.90px;top:501px;font-size:4.8px;line-height:5px;color:#1d1d1d;font-weight:bold;letter-spacing:-0.143px;">Pick Fittings to Add Bus</span>
<span class="t " style="left:890.90px;top:509px;font-size:4.6px;line-height:5px;color:#9c9c9c;letter-spacing:-0.175px;">You can add a bus to your design by selecting the appropriate</span>
<span class="t " style="left:890.90px;top:515px;font-size:4.6px;line-height:5px;color:#9c9c9c;">fittings.</span>
<span class="t " style="left:890.90px;top:526px;font-size:4.8px;line-height:5px;color:#1d1d1d;font-weight:bold;letter-spacing:-0.124px;">Pick Fittings to Add Cable</span>
<span class="t " style="left:890.90px;top:534px;font-size:4.6px;line-height:5px;color:#9c9c9c;letter-spacing:-0.227px;">You can add a cable to your design by selecting the appropriate</span>
<span class="t " style="left:890.90px;top:540px;font-size:4.6px;line-height:5px;color:#9c9c9c;">fittings.</span>
<span class="t " style="left:890.90px;top:551px;font-size:4.8px;line-height:5px;color:#1d1d1d;font-weight:bold;letter-spacing:-0.149px;">Insert a BSD Connector using Three Holes</span>
<div class="b" style="left:865.2px;top:76.8px;width:158.8px;height:488.6px;"><svg class="b" style="left:-865.20px;top:-76.80px;" width="1024" height="576" viewBox="0 0 1024 576"><rect x="867.2" y="144.2" width="20.600" height="20.400" fill="#f4f4f4"/><rect x="870.2" y="147.3" width="14.600" height="14.400" fill="#fff" stroke="#6e6e6e" stroke-width=".55" stroke-dasharray="1.300 1.300"/><path d="M873.400 154.39999999999998h8" stroke="#333" stroke-width=".5"/><path d="M873 154.39999999999998l2-1.300v2.600zM881.800 154.39999999999998l-2-1.300v2.600z" fill="#ee6fee"/><circle cx="877.400" cy="154.39999999999998" r="1.800" fill="#fff" stroke="#1f1f1f" stroke-width="1"/><rect x="867.2" y="169.1" width="20.600" height="20.400" fill="#f4f4f4"/><rect x="870.2" y="172.2" width="14.600" height="14.400" fill="#fff" stroke="#6e6e6e" stroke-width=".55" stroke-dasharray="1.300 1.300"/><g transform="translate(877.4 179.4)"><path d="M-1.400 -1.800L-3 -3.600M0 -1.800V-3.400M1.400 -1.800L3 -3.600" stroke="#4a4a4a" stroke-width=".6"/><rect x="-2.600" y="-2" width="5.200" height="5.200" fill="#f2f2f2" stroke="#5a5a5a" stroke-width=".55"/><path d="M-3.200 -.2h6.400M-2.600 1.300h5.200" stroke="#5a5a5a" stroke-width=".55"/><path d="M-2.200 3.200L-3 4.200M2.200 3.200L3 4.200" stroke="#3a3a3a" stroke-width=".7"/><path d="M-3.600 4.200h1.600M2 4.200h1.600" stroke="#1a1a1a" stroke-width=".8"/></g><rect x="867.2" y="193.9" width="20.600" height="20.400" fill="#f4f4f4"/><rect x="870.2" y="197.0" width="14.600" height="14.400" fill="#fff" stroke="#6e6e6e" stroke-width=".55" stroke-dasharray="1.300 1.300"/><rect x="874" y="205.7" width="1.800" height="1.800" fill="#ea86ee"/><rect x="879.300" y="200.1" width="1.800" height="1.800" fill="#ea86ee"/><path d="M875 206.5c-.2-3.200 2-2.800 2.800-3s2.200-.4 2.400-2.600" stroke="#222" stroke-width="1" fill="none" stroke-linecap="round"/><g transform="translate(877.4 235.4) skewX(-30) rotate(-12)"><rect x="-6" y="-3" width="12" height="7" fill="#eeeeee" stroke="#d0d0d0" stroke-width=".4"/><path d="M-4 -1h8M-4 .6h8M-4 2.2h6" stroke="#cfcfcf" stroke-width=".4"/></g><rect x="867.2" y="252.1" width="20.600" height="20.400" fill="#f4f4f4"/><rect x="870.2" y="255.2" width="14.600" height="14.400" fill="#fff" stroke="#6e6e6e" stroke-width=".55" stroke-dasharray="1.300 1.300"/><g transform="translate(877.4 262.4)"><path d="M-1.400 -1.800L-3 -3.600M0 -1.800V-3.400M1.400 -1.800L3 -3.600" stroke="#4a4a4a" stroke-width=".6"/><rect x="-2.600" y="-2" width="5.200" height="5.200" fill="#f2f2f2" stroke="#5a5a5a" stroke-width=".55"/><path d="M-3.200 -.2h6.400M-2.600 1.300h5.200" stroke="#5a5a5a" stroke-width=".55"/><path d="M-2.200 3.200L-3 4.200M2.200 3.200L3 4.200" stroke="#3a3a3a" stroke-width=".7"/><path d="M-3.600 4.200h1.600M2 4.200h1.600" stroke="#1a1a1a" stroke-width=".8"/></g><rect x="867.2" y="276.9" width="20.600" height="20.400" fill="#f4f4f4"/><rect x="870.2" y="280.0" width="14.600" height="14.400" fill="#fff" stroke="#6e6e6e" stroke-width=".55" stroke-dasharray="1.300 1.300"/><g transform="translate(877.4 287.2)"><path d="M-1.400 -1.800L-3 -3.600M0 -1.800V-3.400M1.400 -1.800L3 -3.600" stroke="#4a4a4a" stroke-width=".6"/><rect x="-2.600" y="-2" width="5.200" height="5.200" fill="#f2f2f2" stroke="#5a5a5a" stroke-width=".55"/><path d="M-3.200 -.2h6.400M-2.600 1.300h5.200" stroke="#5a5a5a" stroke-width=".55"/><path d="M-2.200 3.200L-3 4.200M2.200 3.200L3 4.200" stroke="#3a3a3a" stroke-width=".7"/><path d="M-3.600 4.200h1.600M2 4.200h1.600" stroke="#1a1a1a" stroke-width=".8"/></g><text x="877.4" y="282.4" font-size="2.100" font-weight="bold" fill="#d8506a" text-anchor="middle">Placeholder</text><rect x="867.2" y="301.6" width="20.600" height="20.400" fill="#f4f4f4"/><rect x="870.2" y="304.7" width="14.600" height="14.400" fill="#fff" stroke="#6e6e6e" stroke-width=".55" stroke-dasharray="1.300 1.300"/><g transform="translate(877.4 311.9)"><path d="M-1.400 -1.800L-3 -3.600M0 -1.800V-3.400M1.400 -1.800L3 -3.600" stroke="#4a4a4a" stroke-width=".6"/><rect x="-2.600" y="-2" width="5.200" height="5.200" fill="#f2f2f2" stroke="#5a5a5a" stroke-width=".55"/><path d="M-3.200 -.2h6.400M-2.600 1.300h5.200" stroke="#5a5a5a" stroke-width=".55"/><path d="M-2.200 3.200L-3 4.200M2.200 3.200L3 4.200" stroke="#3a3a3a" stroke-width=".7"/><path d="M-3.600 4.200h1.600M2 4.200h1.600" stroke="#1a1a1a" stroke-width=".8"/></g><text x="877.4" y="307.1" font-size="2.100" font-weight="bold" fill="#d8506a" text-anchor="middle">Placeholder</text><rect x="867.2" y="326.4" width="20.600" height="20.400" fill="#f4f4f4"/><rect x="870.2" y="329.5" width="14.600" height="14.400" fill="#fff" stroke="#6e6e6e" stroke-width=".55" stroke-dasharray="1.300 1.300"/><g transform="translate(877.4 336.7)"><path d="M-1.400 -1.800L-3 -3.600M0 -1.800V-3.400M1.400 -1.800L3 -3.600" stroke="#4a4a4a" stroke-width=".6"/><rect x="-2.600" y="-2" width="5.200" height="5.200" fill="#f2f2f2" stroke="#5a5a5a" stroke-width=".55"/><path d="M-3.200 -.2h6.400M-2.600 1.300h5.200" stroke="#5a5a5a" stroke-width=".55"/><path d="M-2.200 3.200L-3 4.200M2.200 3.200L3 4.200" stroke="#3a3a3a" stroke-width=".7"/><path d="M-3.600 4.200h1.600M2 4.200h1.600" stroke="#1a1a1a" stroke-width=".8"/></g><text x="877.4" y="331.9" font-size="2.100" font-weight="bold" fill="#d8506a" text-anchor="middle">Placeholder</text><rect x="867.2" y="351.1" width="20.600" height="20.400" fill="#f4f4f4"/><rect x="870.2" y="354.2" width="14.600" height="14.400" fill="#fff" stroke="#6e6e6e" stroke-width=".55" stroke-dasharray="1.300 1.300"/><g transform="translate(877.4 361.4)"><path d="M-1.400 -1.800L-3 -3.600M0 -1.800V-3.400M1.400 -1.800L3 -3.600" stroke="#4a4a4a" stroke-width=".6"/><rect x="-2.600" y="-2" width="5.200" height="5.200" fill="#f2f2f2" stroke="#5a5a5a" stroke-width=".55"/><path d="M-3.200 -.2h6.400M-2.600 1.300h5.200" stroke="#5a5a5a" stroke-width=".55"/><path d="M-2.200 3.200L-3 4.200M2.200 3.200L3 4.200" stroke="#3a3a3a" stroke-width=".7"/><path d="M-3.600 4.200h1.600M2 4.200h1.600" stroke="#1a1a1a" stroke-width=".8"/></g><text x="877.4" y="356.6" font-size="2.100" font-weight="bold" fill="#d8506a" text-anchor="middle">Placeholder</text><rect x="867.2" y="376.2" width="20.600" height="20.400" fill="#f4f4f4"/><rect x="870.2" y="379.3" width="14.600" height="14.400" fill="#fff" stroke="#6e6e6e" stroke-width=".55" stroke-dasharray="1.300 1.300"/><g transform="translate(877.4 386.5)"><path d="M-1.400 -1.800L-3 -3.600M0 -1.800V-3.400M1.400 -1.800L3 -3.600" stroke="#4a4a4a" stroke-width=".6"/><rect x="-2.600" y="-2" width="5.200" height="5.200" fill="#f2f2f2" stroke="#5a5a5a" stroke-width=".55"/><path d="M-3.200 -.2h6.400M-2.600 1.300h5.200" stroke="#5a5a5a" stroke-width=".55"/><path d="M-2.200 3.200L-3 4.200M2.200 3.200L3 4.200" stroke="#3a3a3a" stroke-width=".7"/><path d="M-3.600 4.200h1.600M2 4.200h1.600" stroke="#1a1a1a" stroke-width=".8"/></g><text x="877.4" y="381.7" font-size="2.100" font-weight="bold" fill="#d8506a" text-anchor="middle">Placeholder</text><rect x="867.2" y="400.8" width="20.600" height="20.400" fill="#f4f4f4"/><rect x="870.2" y="403.9" width="14.600" height="14.400" fill="#fff" stroke="#6e6e6e" stroke-width=".55" stroke-dasharray="1.300 1.300"/><g transform="translate(877.4 411.1)"><path d="M-1.400 -1.800L-3 -3.600M0 -1.800V-3.400M1.400 -1.800L3 -3.600" stroke="#4a4a4a" stroke-width=".6"/><rect x="-2.600" y="-2" width="5.200" height="5.200" fill="#f2f2f2" stroke="#5a5a5a" stroke-width=".55"/><path d="M-3.200 -.2h6.400M-2.600 1.300h5.200" stroke="#5a5a5a" stroke-width=".55"/><path d="M-2.200 3.200L-3 4.200M2.200 3.200L3 4.200" stroke="#3a3a3a" stroke-width=".7"/><path d="M-3.600 4.200h1.600M2 4.200h1.600" stroke="#1a1a1a" stroke-width=".8"/></g><text x="877.4" y="406.3" font-size="2.100" font-weight="bold" fill="#d8506a" text-anchor="middle">Placeholder</text><rect x="867.2" y="425.6" width="20.600" height="20.400" fill="#f4f4f4"/><rect x="870.2" y="428.7" width="14.600" height="14.400" fill="#fff" stroke="#6e6e6e" stroke-width=".55" stroke-dasharray="1.300 1.300"/><g transform="translate(877.4 435.9)"><path d="M-1.400 -1.800L-3 -3.600M0 -1.800V-3.400M1.400 -1.800L3 -3.600" stroke="#4a4a4a" stroke-width=".6"/><rect x="-2.600" y="-2" width="5.200" height="5.200" fill="#f2f2f2" stroke="#5a5a5a" stroke-width=".55"/><path d="M-3.200 -.2h6.400M-2.600 1.300h5.200" stroke="#5a5a5a" stroke-width=".55"/><path d="M-2.200 3.200L-3 4.200M2.200 3.200L3 4.200" stroke="#3a3a3a" stroke-width=".7"/><path d="M-3.600 4.200h1.600M2 4.200h1.600" stroke="#1a1a1a" stroke-width=".8"/></g><text x="877.4" y="431.1" font-size="2.100" font-weight="bold" fill="#d8506a" text-anchor="middle">Placeholder</text><rect x="867.2" y="450.5" width="20.600" height="20.400" fill="#f4f4f4"/><rect x="870.2" y="453.6" width="14.600" height="14.400" fill="#fff" stroke="#6e6e6e" stroke-width=".55" stroke-dasharray="1.300 1.300"/><g transform="translate(877.4 460.8)"><path d="M-1.400 -1.800L-3 -3.600M0 -1.800V-3.400M1.400 -1.800L3 -3.600" stroke="#4a4a4a" stroke-width=".6"/><rect x="-2.600" y="-2" width="5.200" height="5.200" fill="#f2f2f2" stroke="#5a5a5a" stroke-width=".55"/><path d="M-3.200 -.2h6.400M-2.600 1.300h5.200" stroke="#5a5a5a" stroke-width=".55"/><path d="M-2.200 3.200L-3 4.200M2.200 3.200L3 4.200" stroke="#3a3a3a" stroke-width=".7"/><path d="M-3.600 4.200h1.600M2 4.200h1.600" stroke="#1a1a1a" stroke-width=".8"/></g><text x="877.4" y="456.0" font-size="2.100" font-weight="bold" fill="#d8506a" text-anchor="middle">Placeholder</text><rect x="867.2" y="475.0" width="20.600" height="20.400" fill="#f4f4f4"/><rect x="870.2" y="478.1" width="14.600" height="14.400" fill="#fff" stroke="#6e6e6e" stroke-width=".55" stroke-dasharray="1.300 1.300"/><g transform="translate(877.4 485.3)"><path d="M-1.400 -1.800L-3 -3.600M0 -1.800V-3.400M1.400 -1.800L3 -3.600" stroke="#4a4a4a" stroke-width=".6"/><rect x="-2.600" y="-2" width="5.200" height="5.200" fill="#f2f2f2" stroke="#5a5a5a" stroke-width=".55"/><path d="M-3.200 -.2h6.400M-2.600 1.300h5.200" stroke="#5a5a5a" stroke-width=".55"/><path d="M-2.200 3.200L-3 4.200M2.200 3.200L3 4.200" stroke="#3a3a3a" stroke-width=".7"/><path d="M-3.600 4.200h1.600M2 4.200h1.600" stroke="#1a1a1a" stroke-width=".8"/></g><text x="877.4" y="480.5" font-size="2.100" font-weight="bold" fill="#d8506a" text-anchor="middle">Placeholder</text><rect x="867.2" y="500.2" width="20.600" height="20.400" fill="#f4f4f4"/><rect x="870.2" y="503.3" width="14.600" height="14.400" fill="#fff" stroke="#6e6e6e" stroke-width=".55" stroke-dasharray="1.300 1.300"/><path d="M873.400 510.40000000000003h8" stroke="#333" stroke-width=".5"/><path d="M873 510.40000000000003l2-1.300v2.600zM881.800 510.40000000000003l-2-1.300v2.600z" fill="#ee6fee"/><circle cx="877.400" cy="510.40000000000003" r="1.800" fill="#fff" stroke="#1f1f1f" stroke-width="1"/><rect x="867.2" y="525.1" width="20.600" height="20.400" fill="#f4f4f4"/><rect x="870.2" y="528.2" width="14.600" height="14.400" fill="#fff" stroke="#6e6e6e" stroke-width=".55" stroke-dasharray="1.300 1.300"/><rect x="874" y="536.9" width="1.800" height="1.800" fill="#ea86ee"/><rect x="879.300" y="531.3" width="1.800" height="1.800" fill="#ea86ee"/><path d="M875 537.7c-.2-3.200 2-2.800 2.800-3s2.200-.4 2.400-2.600" stroke="#222" stroke-width="1" fill="none" stroke-linecap="round"/><rect x="867.2" y="549.6" width="20.600" height="20.400" fill="#f4f4f4"/><rect x="870.2" y="552.7" width="14.600" height="14.400" fill="#fff" stroke="#6e6e6e" stroke-width=".55" stroke-dasharray="1.300 1.300"/><g transform="translate(877.4 559.9)"><path d="M-1.400 -1.800L-3 -3.600M0 -1.800V-3.400M1.400 -1.800L3 -3.600" stroke="#4a4a4a" stroke-width=".6"/><rect x="-2.600" y="-2" width="5.200" height="5.200" fill="#f2f2f2" stroke="#5a5a5a" stroke-width=".55"/><path d="M-3.200 -.2h6.400M-2.600 1.300h5.200" stroke="#5a5a5a" stroke-width=".55"/><path d="M-2.200 3.200L-3 4.200M2.200 3.200L3 4.200" stroke="#3a3a3a" stroke-width=".7"/><path d="M-3.600 4.200h1.600M2 4.200h1.600" stroke="#1a1a1a" stroke-width=".8"/></g><text x="877.4" y="555.1" font-size="2.100" font-weight="bold" fill="#d8506a" text-anchor="middle">Placeholder</text></svg></div>
<div class="b" style="left:0.00px;top:566.20px;width:1024.00px;height:9.80px;background:#3b4453;"></div>
<span class="t " style="left:0.80px;top:568px;font-size:4.7px;line-height:5px;color:#e6e8eb;letter-spacing:-0.081px;">Click to select, TAB for alternates, CTRL adds, SHIFT unselects.</span>
<svg class="b" style="left:0.00px;top:0.00px;" width="1024" height="576" viewBox="0 0 1024 576"><circle cx="627.4" cy="569.4" r="1.3" fill="#5aa7f0"/><circle cx="629.6" cy="569.6" r="1.3" fill="#e8c341"/><circle cx="628.4" cy="571.6" r="1.4" fill="#63c070"/><path d="M635 573.6h76" stroke="#8a919d" stroke-width=".4"/><path d="M713.2 570.2l1 1 1-1" stroke="#c9cdd3" stroke-width=".5" fill="none"/><path d="M719.8 572.6l2-3.6 2 3.6z" fill="#dfe2e6"/><circle cx="723" cy="569" r="1" fill="#dfe2e6"/><path d="M738 568.8l2.4-1.2 2.4 1.2v3l-2.4 1.2-2.4-1.2z" fill="#e6e8eb"/><path d="M738 568.8l2.4 1.2 2.4-1.2M740.4 570v3" stroke="#8a919d" stroke-width=".4" fill="none"/><rect x="750" y="568" width="5.6" height="5" fill="#dfe2e6"/><path d="M750 569.6h5.6M750 571.2h5.6" stroke="#7d8592" stroke-width=".4"/><rect x="760.4" y="568" width="5.4" height="5" fill="#7d8592"/><path d="M770 573.6h80" stroke="#5d6675" stroke-width=".4"/><path d="M846.6 570.2l1 1 1-1" stroke="#8a919d" stroke-width=".5" fill="none"/><rect x="899.8" y="569" width="2.6" height="2.6" fill="none" stroke="#aeb4be" stroke-width=".4"/><g fill="none" stroke="#d9a27a" stroke-width=".6"><rect x="938.800" y="568" width="2.600" height="1.600" rx=".8"/><rect x="940.800" y="568" width="2.600" height="1.600" rx=".8"/></g><path d="M942 569.6v4.2l1-.9.8 1.600.8-.4-.8-1.500h1.300z" fill="#f4f5f6"/><path d="M948.600 572.800v-3.200l2-1.600v4.800z" fill="#4f8fe8"/><path d="M951.800 567.800l1.800 1.800M953.600 567.800l-1.800 1.800" stroke="#e8453c" stroke-width=".7"/><path d="M951.6 569.6v4.2l1-.9.8 1.600.8-.4-.8-1.500h1.300z" fill="#f4f5f6"/><path d="M958.600 568h3.400M960.300 568v2.600M959.200 570.600h2.200" stroke="#f4f5f6" stroke-width=".7"/><path d="M961.4 569.6v4.2l1-.9.8 1.600.8-.4-.8-1.500h1.300z" fill="#f4f5f6"/><path d="M967.600 572.800v-3.200l2-1.600v4.800z" fill="#4f8fe8"/><path d="M970.800 567.800l1.800 1.800M972.600 567.800l-1.800 1.800" stroke="#e8453c" stroke-width=".7"/><path d="M970.6 569.6v4.2l1-.9.8 1.600.8-.4-.8-1.500h1.300z" fill="#f4f5f6"/><path d="M977.200 570.200h3.600M979 568.200v4" stroke="#f4f5f6" stroke-width=".7"/><path d="M980.6 569.6v4.2l1-.9.8 1.600.8-.4-.8-1.500h1.300z" fill="#f4f5f6"/><circle cx="989.500" cy="571" r="1.900" fill="none" stroke="#8a919d" stroke-width=".6" stroke-dasharray=".8 .6"/><path d="M995.200 568.400h5.600l-2 2.400v2.800l-1.600-1v-1.800z" fill="#e6e8eb"/></svg>
<span class="t " style="left:635.60px;top:569px;font-size:4.7px;line-height:5px;color:#e6e8eb;letter-spacing:0.082px;">Workset1 (Not Editable)</span>
<span class="t " style="left:724.60px;top:569px;font-size:4.2px;line-height:5px;color:#e6e8eb;">0</span>
<span class="t " style="left:769.60px;top:569px;font-size:4.7px;line-height:5px;color:#737b89;letter-spacing:-0.055px;">Main Model</span>
<span class="t " style="left:903.00px;top:569px;font-size:4.7px;line-height:5px;color:#e6e8eb;letter-spacing:0.037px;">Editable Only</span>
<span class="t " style="left:1001.60px;top:569px;font-size:4.7px;line-height:5px;color:#e6e8eb;">:1</span>
</div></body></html>
